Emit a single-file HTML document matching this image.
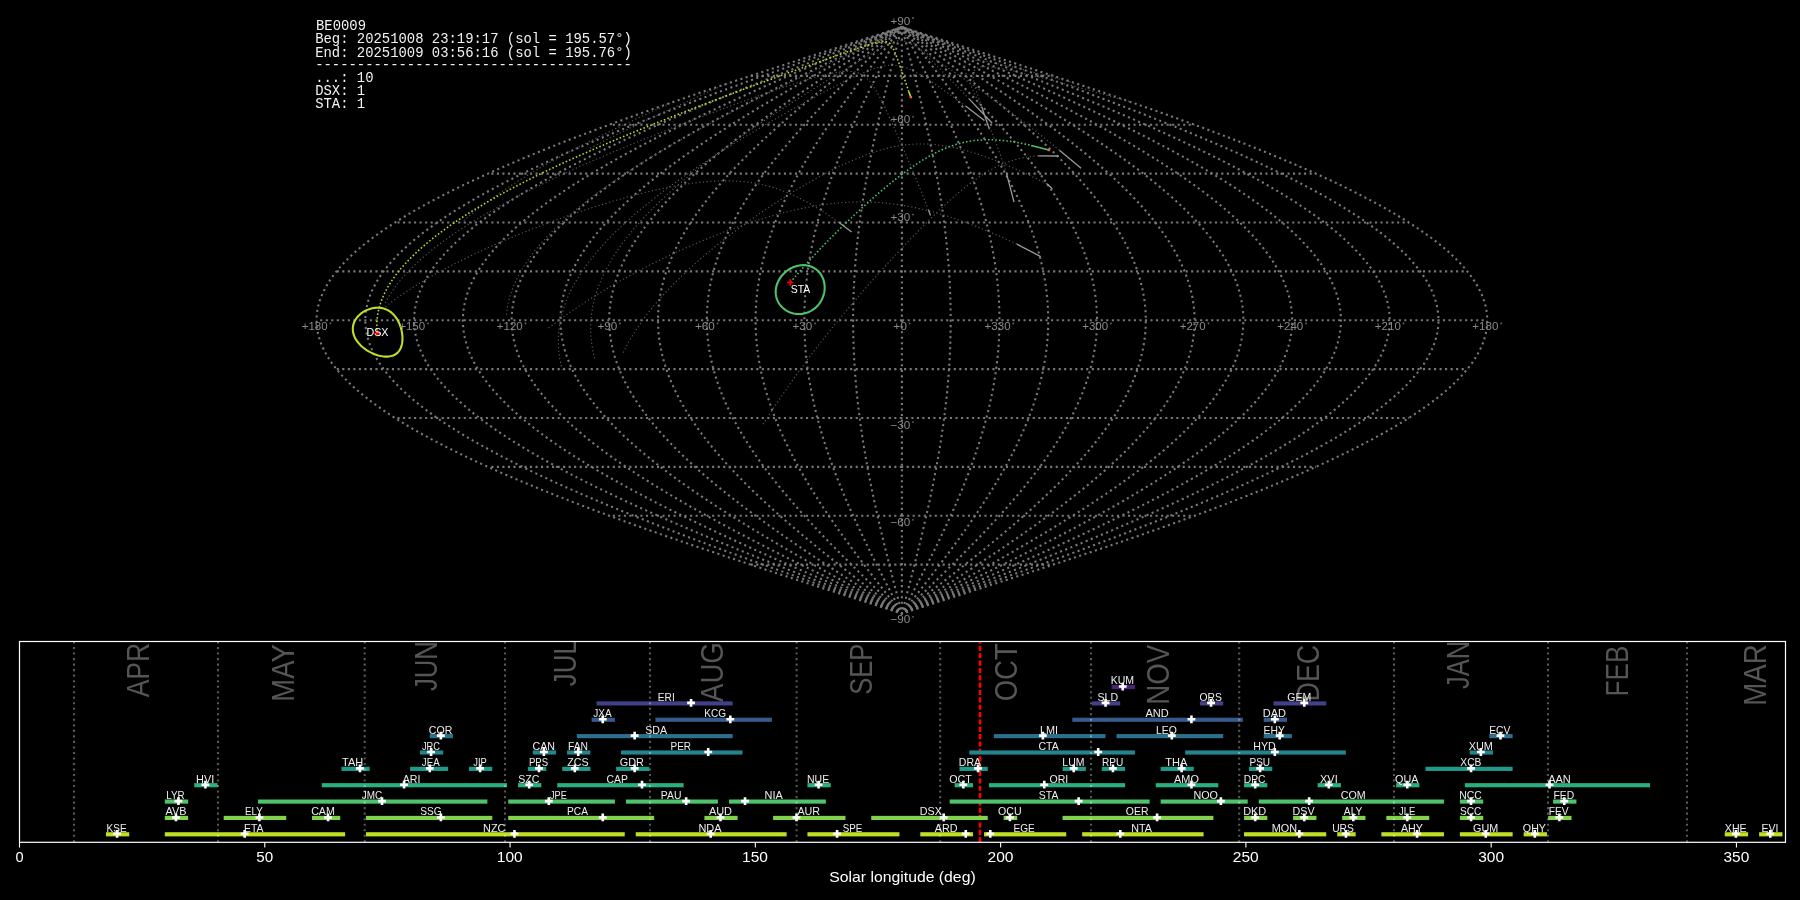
<!DOCTYPE html>
<html><head><meta charset="utf-8"><style>html,body{margin:0;padding:0;background:#000;width:1800px;height:900px;overflow:hidden}svg{display:block;will-change:transform}</style></head>
<body><svg width="1800" height="900" viewBox="0 0 1800 900"><rect width="1800" height="900" fill="#000"/>
<g fill="none" stroke="#7a7a7a" stroke-width="2.08" stroke-dasharray="2.08 3.44"><path d="M901.9 564.6 H750.4"/><path d="M901.9 564.6 H1053.4" stroke-dashoffset="3.43"/><path d="M901.9 515.73 H609.22"/><path d="M901.9 515.73 H1194.58" stroke-dashoffset="0.25"/><path d="M901.9 466.86 H487.99"/><path d="M901.9 466.86 H1315.81" stroke-dashoffset="0.78"/><path d="M901.9 417.99 H394.96"/><path d="M901.9 417.99 H1408.84" stroke-dashoffset="1.6"/><path d="M901.9 369.12 H336.49"/><path d="M901.9 369.12 H1467.31" stroke-dashoffset="3.32"/><path d="M901.9 320.25 H316.54"/><path d="M901.9 320.25 H1487.26" stroke-dashoffset="5.37"/><path d="M901.9 271.38 H336.49"/><path d="M901.9 271.38 H1467.31" stroke-dashoffset="3.32"/><path d="M901.9 222.51 H394.96"/><path d="M901.9 222.51 H1408.84" stroke-dashoffset="1.6"/><path d="M901.9 173.64 H487.99"/><path d="M901.9 173.64 H1315.81" stroke-dashoffset="0.78"/><path d="M901.9 124.77 H609.22"/><path d="M901.9 124.77 H1194.58" stroke-dashoffset="0.25"/><path d="M901.9 75.9 H750.4"/><path d="M901.9 75.9 H1053.4" stroke-dashoffset="3.43"/><path d="M901.9 613.47 L912.12 610.21 L922.33 606.95 L932.54 603.7 L942.73 600.44 L952.92 597.18 L963.09 593.92 L973.24 590.66 L983.37 587.41 L993.47 584.15 L1003.55 580.89 L1013.59 577.63 L1023.6 574.37 L1033.58 571.12 L1043.51 567.86 L1053.4 564.6 L1063.25 561.34 L1073.04 558.08 L1082.79 554.83 L1092.47 551.57 L1102.1 548.31 L1111.67 545.05 L1121.18 541.79 L1130.62 538.54 L1139.99 535.28 L1149.28 532.02 L1158.5 528.76 L1167.65 525.5 L1176.71 522.25 L1185.69 518.99 L1194.58 515.73 L1203.38 512.47 L1212.09 509.21 L1220.71 505.96 L1229.23 502.7 L1237.65 499.44 L1245.97 496.18 L1254.18 492.92 L1262.28 489.67 L1270.28 486.41 L1278.16 483.15 L1285.93 479.89 L1293.58 476.63 L1301.11 473.38 L1308.53 470.12 L1315.81 466.86 L1322.97 463.6 L1330.01 460.34 L1336.91 457.09 L1343.68 453.83 L1350.31 450.57 L1356.81 447.31 L1363.17 444.05 L1369.39 440.8 L1375.47 437.54 L1381.4 434.28 L1387.19 431.02 L1392.82 427.76 L1398.31 424.51 L1403.65 421.25 L1408.84 417.99 L1413.87 414.73 L1418.74 411.47 L1423.46 408.22 L1428.02 404.96 L1432.42 401.7 L1436.65 398.44 L1440.73 395.18 L1444.64 391.93 L1448.38 388.67 L1451.96 385.41 L1455.37 382.15 L1458.61 378.89 L1461.68 375.64 L1464.58 372.38 L1467.31 369.12 L1469.87 365.86 L1472.26 362.6 L1474.47 359.35 L1476.51 356.09 L1478.37 352.83 L1480.05 349.57 L1481.56 346.31 L1482.9 343.06 L1484.05 339.8 L1485.03 336.54 L1485.83 333.28 L1486.46 330.02 L1486.9 326.77 L1487.17 323.51 L1487.26 320.25 L1487.17 316.99 L1486.9 313.73 L1486.46 310.48 L1485.83 307.22 L1485.03 303.96 L1484.05 300.7 L1482.9 297.44 L1481.56 294.19 L1480.05 290.93 L1478.37 287.67 L1476.51 284.41 L1474.47 281.15 L1472.26 277.9 L1469.87 274.64 L1467.31 271.38 L1464.58 268.12 L1461.68 264.86 L1458.61 261.61 L1455.37 258.35 L1451.96 255.09 L1448.38 251.83 L1444.64 248.57 L1440.73 245.32 L1436.65 242.06 L1432.42 238.8 L1428.02 235.54 L1423.46 232.28 L1418.74 229.03 L1413.87 225.77 L1408.84 222.51 L1403.65 219.25 L1398.31 215.99 L1392.82 212.74 L1387.19 209.48 L1381.4 206.22 L1375.47 202.96 L1369.39 199.7 L1363.17 196.45 L1356.81 193.19 L1350.31 189.93 L1343.68 186.67 L1336.91 183.41 L1330.01 180.16 L1322.97 176.9 L1315.81 173.64 L1308.53 170.38 L1301.11 167.12 L1293.58 163.87 L1285.93 160.61 L1278.16 157.35 L1270.28 154.09 L1262.28 150.83 L1254.18 147.58 L1245.97 144.32 L1237.65 141.06 L1229.23 137.8 L1220.71 134.54 L1212.09 131.29 L1203.38 128.03 L1194.58 124.77 L1185.69 121.51 L1176.71 118.25 L1167.65 115 L1158.5 111.74 L1149.28 108.48 L1139.99 105.22 L1130.62 101.96 L1121.18 98.71 L1111.67 95.45 L1102.1 92.19 L1092.47 88.93 L1082.79 85.67 L1073.04 82.42 L1063.25 79.16 L1053.4 75.9 L1043.51 72.64 L1033.58 69.38 L1023.6 66.13 L1013.59 62.87 L1003.55 59.61 L993.47 56.35 L983.37 53.09 L973.24 49.84 L963.09 46.58 L952.92 43.32 L942.73 40.06 L932.54 36.8 L922.33 33.55 L912.12 30.29 L901.9 27.03" stroke-dashoffset="1.3"/><path d="M901.9 613.47 L911.26 610.21 L920.63 606.95 L929.98 603.7 L939.33 600.44 L948.67 597.18 L957.99 593.92 L967.29 590.66 L976.58 587.41 L985.84 584.15 L995.08 580.89 L1004.28 577.63 L1013.46 574.37 L1022.6 571.12 L1031.71 567.86 L1040.78 564.6 L1049.8 561.34 L1058.78 558.08 L1067.71 554.83 L1076.59 551.57 L1085.42 548.31 L1094.19 545.05 L1102.91 541.79 L1111.56 538.54 L1120.15 535.28 L1128.67 532.02 L1137.12 528.76 L1145.5 525.5 L1153.81 522.25 L1162.04 518.99 L1170.19 515.73 L1178.26 512.47 L1186.24 509.21 L1194.14 505.96 L1201.95 502.7 L1209.67 499.44 L1217.29 496.18 L1224.82 492.92 L1232.25 489.67 L1239.58 486.41 L1246.81 483.15 L1253.93 479.89 L1260.94 476.63 L1267.85 473.38 L1274.64 470.12 L1281.32 466.86 L1287.88 463.6 L1294.33 460.34 L1300.66 457.09 L1306.86 453.83 L1312.94 450.57 L1318.9 447.31 L1324.73 444.05 L1330.43 440.8 L1336 437.54 L1341.44 434.28 L1346.74 431.02 L1351.91 427.76 L1356.95 424.51 L1361.84 421.25 L1366.59 417.99 L1371.2 414.73 L1375.67 411.47 L1380 408.22 L1384.17 404.96 L1388.21 401.7 L1392.09 398.44 L1395.82 395.18 L1399.41 391.93 L1402.84 388.67 L1406.12 385.41 L1409.25 382.15 L1412.22 378.89 L1415.03 375.64 L1417.69 372.38 L1420.2 369.12 L1422.54 365.86 L1424.73 362.6 L1426.75 359.35 L1428.62 356.09 L1430.33 352.83 L1431.87 349.57 L1433.26 346.31 L1434.48 343.06 L1435.54 339.8 L1436.44 336.54 L1437.17 333.28 L1437.74 330.02 L1438.15 326.77 L1438.4 323.51 L1438.48 320.25 L1438.4 316.99 L1438.15 313.73 L1437.74 310.48 L1437.17 307.22 L1436.44 303.96 L1435.54 300.7 L1434.48 297.44 L1433.26 294.19 L1431.87 290.93 L1430.33 287.67 L1428.62 284.41 L1426.75 281.15 L1424.73 277.9 L1422.54 274.64 L1420.2 271.38 L1417.69 268.12 L1415.03 264.86 L1412.22 261.61 L1409.25 258.35 L1406.12 255.09 L1402.84 251.83 L1399.41 248.57 L1395.82 245.32 L1392.09 242.06 L1388.21 238.8 L1384.17 235.54 L1380 232.28 L1375.67 229.03 L1371.2 225.77 L1366.59 222.51 L1361.84 219.25 L1356.95 215.99 L1351.91 212.74 L1346.74 209.48 L1341.44 206.22 L1336 202.96 L1330.43 199.7 L1324.73 196.45 L1318.9 193.19 L1312.94 189.93 L1306.86 186.67 L1300.66 183.41 L1294.33 180.16 L1287.88 176.9 L1281.32 173.64 L1274.64 170.38 L1267.85 167.12 L1260.94 163.87 L1253.93 160.61 L1246.81 157.35 L1239.58 154.09 L1232.25 150.83 L1224.82 147.58 L1217.29 144.32 L1209.67 141.06 L1201.95 137.8 L1194.14 134.54 L1186.24 131.29 L1178.26 128.03 L1170.19 124.77 L1162.04 121.51 L1153.81 118.25 L1145.5 115 L1137.12 111.74 L1128.67 108.48 L1120.15 105.22 L1111.56 101.96 L1102.91 98.71 L1094.19 95.45 L1085.42 92.19 L1076.59 88.93 L1067.71 85.67 L1058.78 82.42 L1049.8 79.16 L1040.78 75.9 L1031.71 72.64 L1022.6 69.38 L1013.46 66.13 L1004.28 62.87 L995.08 59.61 L985.84 56.35 L976.58 53.09 L967.29 49.84 L957.99 46.58 L948.67 43.32 L939.33 40.06 L929.98 36.8 L920.63 33.55 L911.26 30.29 L901.9 27.03" stroke-dashoffset="1.3"/><path d="M901.9 613.47 L910.41 610.21 L918.92 606.95 L927.43 603.7 L935.93 600.44 L944.41 597.18 L952.89 593.92 L961.35 590.66 L969.79 587.41 L978.21 584.15 L986.61 580.89 L994.98 577.63 L1003.32 574.37 L1011.63 571.12 L1019.91 567.86 L1028.15 564.6 L1036.36 561.34 L1044.52 558.08 L1052.64 554.83 L1060.71 551.57 L1068.74 548.31 L1076.71 545.05 L1084.63 541.79 L1092.5 538.54 L1100.31 535.28 L1108.05 532.02 L1115.74 528.76 L1123.36 525.5 L1130.91 522.25 L1138.39 518.99 L1145.8 515.73 L1153.14 512.47 L1160.39 509.21 L1167.57 505.96 L1174.67 502.7 L1181.69 499.44 L1188.62 496.18 L1195.47 492.92 L1202.22 489.67 L1208.88 486.41 L1215.45 483.15 L1221.93 479.89 L1228.3 476.63 L1234.58 473.38 L1240.75 470.12 L1246.83 466.86 L1252.79 463.6 L1258.65 460.34 L1264.41 457.09 L1270.05 453.83 L1275.58 450.57 L1280.99 447.31 L1286.29 444.05 L1291.47 440.8 L1296.54 437.54 L1301.48 434.28 L1306.3 431.02 L1311 427.76 L1315.58 424.51 L1320.03 421.25 L1324.35 417.99 L1328.54 414.73 L1332.6 411.47 L1336.53 408.22 L1340.33 404.96 L1344 401.7 L1347.53 398.44 L1350.92 395.18 L1354.18 391.93 L1357.3 388.67 L1360.28 385.41 L1363.12 382.15 L1365.83 378.89 L1368.39 375.64 L1370.8 372.38 L1373.08 369.12 L1375.21 365.86 L1377.2 362.6 L1379.04 359.35 L1380.74 356.09 L1382.29 352.83 L1383.69 349.57 L1384.95 346.31 L1386.06 343.06 L1387.03 339.8 L1387.84 336.54 L1388.51 333.28 L1389.03 330.02 L1389.4 326.77 L1389.63 323.51 L1389.7 320.25 L1389.63 316.99 L1389.4 313.73 L1389.03 310.48 L1388.51 307.22 L1387.84 303.96 L1387.03 300.7 L1386.06 297.44 L1384.95 294.19 L1383.69 290.93 L1382.29 287.67 L1380.74 284.41 L1379.04 281.15 L1377.2 277.9 L1375.21 274.64 L1373.08 271.38 L1370.8 268.12 L1368.39 264.86 L1365.83 261.61 L1363.12 258.35 L1360.28 255.09 L1357.3 251.83 L1354.18 248.57 L1350.92 245.32 L1347.53 242.06 L1344 238.8 L1340.33 235.54 L1336.53 232.28 L1332.6 229.03 L1328.54 225.77 L1324.35 222.51 L1320.03 219.25 L1315.58 215.99 L1311 212.74 L1306.3 209.48 L1301.48 206.22 L1296.54 202.96 L1291.47 199.7 L1286.29 196.45 L1280.99 193.19 L1275.58 189.93 L1270.05 186.67 L1264.41 183.41 L1258.65 180.16 L1252.79 176.9 L1246.83 173.64 L1240.75 170.38 L1234.58 167.12 L1228.3 163.87 L1221.93 160.61 L1215.45 157.35 L1208.88 154.09 L1202.22 150.83 L1195.47 147.58 L1188.62 144.32 L1181.69 141.06 L1174.67 137.8 L1167.57 134.54 L1160.39 131.29 L1153.14 128.03 L1145.8 124.77 L1138.39 121.51 L1130.91 118.25 L1123.36 115 L1115.74 111.74 L1108.05 108.48 L1100.31 105.22 L1092.5 101.96 L1084.63 98.71 L1076.71 95.45 L1068.74 92.19 L1060.71 88.93 L1052.64 85.67 L1044.52 82.42 L1036.36 79.16 L1028.15 75.9 L1019.91 72.64 L1011.63 69.38 L1003.32 66.13 L994.98 62.87 L986.61 59.61 L978.21 56.35 L969.79 53.09 L961.35 49.84 L952.89 46.58 L944.41 43.32 L935.93 40.06 L927.43 36.8 L918.92 33.55 L910.41 30.29 L901.9 27.03" stroke-dashoffset="1.3"/><path d="M901.9 613.47 L909.56 610.21 L917.22 606.95 L924.88 603.7 L932.52 600.44 L940.16 597.18 L947.79 593.92 L955.4 590.66 L963 587.41 L970.58 584.15 L978.14 580.89 L985.67 577.63 L993.18 574.37 L1000.66 571.12 L1008.11 567.86 L1015.53 564.6 L1022.91 561.34 L1030.26 558.08 L1037.56 554.83 L1044.83 551.57 L1052.05 548.31 L1059.23 545.05 L1066.36 541.79 L1073.44 538.54 L1080.47 535.28 L1087.44 532.02 L1094.35 528.76 L1101.21 525.5 L1108.01 522.25 L1114.74 518.99 L1121.41 515.73 L1128.01 512.47 L1134.55 509.21 L1141.01 505.96 L1147.4 502.7 L1153.71 499.44 L1159.95 496.18 L1166.11 492.92 L1172.19 489.67 L1178.18 486.41 L1184.1 483.15 L1189.92 479.89 L1195.66 476.63 L1201.31 473.38 L1206.87 470.12 L1212.33 466.86 L1217.7 463.6 L1222.98 460.34 L1228.16 457.09 L1233.23 453.83 L1238.21 450.57 L1243.08 447.31 L1247.85 444.05 L1252.52 440.8 L1257.07 437.54 L1261.52 434.28 L1265.86 431.02 L1270.09 427.76 L1274.21 424.51 L1278.21 421.25 L1282.1 417.99 L1285.88 414.73 L1289.53 411.47 L1293.07 408.22 L1296.49 404.96 L1299.79 401.7 L1302.96 398.44 L1306.02 395.18 L1308.95 391.93 L1311.76 388.67 L1314.44 385.41 L1317 382.15 L1319.43 378.89 L1321.74 375.64 L1323.91 372.38 L1325.96 369.12 L1327.88 365.86 L1329.67 362.6 L1331.33 359.35 L1332.85 356.09 L1334.25 352.83 L1335.51 349.57 L1336.65 346.31 L1337.65 343.06 L1338.52 339.8 L1339.25 336.54 L1339.85 333.28 L1340.32 330.02 L1340.65 326.77 L1340.85 323.51 L1340.92 320.25 L1340.85 316.99 L1340.65 313.73 L1340.32 310.48 L1339.85 307.22 L1339.25 303.96 L1338.52 300.7 L1337.65 297.44 L1336.65 294.19 L1335.51 290.93 L1334.25 287.67 L1332.85 284.41 L1331.33 281.15 L1329.67 277.9 L1327.88 274.64 L1325.96 271.38 L1323.91 268.12 L1321.74 264.86 L1319.43 261.61 L1317 258.35 L1314.44 255.09 L1311.76 251.83 L1308.95 248.57 L1306.02 245.32 L1302.96 242.06 L1299.79 238.8 L1296.49 235.54 L1293.07 232.28 L1289.53 229.03 L1285.88 225.77 L1282.1 222.51 L1278.21 219.25 L1274.21 215.99 L1270.09 212.74 L1265.86 209.48 L1261.52 206.22 L1257.07 202.96 L1252.52 199.7 L1247.85 196.45 L1243.08 193.19 L1238.21 189.93 L1233.23 186.67 L1228.16 183.41 L1222.98 180.16 L1217.7 176.9 L1212.33 173.64 L1206.87 170.38 L1201.31 167.12 L1195.66 163.87 L1189.92 160.61 L1184.1 157.35 L1178.18 154.09 L1172.19 150.83 L1166.11 147.58 L1159.95 144.32 L1153.71 141.06 L1147.4 137.8 L1141.01 134.54 L1134.55 131.29 L1128.01 128.03 L1121.41 124.77 L1114.74 121.51 L1108.01 118.25 L1101.21 115 L1094.35 111.74 L1087.44 108.48 L1080.47 105.22 L1073.44 101.96 L1066.36 98.71 L1059.23 95.45 L1052.05 92.19 L1044.83 88.93 L1037.56 85.67 L1030.26 82.42 L1022.91 79.16 L1015.53 75.9 L1008.11 72.64 L1000.66 69.38 L993.18 66.13 L985.67 62.87 L978.14 59.61 L970.58 56.35 L963 53.09 L955.4 49.84 L947.79 46.58 L940.16 43.32 L932.52 40.06 L924.88 36.8 L917.22 33.55 L909.56 30.29 L901.9 27.03" stroke-dashoffset="1.3"/><path d="M901.9 613.47 L908.71 610.21 L915.52 606.95 L922.32 603.7 L929.12 600.44 L935.91 597.18 L942.69 593.92 L949.46 590.66 L956.21 587.41 L962.95 584.15 L969.66 580.89 L976.36 577.63 L983.04 574.37 L989.68 571.12 L996.31 567.86 L1002.9 564.6 L1009.46 561.34 L1016 558.08 L1022.49 554.83 L1028.95 551.57 L1035.37 548.31 L1041.75 545.05 L1048.09 541.79 L1054.38 538.54 L1060.62 535.28 L1066.82 532.02 L1072.97 528.76 L1079.07 525.5 L1085.11 522.25 L1091.09 518.99 L1097.02 515.73 L1102.89 512.47 L1108.7 509.21 L1114.44 505.96 L1120.12 502.7 L1125.73 499.44 L1131.28 496.18 L1136.75 492.92 L1142.16 489.67 L1147.49 486.41 L1152.74 483.15 L1157.92 479.89 L1163.02 476.63 L1168.04 473.38 L1172.98 470.12 L1177.84 466.86 L1182.62 463.6 L1187.3 460.34 L1191.9 457.09 L1196.42 453.83 L1200.84 450.57 L1205.17 447.31 L1209.41 444.05 L1213.56 440.8 L1217.61 437.54 L1221.57 434.28 L1225.42 431.02 L1229.18 427.76 L1232.84 424.51 L1236.4 421.25 L1239.86 417.99 L1243.21 414.73 L1246.46 411.47 L1249.61 408.22 L1252.65 404.96 L1255.58 401.7 L1258.4 398.44 L1261.12 395.18 L1263.72 391.93 L1266.22 388.67 L1268.61 385.41 L1270.88 382.15 L1273.04 378.89 L1275.09 375.64 L1277.02 372.38 L1278.84 369.12 L1280.55 365.86 L1282.14 362.6 L1283.61 359.35 L1284.97 356.09 L1286.21 352.83 L1287.34 349.57 L1288.34 346.31 L1289.23 343.06 L1290 339.8 L1290.66 336.54 L1291.19 333.28 L1291.61 330.02 L1291.9 326.77 L1292.08 323.51 L1292.14 320.25 L1292.08 316.99 L1291.9 313.73 L1291.61 310.48 L1291.19 307.22 L1290.66 303.96 L1290 300.7 L1289.23 297.44 L1288.34 294.19 L1287.34 290.93 L1286.21 287.67 L1284.97 284.41 L1283.61 281.15 L1282.14 277.9 L1280.55 274.64 L1278.84 271.38 L1277.02 268.12 L1275.09 264.86 L1273.04 261.61 L1270.88 258.35 L1268.61 255.09 L1266.22 251.83 L1263.72 248.57 L1261.12 245.32 L1258.4 242.06 L1255.58 238.8 L1252.65 235.54 L1249.61 232.28 L1246.46 229.03 L1243.21 225.77 L1239.86 222.51 L1236.4 219.25 L1232.84 215.99 L1229.18 212.74 L1225.42 209.48 L1221.57 206.22 L1217.61 202.96 L1213.56 199.7 L1209.41 196.45 L1205.17 193.19 L1200.84 189.93 L1196.42 186.67 L1191.9 183.41 L1187.3 180.16 L1182.62 176.9 L1177.84 173.64 L1172.98 170.38 L1168.04 167.12 L1163.02 163.87 L1157.92 160.61 L1152.74 157.35 L1147.49 154.09 L1142.16 150.83 L1136.75 147.58 L1131.28 144.32 L1125.73 141.06 L1120.12 137.8 L1114.44 134.54 L1108.7 131.29 L1102.89 128.03 L1097.02 124.77 L1091.09 121.51 L1085.11 118.25 L1079.07 115 L1072.97 111.74 L1066.82 108.48 L1060.62 105.22 L1054.38 101.96 L1048.09 98.71 L1041.75 95.45 L1035.37 92.19 L1028.95 88.93 L1022.49 85.67 L1016 82.42 L1009.46 79.16 L1002.9 75.9 L996.31 72.64 L989.68 69.38 L983.04 66.13 L976.36 62.87 L969.66 59.61 L962.95 56.35 L956.21 53.09 L949.46 49.84 L942.69 46.58 L935.91 43.32 L929.12 40.06 L922.32 36.8 L915.52 33.55 L908.71 30.29 L901.9 27.03" stroke-dashoffset="1.3"/><path d="M901.9 613.47 L907.86 610.21 L913.82 606.95 L919.77 603.7 L925.72 600.44 L931.66 597.18 L937.59 593.92 L943.51 590.66 L949.42 587.41 L955.32 584.15 L961.19 580.89 L967.05 577.63 L972.89 574.37 L978.71 571.12 L984.51 567.86 L990.28 564.6 L996.02 561.34 L1001.73 558.08 L1007.42 554.83 L1013.07 551.57 L1018.69 548.31 L1024.27 545.05 L1029.81 541.79 L1035.32 538.54 L1040.78 535.28 L1046.21 532.02 L1051.59 528.76 L1056.92 525.5 L1062.21 522.25 L1067.44 518.99 L1072.63 515.73 L1077.76 512.47 L1082.85 509.21 L1087.87 505.96 L1092.84 502.7 L1097.75 499.44 L1102.61 496.18 L1107.4 492.92 L1112.12 489.67 L1116.79 486.41 L1121.39 483.15 L1125.92 479.89 L1130.38 476.63 L1134.78 473.38 L1139.1 470.12 L1143.35 466.86 L1147.53 463.6 L1151.63 460.34 L1155.65 457.09 L1159.6 453.83 L1163.47 450.57 L1167.26 447.31 L1170.97 444.05 L1174.6 440.8 L1178.15 437.54 L1181.61 434.28 L1184.98 431.02 L1188.27 427.76 L1191.47 424.51 L1194.59 421.25 L1197.61 417.99 L1200.55 414.73 L1203.39 411.47 L1206.14 408.22 L1208.8 404.96 L1211.37 401.7 L1213.84 398.44 L1216.22 395.18 L1218.5 391.93 L1220.68 388.67 L1222.77 385.41 L1224.76 382.15 L1226.65 378.89 L1228.44 375.64 L1230.13 372.38 L1231.73 369.12 L1233.22 365.86 L1234.61 362.6 L1235.9 359.35 L1237.09 356.09 L1238.17 352.83 L1239.16 349.57 L1240.04 346.31 L1240.81 343.06 L1241.49 339.8 L1242.06 336.54 L1242.53 333.28 L1242.89 330.02 L1243.15 326.77 L1243.31 323.51 L1243.36 320.25 L1243.31 316.99 L1243.15 313.73 L1242.89 310.48 L1242.53 307.22 L1242.06 303.96 L1241.49 300.7 L1240.81 297.44 L1240.04 294.19 L1239.16 290.93 L1238.17 287.67 L1237.09 284.41 L1235.9 281.15 L1234.61 277.9 L1233.22 274.64 L1231.73 271.38 L1230.13 268.12 L1228.44 264.86 L1226.65 261.61 L1224.76 258.35 L1222.77 255.09 L1220.68 251.83 L1218.5 248.57 L1216.22 245.32 L1213.84 242.06 L1211.37 238.8 L1208.8 235.54 L1206.14 232.28 L1203.39 229.03 L1200.55 225.77 L1197.61 222.51 L1194.59 219.25 L1191.47 215.99 L1188.27 212.74 L1184.98 209.48 L1181.61 206.22 L1178.15 202.96 L1174.6 199.7 L1170.97 196.45 L1167.26 193.19 L1163.47 189.93 L1159.6 186.67 L1155.65 183.41 L1151.63 180.16 L1147.53 176.9 L1143.35 173.64 L1139.1 170.38 L1134.78 167.12 L1130.38 163.87 L1125.92 160.61 L1121.39 157.35 L1116.79 154.09 L1112.12 150.83 L1107.4 147.58 L1102.61 144.32 L1097.75 141.06 L1092.84 137.8 L1087.87 134.54 L1082.85 131.29 L1077.76 128.03 L1072.63 124.77 L1067.44 121.51 L1062.21 118.25 L1056.92 115 L1051.59 111.74 L1046.21 108.48 L1040.78 105.22 L1035.32 101.96 L1029.81 98.71 L1024.27 95.45 L1018.69 92.19 L1013.07 88.93 L1007.42 85.67 L1001.73 82.42 L996.02 79.16 L990.28 75.9 L984.51 72.64 L978.71 69.38 L972.89 66.13 L967.05 62.87 L961.19 59.61 L955.32 56.35 L949.42 53.09 L943.51 49.84 L937.59 46.58 L931.66 43.32 L925.72 40.06 L919.77 36.8 L913.82 33.55 L907.86 30.29 L901.9 27.03" stroke-dashoffset="1.3"/><path d="M901.9 613.47 L907.01 610.21 L912.11 606.95 L917.22 603.7 L922.32 600.44 L927.41 597.18 L932.49 593.92 L937.57 590.66 L942.63 587.41 L947.69 584.15 L952.72 580.89 L957.75 577.63 L962.75 574.37 L967.74 571.12 L972.71 567.86 L977.65 564.6 L982.57 561.34 L987.47 558.08 L992.34 554.83 L997.19 551.57 L1002 548.31 L1006.79 545.05 L1011.54 541.79 L1016.26 538.54 L1020.94 535.28 L1025.59 532.02 L1030.2 528.76 L1034.77 525.5 L1039.3 522.25 L1043.79 518.99 L1048.24 515.73 L1052.64 512.47 L1057 509.21 L1061.3 505.96 L1065.56 502.7 L1069.77 499.44 L1073.93 496.18 L1078.04 492.92 L1082.09 489.67 L1086.09 486.41 L1090.03 483.15 L1093.92 479.89 L1097.74 476.63 L1101.51 473.38 L1105.21 470.12 L1108.86 466.86 L1112.44 463.6 L1115.95 460.34 L1119.4 457.09 L1122.79 453.83 L1126.11 450.57 L1129.36 447.31 L1132.53 444.05 L1135.64 440.8 L1138.68 437.54 L1141.65 434.28 L1144.54 431.02 L1147.36 427.76 L1150.11 424.51 L1152.78 421.25 L1155.37 417.99 L1157.88 414.73 L1160.32 411.47 L1162.68 408.22 L1164.96 404.96 L1167.16 401.7 L1169.28 398.44 L1171.31 395.18 L1173.27 391.93 L1175.14 388.67 L1176.93 385.41 L1178.63 382.15 L1180.26 378.89 L1181.79 375.64 L1183.24 372.38 L1184.61 369.12 L1185.89 365.86 L1187.08 362.6 L1188.18 359.35 L1189.2 356.09 L1190.13 352.83 L1190.98 349.57 L1191.73 346.31 L1192.4 343.06 L1192.98 339.8 L1193.47 336.54 L1193.87 333.28 L1194.18 330.02 L1194.4 326.77 L1194.54 323.51 L1194.58 320.25 L1194.54 316.99 L1194.4 313.73 L1194.18 310.48 L1193.87 307.22 L1193.47 303.96 L1192.98 300.7 L1192.4 297.44 L1191.73 294.19 L1190.98 290.93 L1190.13 287.67 L1189.2 284.41 L1188.18 281.15 L1187.08 277.9 L1185.89 274.64 L1184.61 271.38 L1183.24 268.12 L1181.79 264.86 L1180.26 261.61 L1178.63 258.35 L1176.93 255.09 L1175.14 251.83 L1173.27 248.57 L1171.31 245.32 L1169.28 242.06 L1167.16 238.8 L1164.96 235.54 L1162.68 232.28 L1160.32 229.03 L1157.88 225.77 L1155.37 222.51 L1152.78 219.25 L1150.11 215.99 L1147.36 212.74 L1144.54 209.48 L1141.65 206.22 L1138.68 202.96 L1135.64 199.7 L1132.53 196.45 L1129.36 193.19 L1126.11 189.93 L1122.79 186.67 L1119.4 183.41 L1115.95 180.16 L1112.44 176.9 L1108.86 173.64 L1105.21 170.38 L1101.51 167.12 L1097.74 163.87 L1093.92 160.61 L1090.03 157.35 L1086.09 154.09 L1082.09 150.83 L1078.04 147.58 L1073.93 144.32 L1069.77 141.06 L1065.56 137.8 L1061.3 134.54 L1057 131.29 L1052.64 128.03 L1048.24 124.77 L1043.79 121.51 L1039.3 118.25 L1034.77 115 L1030.2 111.74 L1025.59 108.48 L1020.94 105.22 L1016.26 101.96 L1011.54 98.71 L1006.79 95.45 L1002 92.19 L997.19 88.93 L992.34 85.67 L987.47 82.42 L982.57 79.16 L977.65 75.9 L972.71 72.64 L967.74 69.38 L962.75 66.13 L957.75 62.87 L952.72 59.61 L947.69 56.35 L942.63 53.09 L937.57 49.84 L932.49 46.58 L927.41 43.32 L922.32 40.06 L917.22 36.8 L912.11 33.55 L907.01 30.29 L901.9 27.03" stroke-dashoffset="1.3"/><path d="M901.9 613.47 L906.16 610.21 L910.41 606.95 L914.66 603.7 L918.91 600.44 L923.16 597.18 L927.39 593.92 L931.62 590.66 L935.84 587.41 L940.05 584.15 L944.25 580.89 L948.44 577.63 L952.61 574.37 L956.77 571.12 L960.9 567.86 L965.03 564.6 L969.13 561.34 L973.21 558.08 L977.27 554.83 L981.31 551.57 L985.32 548.31 L989.31 545.05 L993.27 541.79 L997.2 538.54 L1001.1 535.28 L1004.98 532.02 L1008.82 528.76 L1012.63 525.5 L1016.4 522.25 L1020.15 518.99 L1023.85 515.73 L1027.52 512.47 L1031.15 509.21 L1034.74 505.96 L1038.29 502.7 L1041.8 499.44 L1045.26 496.18 L1048.68 492.92 L1052.06 489.67 L1055.39 486.41 L1058.68 483.15 L1061.91 479.89 L1065.1 476.63 L1068.24 473.38 L1071.33 470.12 L1074.36 466.86 L1077.35 463.6 L1080.28 460.34 L1083.15 457.09 L1085.97 453.83 L1088.74 450.57 L1091.45 447.31 L1094.1 444.05 L1096.69 440.8 L1099.22 437.54 L1101.69 434.28 L1104.1 431.02 L1106.45 427.76 L1108.74 424.51 L1110.96 421.25 L1113.12 417.99 L1115.22 414.73 L1117.25 411.47 L1119.22 408.22 L1121.12 404.96 L1122.95 401.7 L1124.71 398.44 L1126.41 395.18 L1128.04 391.93 L1129.6 388.67 L1131.09 385.41 L1132.51 382.15 L1133.86 378.89 L1135.14 375.64 L1136.35 372.38 L1137.49 369.12 L1138.56 365.86 L1139.55 362.6 L1140.47 359.35 L1141.32 356.09 L1142.09 352.83 L1142.8 349.57 L1143.43 346.31 L1143.98 343.06 L1144.46 339.8 L1144.87 336.54 L1145.21 333.28 L1145.47 330.02 L1145.65 326.77 L1145.76 323.51 L1145.8 320.25 L1145.76 316.99 L1145.65 313.73 L1145.47 310.48 L1145.21 307.22 L1144.87 303.96 L1144.46 300.7 L1143.98 297.44 L1143.43 294.19 L1142.8 290.93 L1142.09 287.67 L1141.32 284.41 L1140.47 281.15 L1139.55 277.9 L1138.56 274.64 L1137.49 271.38 L1136.35 268.12 L1135.14 264.86 L1133.86 261.61 L1132.51 258.35 L1131.09 255.09 L1129.6 251.83 L1128.04 248.57 L1126.41 245.32 L1124.71 242.06 L1122.95 238.8 L1121.12 235.54 L1119.22 232.28 L1117.25 229.03 L1115.22 225.77 L1113.12 222.51 L1110.96 219.25 L1108.74 215.99 L1106.45 212.74 L1104.1 209.48 L1101.69 206.22 L1099.22 202.96 L1096.69 199.7 L1094.1 196.45 L1091.45 193.19 L1088.74 189.93 L1085.97 186.67 L1083.15 183.41 L1080.28 180.16 L1077.35 176.9 L1074.36 173.64 L1071.33 170.38 L1068.24 167.12 L1065.1 163.87 L1061.91 160.61 L1058.68 157.35 L1055.39 154.09 L1052.06 150.83 L1048.68 147.58 L1045.26 144.32 L1041.8 141.06 L1038.29 137.8 L1034.74 134.54 L1031.15 131.29 L1027.52 128.03 L1023.85 124.77 L1020.15 121.51 L1016.4 118.25 L1012.63 115 L1008.82 111.74 L1004.98 108.48 L1001.1 105.22 L997.2 101.96 L993.27 98.71 L989.31 95.45 L985.32 92.19 L981.31 88.93 L977.27 85.67 L973.21 82.42 L969.13 79.16 L965.03 75.9 L960.9 72.64 L956.77 69.38 L952.61 66.13 L948.44 62.87 L944.25 59.61 L940.05 56.35 L935.84 53.09 L931.62 49.84 L927.39 46.58 L923.16 43.32 L918.91 40.06 L914.66 36.8 L910.41 33.55 L906.16 30.29 L901.9 27.03" stroke-dashoffset="1.3"/><path d="M901.9 613.47 L905.31 610.21 L908.71 606.95 L912.11 603.7 L915.51 600.44 L918.91 597.18 L922.3 593.92 L925.68 590.66 L929.06 587.41 L932.42 584.15 L935.78 580.89 L939.13 577.63 L942.47 574.37 L945.79 571.12 L949.1 567.86 L952.4 564.6 L955.68 561.34 L958.95 558.08 L962.2 554.83 L965.42 551.57 L968.63 548.31 L971.82 545.05 L974.99 541.79 L978.14 538.54 L981.26 535.28 L984.36 532.02 L987.43 528.76 L990.48 525.5 L993.5 522.25 L996.5 518.99 L999.46 515.73 L1002.39 512.47 L1005.3 509.21 L1008.17 505.96 L1011.01 502.7 L1013.82 499.44 L1016.59 496.18 L1019.33 492.92 L1022.03 489.67 L1024.69 486.41 L1027.32 483.15 L1029.91 479.89 L1032.46 476.63 L1034.97 473.38 L1037.44 470.12 L1039.87 466.86 L1042.26 463.6 L1044.6 460.34 L1046.9 457.09 L1049.16 453.83 L1051.37 450.57 L1053.54 447.31 L1055.66 444.05 L1057.73 440.8 L1059.76 437.54 L1061.73 434.28 L1063.66 431.02 L1065.54 427.76 L1067.37 424.51 L1069.15 421.25 L1070.88 417.99 L1072.56 414.73 L1074.18 411.47 L1075.75 408.22 L1077.27 404.96 L1078.74 401.7 L1080.15 398.44 L1081.51 395.18 L1082.81 391.93 L1084.06 388.67 L1085.25 385.41 L1086.39 382.15 L1087.47 378.89 L1088.49 375.64 L1089.46 372.38 L1090.37 369.12 L1091.22 365.86 L1092.02 362.6 L1092.76 359.35 L1093.44 356.09 L1094.06 352.83 L1094.62 349.57 L1095.12 346.31 L1095.57 343.06 L1095.95 339.8 L1096.28 336.54 L1096.54 333.28 L1096.75 330.02 L1096.9 326.77 L1096.99 323.51 L1097.02 320.25 L1096.99 316.99 L1096.9 313.73 L1096.75 310.48 L1096.54 307.22 L1096.28 303.96 L1095.95 300.7 L1095.57 297.44 L1095.12 294.19 L1094.62 290.93 L1094.06 287.67 L1093.44 284.41 L1092.76 281.15 L1092.02 277.9 L1091.22 274.64 L1090.37 271.38 L1089.46 268.12 L1088.49 264.86 L1087.47 261.61 L1086.39 258.35 L1085.25 255.09 L1084.06 251.83 L1082.81 248.57 L1081.51 245.32 L1080.15 242.06 L1078.74 238.8 L1077.27 235.54 L1075.75 232.28 L1074.18 229.03 L1072.56 225.77 L1070.88 222.51 L1069.15 219.25 L1067.37 215.99 L1065.54 212.74 L1063.66 209.48 L1061.73 206.22 L1059.76 202.96 L1057.73 199.7 L1055.66 196.45 L1053.54 193.19 L1051.37 189.93 L1049.16 186.67 L1046.9 183.41 L1044.6 180.16 L1042.26 176.9 L1039.87 173.64 L1037.44 170.38 L1034.97 167.12 L1032.46 163.87 L1029.91 160.61 L1027.32 157.35 L1024.69 154.09 L1022.03 150.83 L1019.33 147.58 L1016.59 144.32 L1013.82 141.06 L1011.01 137.8 L1008.17 134.54 L1005.3 131.29 L1002.39 128.03 L999.46 124.77 L996.5 121.51 L993.5 118.25 L990.48 115 L987.43 111.74 L984.36 108.48 L981.26 105.22 L978.14 101.96 L974.99 98.71 L971.82 95.45 L968.63 92.19 L965.42 88.93 L962.2 85.67 L958.95 82.42 L955.68 79.16 L952.4 75.9 L949.1 72.64 L945.79 69.38 L942.47 66.13 L939.13 62.87 L935.78 59.61 L932.42 56.35 L929.06 53.09 L925.68 49.84 L922.3 46.58 L918.91 43.32 L915.51 40.06 L912.11 36.8 L908.71 33.55 L905.31 30.29 L901.9 27.03" stroke-dashoffset="1.3"/><path d="M901.9 613.47 L904.45 610.21 L907.01 606.95 L909.56 603.7 L912.11 600.44 L914.65 597.18 L917.2 593.92 L919.73 590.66 L922.27 587.41 L924.79 584.15 L927.31 580.89 L929.82 577.63 L932.33 574.37 L934.82 571.12 L937.3 567.86 L939.78 564.6 L942.24 561.34 L944.69 558.08 L947.12 554.83 L949.54 551.57 L951.95 548.31 L954.34 545.05 L956.72 541.79 L959.08 538.54 L961.42 535.28 L963.75 532.02 L966.05 528.76 L968.34 525.5 L970.6 522.25 L972.85 518.99 L975.07 515.73 L977.27 512.47 L979.45 509.21 L981.6 505.96 L983.73 502.7 L985.84 499.44 L987.92 496.18 L989.97 492.92 L992 489.67 L993.99 486.41 L995.97 483.15 L997.91 479.89 L999.82 476.63 L1001.7 473.38 L1003.56 470.12 L1005.38 466.86 L1007.17 463.6 L1008.93 460.34 L1010.65 457.09 L1012.34 453.83 L1014 450.57 L1015.63 447.31 L1017.22 444.05 L1018.77 440.8 L1020.29 437.54 L1021.77 434.28 L1023.22 431.02 L1024.63 427.76 L1026 424.51 L1027.34 421.25 L1028.63 417.99 L1029.89 414.73 L1031.11 411.47 L1032.29 408.22 L1033.43 404.96 L1034.53 401.7 L1035.59 398.44 L1036.61 395.18 L1037.58 391.93 L1038.52 388.67 L1039.41 385.41 L1040.27 382.15 L1041.08 378.89 L1041.85 375.64 L1042.57 372.38 L1043.25 369.12 L1043.89 365.86 L1044.49 362.6 L1045.04 359.35 L1045.55 356.09 L1046.02 352.83 L1046.44 349.57 L1046.82 346.31 L1047.15 343.06 L1047.44 339.8 L1047.68 336.54 L1047.88 333.28 L1048.04 330.02 L1048.15 326.77 L1048.22 323.51 L1048.24 320.25 L1048.22 316.99 L1048.15 313.73 L1048.04 310.48 L1047.88 307.22 L1047.68 303.96 L1047.44 300.7 L1047.15 297.44 L1046.82 294.19 L1046.44 290.93 L1046.02 287.67 L1045.55 284.41 L1045.04 281.15 L1044.49 277.9 L1043.89 274.64 L1043.25 271.38 L1042.57 268.12 L1041.85 264.86 L1041.08 261.61 L1040.27 258.35 L1039.41 255.09 L1038.52 251.83 L1037.58 248.57 L1036.61 245.32 L1035.59 242.06 L1034.53 238.8 L1033.43 235.54 L1032.29 232.28 L1031.11 229.03 L1029.89 225.77 L1028.63 222.51 L1027.34 219.25 L1026 215.99 L1024.63 212.74 L1023.22 209.48 L1021.77 206.22 L1020.29 202.96 L1018.77 199.7 L1017.22 196.45 L1015.63 193.19 L1014 189.93 L1012.34 186.67 L1010.65 183.41 L1008.93 180.16 L1007.17 176.9 L1005.38 173.64 L1003.56 170.38 L1001.7 167.12 L999.82 163.87 L997.91 160.61 L995.97 157.35 L993.99 154.09 L992 150.83 L989.97 147.58 L987.92 144.32 L985.84 141.06 L983.73 137.8 L981.6 134.54 L979.45 131.29 L977.27 128.03 L975.07 124.77 L972.85 121.51 L970.6 118.25 L968.34 115 L966.05 111.74 L963.75 108.48 L961.42 105.22 L959.08 101.96 L956.72 98.71 L954.34 95.45 L951.95 92.19 L949.54 88.93 L947.12 85.67 L944.69 82.42 L942.24 79.16 L939.78 75.9 L937.3 72.64 L934.82 69.38 L932.33 66.13 L929.82 62.87 L927.31 59.61 L924.79 56.35 L922.27 53.09 L919.73 49.84 L917.2 46.58 L914.65 43.32 L912.11 40.06 L909.56 36.8 L907.01 33.55 L904.45 30.29 L901.9 27.03" stroke-dashoffset="1.3"/><path d="M901.9 613.47 L903.6 610.21 L905.3 606.95 L907.01 603.7 L908.71 600.44 L910.4 597.18 L912.1 593.92 L913.79 590.66 L915.48 587.41 L917.16 584.15 L918.84 580.89 L920.52 577.63 L922.18 574.37 L923.85 571.12 L925.5 567.86 L927.15 564.6 L928.79 561.34 L930.42 558.08 L932.05 554.83 L933.66 551.57 L935.27 548.31 L936.86 545.05 L938.45 541.79 L940.02 538.54 L941.58 535.28 L943.13 532.02 L944.67 528.76 L946.19 525.5 L947.7 522.25 L949.2 518.99 L950.68 515.73 L952.15 512.47 L953.6 509.21 L955.03 505.96 L956.45 502.7 L957.86 499.44 L959.24 496.18 L960.61 492.92 L961.96 489.67 L963.3 486.41 L964.61 483.15 L965.91 479.89 L967.18 476.63 L968.44 473.38 L969.67 470.12 L970.89 466.86 L972.08 463.6 L973.25 460.34 L974.4 457.09 L975.53 453.83 L976.64 450.57 L977.72 447.31 L978.78 444.05 L979.81 440.8 L980.83 437.54 L981.82 434.28 L982.78 431.02 L983.72 427.76 L984.64 424.51 L985.53 421.25 L986.39 417.99 L987.23 414.73 L988.04 411.47 L988.83 408.22 L989.59 404.96 L990.32 401.7 L991.03 398.44 L991.7 395.18 L992.36 391.93 L992.98 388.67 L993.58 385.41 L994.14 382.15 L994.69 378.89 L995.2 375.64 L995.68 372.38 L996.14 369.12 L996.56 365.86 L996.96 362.6 L997.33 359.35 L997.67 356.09 L997.98 352.83 L998.26 349.57 L998.51 346.31 L998.73 343.06 L998.93 339.8 L999.09 336.54 L999.22 333.28 L999.33 330.02 L999.4 326.77 L999.45 323.51 L999.46 320.25 L999.45 316.99 L999.4 313.73 L999.33 310.48 L999.22 307.22 L999.09 303.96 L998.93 300.7 L998.73 297.44 L998.51 294.19 L998.26 290.93 L997.98 287.67 L997.67 284.41 L997.33 281.15 L996.96 277.9 L996.56 274.64 L996.14 271.38 L995.68 268.12 L995.2 264.86 L994.69 261.61 L994.14 258.35 L993.58 255.09 L992.98 251.83 L992.36 248.57 L991.7 245.32 L991.03 242.06 L990.32 238.8 L989.59 235.54 L988.83 232.28 L988.04 229.03 L987.23 225.77 L986.39 222.51 L985.53 219.25 L984.64 215.99 L983.72 212.74 L982.78 209.48 L981.82 206.22 L980.83 202.96 L979.81 199.7 L978.78 196.45 L977.72 193.19 L976.64 189.93 L975.53 186.67 L974.4 183.41 L973.25 180.16 L972.08 176.9 L970.89 173.64 L969.67 170.38 L968.44 167.12 L967.18 163.87 L965.91 160.61 L964.61 157.35 L963.3 154.09 L961.96 150.83 L960.61 147.58 L959.24 144.32 L957.86 141.06 L956.45 137.8 L955.03 134.54 L953.6 131.29 L952.15 128.03 L950.68 124.77 L949.2 121.51 L947.7 118.25 L946.19 115 L944.67 111.74 L943.13 108.48 L941.58 105.22 L940.02 101.96 L938.45 98.71 L936.86 95.45 L935.27 92.19 L933.66 88.93 L932.05 85.67 L930.42 82.42 L928.79 79.16 L927.15 75.9 L925.5 72.64 L923.85 69.38 L922.18 66.13 L920.52 62.87 L918.84 59.61 L917.16 56.35 L915.48 53.09 L913.79 49.84 L912.1 46.58 L910.4 43.32 L908.71 40.06 L907.01 36.8 L905.3 33.55 L903.6 30.29 L901.9 27.03" stroke-dashoffset="1.3"/><path d="M901.9 613.47 L902.75 610.21 L903.6 606.95 L904.45 603.7 L905.3 600.44 L906.15 597.18 L907 593.92 L907.84 590.66 L908.69 587.41 L909.53 584.15 L910.37 580.89 L911.21 577.63 L912.04 574.37 L912.87 571.12 L913.7 567.86 L914.53 564.6 L915.35 561.34 L916.16 558.08 L916.97 554.83 L917.78 551.57 L918.58 548.31 L919.38 545.05 L920.17 541.79 L920.96 538.54 L921.74 535.28 L922.52 532.02 L923.28 528.76 L924.05 525.5 L924.8 522.25 L925.55 518.99 L926.29 515.73 L927.02 512.47 L927.75 509.21 L928.47 505.96 L929.18 502.7 L929.88 499.44 L930.57 496.18 L931.26 492.92 L931.93 489.67 L932.6 486.41 L933.26 483.15 L933.9 479.89 L934.54 476.63 L935.17 473.38 L935.79 470.12 L936.39 466.86 L936.99 463.6 L937.58 460.34 L938.15 457.09 L938.71 453.83 L939.27 450.57 L939.81 447.31 L940.34 444.05 L940.86 440.8 L941.36 437.54 L941.86 434.28 L942.34 431.02 L942.81 427.76 L943.27 424.51 L943.71 421.25 L944.14 417.99 L944.56 414.73 L944.97 411.47 L945.36 408.22 L945.74 404.96 L946.11 401.7 L946.46 398.44 L946.8 395.18 L947.13 391.93 L947.44 388.67 L947.74 385.41 L948.02 382.15 L948.29 378.89 L948.55 375.64 L948.79 372.38 L949.02 369.12 L949.23 365.86 L949.43 362.6 L949.61 359.35 L949.78 356.09 L949.94 352.83 L950.08 349.57 L950.21 346.31 L950.32 343.06 L950.41 339.8 L950.49 336.54 L950.56 333.28 L950.61 330.02 L950.65 326.77 L950.67 323.51 L950.68 320.25 L950.67 316.99 L950.65 313.73 L950.61 310.48 L950.56 307.22 L950.49 303.96 L950.41 300.7 L950.32 297.44 L950.21 294.19 L950.08 290.93 L949.94 287.67 L949.78 284.41 L949.61 281.15 L949.43 277.9 L949.23 274.64 L949.02 271.38 L948.79 268.12 L948.55 264.86 L948.29 261.61 L948.02 258.35 L947.74 255.09 L947.44 251.83 L947.13 248.57 L946.8 245.32 L946.46 242.06 L946.11 238.8 L945.74 235.54 L945.36 232.28 L944.97 229.03 L944.56 225.77 L944.14 222.51 L943.71 219.25 L943.27 215.99 L942.81 212.74 L942.34 209.48 L941.86 206.22 L941.36 202.96 L940.86 199.7 L940.34 196.45 L939.81 193.19 L939.27 189.93 L938.71 186.67 L938.15 183.41 L937.58 180.16 L936.99 176.9 L936.39 173.64 L935.79 170.38 L935.17 167.12 L934.54 163.87 L933.9 160.61 L933.26 157.35 L932.6 154.09 L931.93 150.83 L931.26 147.58 L930.57 144.32 L929.88 141.06 L929.18 137.8 L928.47 134.54 L927.75 131.29 L927.02 128.03 L926.29 124.77 L925.55 121.51 L924.8 118.25 L924.05 115 L923.28 111.74 L922.52 108.48 L921.74 105.22 L920.96 101.96 L920.17 98.71 L919.38 95.45 L918.58 92.19 L917.78 88.93 L916.97 85.67 L916.16 82.42 L915.35 79.16 L914.53 75.9 L913.7 72.64 L912.87 69.38 L912.04 66.13 L911.21 62.87 L910.37 59.61 L909.53 56.35 L908.69 53.09 L907.84 49.84 L907 46.58 L906.15 43.32 L905.3 40.06 L904.45 36.8 L903.6 33.55 L902.75 30.29 L901.9 27.03" stroke-dashoffset="1.3"/><path d="M901.9 613.47 L901.9 610.21 L901.9 606.95 L901.9 603.7 L901.9 600.44 L901.9 597.18 L901.9 593.92 L901.9 590.66 L901.9 587.41 L901.9 584.15 L901.9 580.89 L901.9 577.63 L901.9 574.37 L901.9 571.12 L901.9 567.86 L901.9 564.6 L901.9 561.34 L901.9 558.08 L901.9 554.83 L901.9 551.57 L901.9 548.31 L901.9 545.05 L901.9 541.79 L901.9 538.54 L901.9 535.28 L901.9 532.02 L901.9 528.76 L901.9 525.5 L901.9 522.25 L901.9 518.99 L901.9 515.73 L901.9 512.47 L901.9 509.21 L901.9 505.96 L901.9 502.7 L901.9 499.44 L901.9 496.18 L901.9 492.92 L901.9 489.67 L901.9 486.41 L901.9 483.15 L901.9 479.89 L901.9 476.63 L901.9 473.38 L901.9 470.12 L901.9 466.86 L901.9 463.6 L901.9 460.34 L901.9 457.09 L901.9 453.83 L901.9 450.57 L901.9 447.31 L901.9 444.05 L901.9 440.8 L901.9 437.54 L901.9 434.28 L901.9 431.02 L901.9 427.76 L901.9 424.51 L901.9 421.25 L901.9 417.99 L901.9 414.73 L901.9 411.47 L901.9 408.22 L901.9 404.96 L901.9 401.7 L901.9 398.44 L901.9 395.18 L901.9 391.93 L901.9 388.67 L901.9 385.41 L901.9 382.15 L901.9 378.89 L901.9 375.64 L901.9 372.38 L901.9 369.12 L901.9 365.86 L901.9 362.6 L901.9 359.35 L901.9 356.09 L901.9 352.83 L901.9 349.57 L901.9 346.31 L901.9 343.06 L901.9 339.8 L901.9 336.54 L901.9 333.28 L901.9 330.02 L901.9 326.77 L901.9 323.51 L901.9 320.25 L901.9 316.99 L901.9 313.73 L901.9 310.48 L901.9 307.22 L901.9 303.96 L901.9 300.7 L901.9 297.44 L901.9 294.19 L901.9 290.93 L901.9 287.67 L901.9 284.41 L901.9 281.15 L901.9 277.9 L901.9 274.64 L901.9 271.38 L901.9 268.12 L901.9 264.86 L901.9 261.61 L901.9 258.35 L901.9 255.09 L901.9 251.83 L901.9 248.57 L901.9 245.32 L901.9 242.06 L901.9 238.8 L901.9 235.54 L901.9 232.28 L901.9 229.03 L901.9 225.77 L901.9 222.51 L901.9 219.25 L901.9 215.99 L901.9 212.74 L901.9 209.48 L901.9 206.22 L901.9 202.96 L901.9 199.7 L901.9 196.45 L901.9 193.19 L901.9 189.93 L901.9 186.67 L901.9 183.41 L901.9 180.16 L901.9 176.9 L901.9 173.64 L901.9 170.38 L901.9 167.12 L901.9 163.87 L901.9 160.61 L901.9 157.35 L901.9 154.09 L901.9 150.83 L901.9 147.58 L901.9 144.32 L901.9 141.06 L901.9 137.8 L901.9 134.54 L901.9 131.29 L901.9 128.03 L901.9 124.77 L901.9 121.51 L901.9 118.25 L901.9 115 L901.9 111.74 L901.9 108.48 L901.9 105.22 L901.9 101.96 L901.9 98.71 L901.9 95.45 L901.9 92.19 L901.9 88.93 L901.9 85.67 L901.9 82.42 L901.9 79.16 L901.9 75.9 L901.9 72.64 L901.9 69.38 L901.9 66.13 L901.9 62.87 L901.9 59.61 L901.9 56.35 L901.9 53.09 L901.9 49.84 L901.9 46.58 L901.9 43.32 L901.9 40.06 L901.9 36.8 L901.9 33.55 L901.9 30.29 L901.9 27.03" stroke-dashoffset="1.3"/><path d="M901.9 613.47 L901.05 610.21 L900.2 606.95 L899.35 603.7 L898.5 600.44 L897.65 597.18 L896.8 593.92 L895.96 590.66 L895.11 587.41 L894.27 584.15 L893.43 580.89 L892.59 577.63 L891.76 574.37 L890.93 571.12 L890.1 567.86 L889.27 564.6 L888.45 561.34 L887.64 558.08 L886.83 554.83 L886.02 551.57 L885.22 548.31 L884.42 545.05 L883.63 541.79 L882.84 538.54 L882.06 535.28 L881.28 532.02 L880.52 528.76 L879.75 525.5 L879 522.25 L878.25 518.99 L877.51 515.73 L876.78 512.47 L876.05 509.21 L875.33 505.96 L874.62 502.7 L873.92 499.44 L873.23 496.18 L872.54 492.92 L871.87 489.67 L871.2 486.41 L870.54 483.15 L869.9 479.89 L869.26 476.63 L868.63 473.38 L868.01 470.12 L867.41 466.86 L866.81 463.6 L866.22 460.34 L865.65 457.09 L865.09 453.83 L864.53 450.57 L863.99 447.31 L863.46 444.05 L862.94 440.8 L862.44 437.54 L861.94 434.28 L861.46 431.02 L860.99 427.76 L860.53 424.51 L860.09 421.25 L859.66 417.99 L859.24 414.73 L858.83 411.47 L858.44 408.22 L858.06 404.96 L857.69 401.7 L857.34 398.44 L857 395.18 L856.67 391.93 L856.36 388.67 L856.06 385.41 L855.78 382.15 L855.51 378.89 L855.25 375.64 L855.01 372.38 L854.78 369.12 L854.57 365.86 L854.37 362.6 L854.19 359.35 L854.02 356.09 L853.86 352.83 L853.72 349.57 L853.59 346.31 L853.48 343.06 L853.39 339.8 L853.31 336.54 L853.24 333.28 L853.19 330.02 L853.15 326.77 L853.13 323.51 L853.12 320.25 L853.13 316.99 L853.15 313.73 L853.19 310.48 L853.24 307.22 L853.31 303.96 L853.39 300.7 L853.48 297.44 L853.59 294.19 L853.72 290.93 L853.86 287.67 L854.02 284.41 L854.19 281.15 L854.37 277.9 L854.57 274.64 L854.78 271.38 L855.01 268.12 L855.25 264.86 L855.51 261.61 L855.78 258.35 L856.06 255.09 L856.36 251.83 L856.67 248.57 L857 245.32 L857.34 242.06 L857.69 238.8 L858.06 235.54 L858.44 232.28 L858.83 229.03 L859.24 225.77 L859.66 222.51 L860.09 219.25 L860.53 215.99 L860.99 212.74 L861.46 209.48 L861.94 206.22 L862.44 202.96 L862.94 199.7 L863.46 196.45 L863.99 193.19 L864.53 189.93 L865.09 186.67 L865.65 183.41 L866.22 180.16 L866.81 176.9 L867.41 173.64 L868.01 170.38 L868.63 167.12 L869.26 163.87 L869.9 160.61 L870.54 157.35 L871.2 154.09 L871.87 150.83 L872.54 147.58 L873.23 144.32 L873.92 141.06 L874.62 137.8 L875.33 134.54 L876.05 131.29 L876.78 128.03 L877.51 124.77 L878.25 121.51 L879 118.25 L879.75 115 L880.52 111.74 L881.28 108.48 L882.06 105.22 L882.84 101.96 L883.63 98.71 L884.42 95.45 L885.22 92.19 L886.02 88.93 L886.83 85.67 L887.64 82.42 L888.45 79.16 L889.27 75.9 L890.1 72.64 L890.93 69.38 L891.76 66.13 L892.59 62.87 L893.43 59.61 L894.27 56.35 L895.11 53.09 L895.96 49.84 L896.8 46.58 L897.65 43.32 L898.5 40.06 L899.35 36.8 L900.2 33.55 L901.05 30.29 L901.9 27.03" stroke-dashoffset="1.3"/><path d="M901.9 613.47 L900.2 610.21 L898.5 606.95 L896.79 603.7 L895.09 600.44 L893.4 597.18 L891.7 593.92 L890.01 590.66 L888.32 587.41 L886.64 584.15 L884.96 580.89 L883.28 577.63 L881.62 574.37 L879.95 571.12 L878.3 567.86 L876.65 564.6 L875.01 561.34 L873.38 558.08 L871.75 554.83 L870.14 551.57 L868.53 548.31 L866.94 545.05 L865.35 541.79 L863.78 538.54 L862.22 535.28 L860.67 532.02 L859.13 528.76 L857.61 525.5 L856.1 522.25 L854.6 518.99 L853.12 515.73 L851.65 512.47 L850.2 509.21 L848.77 505.96 L847.35 502.7 L845.94 499.44 L844.56 496.18 L843.19 492.92 L841.84 489.67 L840.5 486.41 L839.19 483.15 L837.89 479.89 L836.62 476.63 L835.36 473.38 L834.13 470.12 L832.91 466.86 L831.72 463.6 L830.55 460.34 L829.4 457.09 L828.27 453.83 L827.16 450.57 L826.08 447.31 L825.02 444.05 L823.99 440.8 L822.97 437.54 L821.98 434.28 L821.02 431.02 L820.08 427.76 L819.16 424.51 L818.27 421.25 L817.41 417.99 L816.57 414.73 L815.76 411.47 L814.97 408.22 L814.21 404.96 L813.48 401.7 L812.77 398.44 L812.1 395.18 L811.44 391.93 L810.82 388.67 L810.22 385.41 L809.66 382.15 L809.11 378.89 L808.6 375.64 L808.12 372.38 L807.66 369.12 L807.24 365.86 L806.84 362.6 L806.47 359.35 L806.13 356.09 L805.82 352.83 L805.54 349.57 L805.29 346.31 L805.07 343.06 L804.87 339.8 L804.71 336.54 L804.58 333.28 L804.47 330.02 L804.4 326.77 L804.35 323.51 L804.34 320.25 L804.35 316.99 L804.4 313.73 L804.47 310.48 L804.58 307.22 L804.71 303.96 L804.87 300.7 L805.07 297.44 L805.29 294.19 L805.54 290.93 L805.82 287.67 L806.13 284.41 L806.47 281.15 L806.84 277.9 L807.24 274.64 L807.66 271.38 L808.12 268.12 L808.6 264.86 L809.11 261.61 L809.66 258.35 L810.22 255.09 L810.82 251.83 L811.44 248.57 L812.1 245.32 L812.77 242.06 L813.48 238.8 L814.21 235.54 L814.97 232.28 L815.76 229.03 L816.57 225.77 L817.41 222.51 L818.27 219.25 L819.16 215.99 L820.08 212.74 L821.02 209.48 L821.98 206.22 L822.97 202.96 L823.99 199.7 L825.02 196.45 L826.08 193.19 L827.16 189.93 L828.27 186.67 L829.4 183.41 L830.55 180.16 L831.72 176.9 L832.91 173.64 L834.13 170.38 L835.36 167.12 L836.62 163.87 L837.89 160.61 L839.19 157.35 L840.5 154.09 L841.84 150.83 L843.19 147.58 L844.56 144.32 L845.94 141.06 L847.35 137.8 L848.77 134.54 L850.2 131.29 L851.65 128.03 L853.12 124.77 L854.6 121.51 L856.1 118.25 L857.61 115 L859.13 111.74 L860.67 108.48 L862.22 105.22 L863.78 101.96 L865.35 98.71 L866.94 95.45 L868.53 92.19 L870.14 88.93 L871.75 85.67 L873.38 82.42 L875.01 79.16 L876.65 75.9 L878.3 72.64 L879.95 69.38 L881.62 66.13 L883.28 62.87 L884.96 59.61 L886.64 56.35 L888.32 53.09 L890.01 49.84 L891.7 46.58 L893.4 43.32 L895.09 40.06 L896.79 36.8 L898.5 33.55 L900.2 30.29 L901.9 27.03" stroke-dashoffset="1.3"/><path d="M901.9 613.47 L899.35 610.21 L896.79 606.95 L894.24 603.7 L891.69 600.44 L889.15 597.18 L886.6 593.92 L884.07 590.66 L881.53 587.41 L879.01 584.15 L876.49 580.89 L873.98 577.63 L871.47 574.37 L868.98 571.12 L866.5 567.86 L864.02 564.6 L861.56 561.34 L859.11 558.08 L856.68 554.83 L854.26 551.57 L851.85 548.31 L849.46 545.05 L847.08 541.79 L844.72 538.54 L842.38 535.28 L840.05 532.02 L837.75 528.76 L835.46 525.5 L833.2 522.25 L830.95 518.99 L828.73 515.73 L826.53 512.47 L824.35 509.21 L822.2 505.96 L820.07 502.7 L817.96 499.44 L815.88 496.18 L813.83 492.92 L811.8 489.67 L809.81 486.41 L807.83 483.15 L805.89 479.89 L803.98 476.63 L802.1 473.38 L800.24 470.12 L798.42 466.86 L796.63 463.6 L794.87 460.34 L793.15 457.09 L791.46 453.83 L789.8 450.57 L788.17 447.31 L786.58 444.05 L785.03 440.8 L783.51 437.54 L782.03 434.28 L780.58 431.02 L779.17 427.76 L777.8 424.51 L776.46 421.25 L775.17 417.99 L773.91 414.73 L772.69 411.47 L771.51 408.22 L770.37 404.96 L769.27 401.7 L768.21 398.44 L767.19 395.18 L766.22 391.93 L765.28 388.67 L764.39 385.41 L763.53 382.15 L762.72 378.89 L761.95 375.64 L761.23 372.38 L760.55 369.12 L759.91 365.86 L759.31 362.6 L758.76 359.35 L758.25 356.09 L757.78 352.83 L757.36 349.57 L756.98 346.31 L756.65 343.06 L756.36 339.8 L756.12 336.54 L755.92 333.28 L755.76 330.02 L755.65 326.77 L755.58 323.51 L755.56 320.25 L755.58 316.99 L755.65 313.73 L755.76 310.48 L755.92 307.22 L756.12 303.96 L756.36 300.7 L756.65 297.44 L756.98 294.19 L757.36 290.93 L757.78 287.67 L758.25 284.41 L758.76 281.15 L759.31 277.9 L759.91 274.64 L760.55 271.38 L761.23 268.12 L761.95 264.86 L762.72 261.61 L763.53 258.35 L764.39 255.09 L765.28 251.83 L766.22 248.57 L767.19 245.32 L768.21 242.06 L769.27 238.8 L770.37 235.54 L771.51 232.28 L772.69 229.03 L773.91 225.77 L775.17 222.51 L776.46 219.25 L777.8 215.99 L779.17 212.74 L780.58 209.48 L782.03 206.22 L783.51 202.96 L785.03 199.7 L786.58 196.45 L788.17 193.19 L789.8 189.93 L791.46 186.67 L793.15 183.41 L794.87 180.16 L796.63 176.9 L798.42 173.64 L800.24 170.38 L802.1 167.12 L803.98 163.87 L805.89 160.61 L807.83 157.35 L809.81 154.09 L811.8 150.83 L813.83 147.58 L815.88 144.32 L817.96 141.06 L820.07 137.8 L822.2 134.54 L824.35 131.29 L826.53 128.03 L828.73 124.77 L830.95 121.51 L833.2 118.25 L835.46 115 L837.75 111.74 L840.05 108.48 L842.38 105.22 L844.72 101.96 L847.08 98.71 L849.46 95.45 L851.85 92.19 L854.26 88.93 L856.68 85.67 L859.11 82.42 L861.56 79.16 L864.02 75.9 L866.5 72.64 L868.98 69.38 L871.47 66.13 L873.98 62.87 L876.49 59.61 L879.01 56.35 L881.53 53.09 L884.07 49.84 L886.6 46.58 L889.15 43.32 L891.69 40.06 L894.24 36.8 L896.79 33.55 L899.35 30.29 L901.9 27.03" stroke-dashoffset="1.3"/><path d="M901.9 613.47 L898.49 610.21 L895.09 606.95 L891.69 603.7 L888.29 600.44 L884.89 597.18 L881.5 593.92 L878.12 590.66 L874.74 587.41 L871.38 584.15 L868.02 580.89 L864.67 577.63 L861.33 574.37 L858.01 571.12 L854.7 567.86 L851.4 564.6 L848.12 561.34 L844.85 558.08 L841.6 554.83 L838.38 551.57 L835.17 548.31 L831.98 545.05 L828.81 541.79 L825.66 538.54 L822.54 535.28 L819.44 532.02 L816.37 528.76 L813.32 525.5 L810.3 522.25 L807.3 518.99 L804.34 515.73 L801.41 512.47 L798.5 509.21 L795.63 505.96 L792.79 502.7 L789.98 499.44 L787.21 496.18 L784.47 492.92 L781.77 489.67 L779.11 486.41 L776.48 483.15 L773.89 479.89 L771.34 476.63 L768.83 473.38 L766.36 470.12 L763.93 466.86 L761.54 463.6 L759.2 460.34 L756.9 457.09 L754.64 453.83 L752.43 450.57 L750.26 447.31 L748.14 444.05 L746.07 440.8 L744.04 437.54 L742.07 434.28 L740.14 431.02 L738.26 427.76 L736.43 424.51 L734.65 421.25 L732.92 417.99 L731.24 414.73 L729.62 411.47 L728.05 408.22 L726.53 404.96 L725.06 401.7 L723.65 398.44 L722.29 395.18 L720.99 391.93 L719.74 388.67 L718.55 385.41 L717.41 382.15 L716.33 378.89 L715.31 375.64 L714.34 372.38 L713.43 369.12 L712.58 365.86 L711.78 362.6 L711.04 359.35 L710.36 356.09 L709.74 352.83 L709.18 349.57 L708.68 346.31 L708.23 343.06 L707.85 339.8 L707.52 336.54 L707.26 333.28 L707.05 330.02 L706.9 326.77 L706.81 323.51 L706.78 320.25 L706.81 316.99 L706.9 313.73 L707.05 310.48 L707.26 307.22 L707.52 303.96 L707.85 300.7 L708.23 297.44 L708.68 294.19 L709.18 290.93 L709.74 287.67 L710.36 284.41 L711.04 281.15 L711.78 277.9 L712.58 274.64 L713.43 271.38 L714.34 268.12 L715.31 264.86 L716.33 261.61 L717.41 258.35 L718.55 255.09 L719.74 251.83 L720.99 248.57 L722.29 245.32 L723.65 242.06 L725.06 238.8 L726.53 235.54 L728.05 232.28 L729.62 229.03 L731.24 225.77 L732.92 222.51 L734.65 219.25 L736.43 215.99 L738.26 212.74 L740.14 209.48 L742.07 206.22 L744.04 202.96 L746.07 199.7 L748.14 196.45 L750.26 193.19 L752.43 189.93 L754.64 186.67 L756.9 183.41 L759.2 180.16 L761.54 176.9 L763.93 173.64 L766.36 170.38 L768.83 167.12 L771.34 163.87 L773.89 160.61 L776.48 157.35 L779.11 154.09 L781.77 150.83 L784.47 147.58 L787.21 144.32 L789.98 141.06 L792.79 137.8 L795.63 134.54 L798.5 131.29 L801.41 128.03 L804.34 124.77 L807.3 121.51 L810.3 118.25 L813.32 115 L816.37 111.74 L819.44 108.48 L822.54 105.22 L825.66 101.96 L828.81 98.71 L831.98 95.45 L835.17 92.19 L838.38 88.93 L841.6 85.67 L844.85 82.42 L848.12 79.16 L851.4 75.9 L854.7 72.64 L858.01 69.38 L861.33 66.13 L864.67 62.87 L868.02 59.61 L871.38 56.35 L874.74 53.09 L878.12 49.84 L881.5 46.58 L884.89 43.32 L888.29 40.06 L891.69 36.8 L895.09 33.55 L898.49 30.29 L901.9 27.03" stroke-dashoffset="1.3"/><path d="M901.9 613.47 L897.64 610.21 L893.39 606.95 L889.14 603.7 L884.89 600.44 L880.64 597.18 L876.41 593.92 L872.18 590.66 L867.96 587.41 L863.75 584.15 L859.55 580.89 L855.36 577.63 L851.19 574.37 L847.03 571.12 L842.9 567.86 L838.77 564.6 L834.67 561.34 L830.59 558.08 L826.53 554.83 L822.49 551.57 L818.48 548.31 L814.49 545.05 L810.53 541.79 L806.6 538.54 L802.7 535.28 L798.82 532.02 L794.98 528.76 L791.17 525.5 L787.4 522.25 L783.65 518.99 L779.95 515.73 L776.28 512.47 L772.65 509.21 L769.06 505.96 L765.51 502.7 L762 499.44 L758.54 496.18 L755.12 492.92 L751.74 489.67 L748.41 486.41 L745.12 483.15 L741.89 479.89 L738.7 476.63 L735.56 473.38 L732.47 470.12 L729.44 466.86 L726.45 463.6 L723.52 460.34 L720.65 457.09 L717.83 453.83 L715.06 450.57 L712.35 447.31 L709.7 444.05 L707.11 440.8 L704.58 437.54 L702.11 434.28 L699.7 431.02 L697.35 427.76 L695.06 424.51 L692.84 421.25 L690.68 417.99 L688.58 414.73 L686.55 411.47 L684.58 408.22 L682.68 404.96 L680.85 401.7 L679.09 398.44 L677.39 395.18 L675.76 391.93 L674.2 388.67 L672.71 385.41 L671.29 382.15 L669.94 378.89 L668.66 375.64 L667.45 372.38 L666.31 369.12 L665.24 365.86 L664.25 362.6 L663.33 359.35 L662.48 356.09 L661.71 352.83 L661 349.57 L660.37 346.31 L659.82 343.06 L659.34 339.8 L658.93 336.54 L658.59 333.28 L658.33 330.02 L658.15 326.77 L658.04 323.51 L658 320.25 L658.04 316.99 L658.15 313.73 L658.33 310.48 L658.59 307.22 L658.93 303.96 L659.34 300.7 L659.82 297.44 L660.37 294.19 L661 290.93 L661.71 287.67 L662.48 284.41 L663.33 281.15 L664.25 277.9 L665.24 274.64 L666.31 271.38 L667.45 268.12 L668.66 264.86 L669.94 261.61 L671.29 258.35 L672.71 255.09 L674.2 251.83 L675.76 248.57 L677.39 245.32 L679.09 242.06 L680.85 238.8 L682.68 235.54 L684.58 232.28 L686.55 229.03 L688.58 225.77 L690.68 222.51 L692.84 219.25 L695.06 215.99 L697.35 212.74 L699.7 209.48 L702.11 206.22 L704.58 202.96 L707.11 199.7 L709.7 196.45 L712.35 193.19 L715.06 189.93 L717.83 186.67 L720.65 183.41 L723.52 180.16 L726.45 176.9 L729.44 173.64 L732.47 170.38 L735.56 167.12 L738.7 163.87 L741.89 160.61 L745.12 157.35 L748.41 154.09 L751.74 150.83 L755.12 147.58 L758.54 144.32 L762 141.06 L765.51 137.8 L769.06 134.54 L772.65 131.29 L776.28 128.03 L779.95 124.77 L783.65 121.51 L787.4 118.25 L791.17 115 L794.98 111.74 L798.82 108.48 L802.7 105.22 L806.6 101.96 L810.53 98.71 L814.49 95.45 L818.48 92.19 L822.49 88.93 L826.53 85.67 L830.59 82.42 L834.67 79.16 L838.77 75.9 L842.9 72.64 L847.03 69.38 L851.19 66.13 L855.36 62.87 L859.55 59.61 L863.75 56.35 L867.96 53.09 L872.18 49.84 L876.41 46.58 L880.64 43.32 L884.89 40.06 L889.14 36.8 L893.39 33.55 L897.64 30.29 L901.9 27.03" stroke-dashoffset="1.3"/><path d="M901.9 613.47 L896.79 610.21 L891.69 606.95 L886.58 603.7 L881.48 600.44 L876.39 597.18 L871.31 593.92 L866.23 590.66 L861.17 587.41 L856.11 584.15 L851.08 580.89 L846.05 577.63 L841.05 574.37 L836.06 571.12 L831.09 567.86 L826.15 564.6 L821.23 561.34 L816.33 558.08 L811.46 554.83 L806.61 551.57 L801.8 548.31 L797.01 545.05 L792.26 541.79 L787.54 538.54 L782.86 535.28 L778.21 532.02 L773.6 528.76 L769.03 525.5 L764.5 522.25 L760.01 518.99 L755.56 515.73 L751.16 512.47 L746.8 509.21 L742.5 505.96 L738.24 502.7 L734.03 499.44 L729.87 496.18 L725.76 492.92 L721.71 489.67 L717.71 486.41 L713.77 483.15 L709.88 479.89 L706.06 476.63 L702.29 473.38 L698.59 470.12 L694.94 466.86 L691.36 463.6 L687.85 460.34 L684.4 457.09 L681.01 453.83 L677.69 450.57 L674.44 447.31 L671.27 444.05 L668.16 440.8 L665.12 437.54 L662.15 434.28 L659.26 431.02 L656.44 427.76 L653.69 424.51 L651.02 421.25 L648.43 417.99 L645.92 414.73 L643.48 411.47 L641.12 408.22 L638.84 404.96 L636.64 401.7 L634.52 398.44 L632.49 395.18 L630.53 391.93 L628.66 388.67 L626.87 385.41 L625.17 382.15 L623.54 378.89 L622.01 375.64 L620.56 372.38 L619.19 369.12 L617.91 365.86 L616.72 362.6 L615.62 359.35 L614.6 356.09 L613.67 352.83 L612.82 349.57 L612.07 346.31 L611.4 343.06 L610.82 339.8 L610.33 336.54 L609.93 333.28 L609.62 330.02 L609.4 326.77 L609.26 323.51 L609.22 320.25 L609.26 316.99 L609.4 313.73 L609.62 310.48 L609.93 307.22 L610.33 303.96 L610.82 300.7 L611.4 297.44 L612.07 294.19 L612.82 290.93 L613.67 287.67 L614.6 284.41 L615.62 281.15 L616.72 277.9 L617.91 274.64 L619.19 271.38 L620.56 268.12 L622.01 264.86 L623.54 261.61 L625.17 258.35 L626.87 255.09 L628.66 251.83 L630.53 248.57 L632.49 245.32 L634.52 242.06 L636.64 238.8 L638.84 235.54 L641.12 232.28 L643.48 229.03 L645.92 225.77 L648.43 222.51 L651.02 219.25 L653.69 215.99 L656.44 212.74 L659.26 209.48 L662.15 206.22 L665.12 202.96 L668.16 199.7 L671.27 196.45 L674.44 193.19 L677.69 189.93 L681.01 186.67 L684.4 183.41 L687.85 180.16 L691.36 176.9 L694.94 173.64 L698.59 170.38 L702.29 167.12 L706.06 163.87 L709.88 160.61 L713.77 157.35 L717.71 154.09 L721.71 150.83 L725.76 147.58 L729.87 144.32 L734.03 141.06 L738.24 137.8 L742.5 134.54 L746.8 131.29 L751.16 128.03 L755.56 124.77 L760.01 121.51 L764.5 118.25 L769.03 115 L773.6 111.74 L778.21 108.48 L782.86 105.22 L787.54 101.96 L792.26 98.71 L797.01 95.45 L801.8 92.19 L806.61 88.93 L811.46 85.67 L816.33 82.42 L821.23 79.16 L826.15 75.9 L831.09 72.64 L836.06 69.38 L841.05 66.13 L846.05 62.87 L851.08 59.61 L856.11 56.35 L861.17 53.09 L866.23 49.84 L871.31 46.58 L876.39 43.32 L881.48 40.06 L886.58 36.8 L891.69 33.55 L896.79 30.29 L901.9 27.03" stroke-dashoffset="1.3"/><path d="M901.9 613.47 L895.94 610.21 L889.98 606.95 L884.03 603.7 L878.08 600.44 L872.14 597.18 L866.21 593.92 L860.29 590.66 L854.38 587.41 L848.48 584.15 L842.61 580.89 L836.75 577.63 L830.91 574.37 L825.09 571.12 L819.29 567.86 L813.52 564.6 L807.78 561.34 L802.07 558.08 L796.38 554.83 L790.73 551.57 L785.11 548.31 L779.53 545.05 L773.99 541.79 L768.48 538.54 L763.02 535.28 L757.59 532.02 L752.21 528.76 L746.88 525.5 L741.59 522.25 L736.36 518.99 L731.17 515.73 L726.04 512.47 L720.95 509.21 L715.93 505.96 L710.96 502.7 L706.05 499.44 L701.19 496.18 L696.4 492.92 L691.68 489.67 L687.01 486.41 L682.41 483.15 L677.88 479.89 L673.42 476.63 L669.02 473.38 L664.7 470.12 L660.45 466.86 L656.27 463.6 L652.17 460.34 L648.15 457.09 L644.2 453.83 L640.33 450.57 L636.54 447.31 L632.83 444.05 L629.2 440.8 L625.65 437.54 L622.19 434.28 L618.82 431.02 L615.53 427.76 L612.33 424.51 L609.21 421.25 L606.19 417.99 L603.25 414.73 L600.41 411.47 L597.66 408.22 L595 404.96 L592.43 401.7 L589.96 398.44 L587.58 395.18 L585.3 391.93 L583.12 388.67 L581.03 385.41 L579.04 382.15 L577.15 378.89 L575.36 375.64 L573.67 372.38 L572.07 369.12 L570.58 365.86 L569.19 362.6 L567.9 359.35 L566.71 356.09 L565.63 352.83 L564.64 349.57 L563.76 346.31 L562.99 343.06 L562.31 339.8 L561.74 336.54 L561.27 333.28 L560.91 330.02 L560.65 326.77 L560.49 323.51 L560.44 320.25 L560.49 316.99 L560.65 313.73 L560.91 310.48 L561.27 307.22 L561.74 303.96 L562.31 300.7 L562.99 297.44 L563.76 294.19 L564.64 290.93 L565.63 287.67 L566.71 284.41 L567.9 281.15 L569.19 277.9 L570.58 274.64 L572.07 271.38 L573.67 268.12 L575.36 264.86 L577.15 261.61 L579.04 258.35 L581.03 255.09 L583.12 251.83 L585.3 248.57 L587.58 245.32 L589.96 242.06 L592.43 238.8 L595 235.54 L597.66 232.28 L600.41 229.03 L603.25 225.77 L606.19 222.51 L609.21 219.25 L612.33 215.99 L615.53 212.74 L618.82 209.48 L622.19 206.22 L625.65 202.96 L629.2 199.7 L632.83 196.45 L636.54 193.19 L640.33 189.93 L644.2 186.67 L648.15 183.41 L652.17 180.16 L656.27 176.9 L660.45 173.64 L664.7 170.38 L669.02 167.12 L673.42 163.87 L677.88 160.61 L682.41 157.35 L687.01 154.09 L691.68 150.83 L696.4 147.58 L701.19 144.32 L706.05 141.06 L710.96 137.8 L715.93 134.54 L720.95 131.29 L726.04 128.03 L731.17 124.77 L736.36 121.51 L741.59 118.25 L746.88 115 L752.21 111.74 L757.59 108.48 L763.02 105.22 L768.48 101.96 L773.99 98.71 L779.53 95.45 L785.11 92.19 L790.73 88.93 L796.38 85.67 L802.07 82.42 L807.78 79.16 L813.52 75.9 L819.29 72.64 L825.09 69.38 L830.91 66.13 L836.75 62.87 L842.61 59.61 L848.48 56.35 L854.38 53.09 L860.29 49.84 L866.21 46.58 L872.14 43.32 L878.08 40.06 L884.03 36.8 L889.98 33.55 L895.94 30.29 L901.9 27.03" stroke-dashoffset="1.3"/><path d="M901.9 613.47 L895.09 610.21 L888.28 606.95 L881.48 603.7 L874.68 600.44 L867.89 597.18 L861.11 593.92 L854.34 590.66 L847.59 587.41 L840.85 584.15 L834.14 580.89 L827.44 577.63 L820.76 574.37 L814.12 571.12 L807.49 567.86 L800.9 564.6 L794.34 561.34 L787.8 558.08 L781.31 554.83 L774.85 551.57 L768.43 548.31 L762.05 545.05 L755.71 541.79 L749.42 538.54 L743.18 535.28 L736.98 532.02 L730.83 528.76 L724.73 525.5 L718.69 522.25 L712.71 518.99 L706.78 515.73 L700.91 512.47 L695.1 509.21 L689.36 505.96 L683.68 502.7 L678.07 499.44 L672.52 496.18 L667.05 492.92 L661.64 489.67 L656.31 486.41 L651.06 483.15 L645.88 479.89 L640.78 476.63 L635.76 473.38 L630.82 470.12 L625.96 466.86 L621.18 463.6 L616.5 460.34 L611.9 457.09 L607.38 453.83 L602.96 450.57 L598.63 447.31 L594.39 444.05 L590.24 440.8 L586.19 437.54 L582.23 434.28 L578.38 431.02 L574.62 427.76 L570.96 424.51 L567.4 421.25 L563.94 417.99 L560.59 414.73 L557.34 411.47 L554.19 408.22 L551.15 404.96 L548.22 401.7 L545.4 398.44 L542.68 395.18 L540.08 391.93 L537.58 388.67 L535.19 385.41 L532.92 382.15 L530.76 378.89 L528.71 375.64 L526.78 372.38 L524.96 369.12 L523.25 365.86 L521.66 362.6 L520.19 359.35 L518.83 356.09 L517.59 352.83 L516.46 349.57 L515.46 346.31 L514.57 343.06 L513.8 339.8 L513.14 336.54 L512.61 333.28 L512.19 330.02 L511.9 326.77 L511.72 323.51 L511.66 320.25 L511.72 316.99 L511.9 313.73 L512.19 310.48 L512.61 307.22 L513.14 303.96 L513.8 300.7 L514.57 297.44 L515.46 294.19 L516.46 290.93 L517.59 287.67 L518.83 284.41 L520.19 281.15 L521.66 277.9 L523.25 274.64 L524.96 271.38 L526.78 268.12 L528.71 264.86 L530.76 261.61 L532.92 258.35 L535.19 255.09 L537.58 251.83 L540.08 248.57 L542.68 245.32 L545.4 242.06 L548.22 238.8 L551.15 235.54 L554.19 232.28 L557.34 229.03 L560.59 225.77 L563.94 222.51 L567.4 219.25 L570.96 215.99 L574.62 212.74 L578.38 209.48 L582.23 206.22 L586.19 202.96 L590.24 199.7 L594.39 196.45 L598.63 193.19 L602.96 189.93 L607.38 186.67 L611.9 183.41 L616.5 180.16 L621.18 176.9 L625.96 173.64 L630.82 170.38 L635.76 167.12 L640.78 163.87 L645.88 160.61 L651.06 157.35 L656.31 154.09 L661.64 150.83 L667.05 147.58 L672.52 144.32 L678.07 141.06 L683.68 137.8 L689.36 134.54 L695.1 131.29 L700.91 128.03 L706.78 124.77 L712.71 121.51 L718.69 118.25 L724.73 115 L730.83 111.74 L736.98 108.48 L743.18 105.22 L749.42 101.96 L755.71 98.71 L762.05 95.45 L768.43 92.19 L774.85 88.93 L781.31 85.67 L787.8 82.42 L794.34 79.16 L800.9 75.9 L807.49 72.64 L814.12 69.38 L820.76 66.13 L827.44 62.87 L834.14 59.61 L840.85 56.35 L847.59 53.09 L854.34 49.84 L861.11 46.58 L867.89 43.32 L874.68 40.06 L881.48 36.8 L888.28 33.55 L895.09 30.29 L901.9 27.03" stroke-dashoffset="1.3"/><path d="M901.9 613.47 L894.24 610.21 L886.58 606.95 L878.92 603.7 L871.28 600.44 L863.64 597.18 L856.01 593.92 L848.4 590.66 L840.8 587.41 L833.22 584.15 L825.66 580.89 L818.13 577.63 L810.62 574.37 L803.14 571.12 L795.69 567.86 L788.27 564.6 L780.89 561.34 L773.54 558.08 L766.24 554.83 L758.97 551.57 L751.75 548.31 L744.57 545.05 L737.44 541.79 L730.36 538.54 L723.33 535.28 L716.36 532.02 L709.45 528.76 L702.59 525.5 L695.79 522.25 L689.06 518.99 L682.39 515.73 L675.79 512.47 L669.25 509.21 L662.79 505.96 L656.4 502.7 L650.09 499.44 L643.85 496.18 L637.69 492.92 L631.61 489.67 L625.62 486.41 L619.7 483.15 L613.88 479.89 L608.14 476.63 L602.49 473.38 L596.93 470.12 L591.47 466.86 L586.1 463.6 L580.82 460.34 L575.64 457.09 L570.57 453.83 L565.59 450.57 L560.72 447.31 L555.95 444.05 L551.28 440.8 L546.73 437.54 L542.28 434.28 L537.94 431.02 L533.71 427.76 L529.59 424.51 L525.59 421.25 L521.7 417.99 L517.92 414.73 L514.27 411.47 L510.73 408.22 L507.31 404.96 L504.01 401.7 L500.84 398.44 L497.78 395.18 L494.85 391.93 L492.04 388.67 L489.36 385.41 L486.8 382.15 L484.37 378.89 L482.06 375.64 L479.89 372.38 L477.84 369.12 L475.92 365.86 L474.13 362.6 L472.47 359.35 L470.95 356.09 L469.55 352.83 L468.29 349.57 L467.15 346.31 L466.15 343.06 L465.28 339.8 L464.55 336.54 L463.95 333.28 L463.48 330.02 L463.15 326.77 L462.95 323.51 L462.88 320.25 L462.95 316.99 L463.15 313.73 L463.48 310.48 L463.95 307.22 L464.55 303.96 L465.28 300.7 L466.15 297.44 L467.15 294.19 L468.29 290.93 L469.55 287.67 L470.95 284.41 L472.47 281.15 L474.13 277.9 L475.92 274.64 L477.84 271.38 L479.89 268.12 L482.06 264.86 L484.37 261.61 L486.8 258.35 L489.36 255.09 L492.04 251.83 L494.85 248.57 L497.78 245.32 L500.84 242.06 L504.01 238.8 L507.31 235.54 L510.73 232.28 L514.27 229.03 L517.92 225.77 L521.7 222.51 L525.59 219.25 L529.59 215.99 L533.71 212.74 L537.94 209.48 L542.28 206.22 L546.73 202.96 L551.28 199.7 L555.95 196.45 L560.72 193.19 L565.59 189.93 L570.57 186.67 L575.64 183.41 L580.82 180.16 L586.1 176.9 L591.47 173.64 L596.93 170.38 L602.49 167.12 L608.14 163.87 L613.88 160.61 L619.7 157.35 L625.62 154.09 L631.61 150.83 L637.69 147.58 L643.85 144.32 L650.09 141.06 L656.4 137.8 L662.79 134.54 L669.25 131.29 L675.79 128.03 L682.39 124.77 L689.06 121.51 L695.79 118.25 L702.59 115 L709.45 111.74 L716.36 108.48 L723.33 105.22 L730.36 101.96 L737.44 98.71 L744.57 95.45 L751.75 92.19 L758.97 88.93 L766.24 85.67 L773.54 82.42 L780.89 79.16 L788.27 75.9 L795.69 72.64 L803.14 69.38 L810.62 66.13 L818.13 62.87 L825.66 59.61 L833.22 56.35 L840.8 53.09 L848.4 49.84 L856.01 46.58 L863.64 43.32 L871.28 40.06 L878.92 36.8 L886.58 33.55 L894.24 30.29 L901.9 27.03" stroke-dashoffset="1.3"/><path d="M901.9 613.47 L893.39 610.21 L884.88 606.95 L876.37 603.7 L867.87 600.44 L859.39 597.18 L850.91 593.92 L842.45 590.66 L834.01 587.41 L825.59 584.15 L817.19 580.89 L808.82 577.63 L800.48 574.37 L792.17 571.12 L783.89 567.86 L775.65 564.6 L767.44 561.34 L759.28 558.08 L751.16 554.83 L743.09 551.57 L735.06 548.31 L727.09 545.05 L719.17 541.79 L711.3 538.54 L703.49 535.28 L695.75 532.02 L688.06 528.76 L680.44 525.5 L672.89 522.25 L665.41 518.99 L658 515.73 L650.66 512.47 L643.41 509.21 L636.23 505.96 L629.13 502.7 L622.11 499.44 L615.18 496.18 L608.33 492.92 L601.58 489.67 L594.92 486.41 L588.35 483.15 L581.87 479.89 L575.5 476.63 L569.22 473.38 L563.05 470.12 L556.97 466.86 L551.01 463.6 L545.15 460.34 L539.39 457.09 L533.75 453.83 L528.22 450.57 L522.81 447.31 L517.51 444.05 L512.33 440.8 L507.26 437.54 L502.32 434.28 L497.5 431.02 L492.8 427.76 L488.22 424.51 L483.77 421.25 L479.45 417.99 L475.26 414.73 L471.2 411.47 L467.27 408.22 L463.47 404.96 L459.8 401.7 L456.27 398.44 L452.88 395.18 L449.62 391.93 L446.5 388.67 L443.52 385.41 L440.68 382.15 L437.97 378.89 L435.41 375.64 L433 372.38 L430.72 369.12 L428.59 365.86 L426.6 362.6 L424.76 359.35 L423.06 356.09 L421.51 352.83 L420.11 349.57 L418.85 346.31 L417.74 343.06 L416.77 339.8 L415.96 336.54 L415.29 333.28 L414.77 330.02 L414.4 326.77 L414.17 323.51 L414.1 320.25 L414.17 316.99 L414.4 313.73 L414.77 310.48 L415.29 307.22 L415.96 303.96 L416.77 300.7 L417.74 297.44 L418.85 294.19 L420.11 290.93 L421.51 287.67 L423.06 284.41 L424.76 281.15 L426.6 277.9 L428.59 274.64 L430.72 271.38 L433 268.12 L435.41 264.86 L437.97 261.61 L440.68 258.35 L443.52 255.09 L446.5 251.83 L449.62 248.57 L452.88 245.32 L456.27 242.06 L459.8 238.8 L463.47 235.54 L467.27 232.28 L471.2 229.03 L475.26 225.77 L479.45 222.51 L483.77 219.25 L488.22 215.99 L492.8 212.74 L497.5 209.48 L502.32 206.22 L507.26 202.96 L512.33 199.7 L517.51 196.45 L522.81 193.19 L528.22 189.93 L533.75 186.67 L539.39 183.41 L545.15 180.16 L551.01 176.9 L556.97 173.64 L563.05 170.38 L569.22 167.12 L575.5 163.87 L581.87 160.61 L588.35 157.35 L594.92 154.09 L601.58 150.83 L608.33 147.58 L615.18 144.32 L622.11 141.06 L629.13 137.8 L636.23 134.54 L643.41 131.29 L650.66 128.03 L658 124.77 L665.41 121.51 L672.89 118.25 L680.44 115 L688.06 111.74 L695.75 108.48 L703.49 105.22 L711.3 101.96 L719.17 98.71 L727.09 95.45 L735.06 92.19 L743.09 88.93 L751.16 85.67 L759.28 82.42 L767.44 79.16 L775.65 75.9 L783.89 72.64 L792.17 69.38 L800.48 66.13 L808.82 62.87 L817.19 59.61 L825.59 56.35 L834.01 53.09 L842.45 49.84 L850.91 46.58 L859.39 43.32 L867.87 40.06 L876.37 36.8 L884.88 33.55 L893.39 30.29 L901.9 27.03" stroke-dashoffset="1.3"/><path d="M901.9 613.47 L892.54 610.21 L883.17 606.95 L873.82 603.7 L864.47 600.44 L855.13 597.18 L845.81 593.92 L836.51 590.66 L827.22 587.41 L817.96 584.15 L808.72 580.89 L799.52 577.63 L790.34 574.37 L781.2 571.12 L772.09 567.86 L763.02 564.6 L754 561.34 L745.02 558.08 L736.09 554.83 L727.21 551.57 L718.38 548.31 L709.61 545.05 L700.89 541.79 L692.24 538.54 L683.65 535.28 L675.13 532.02 L666.68 528.76 L658.3 525.5 L649.99 522.25 L641.76 518.99 L633.61 515.73 L625.54 512.47 L617.56 509.21 L609.66 505.96 L601.85 502.7 L594.13 499.44 L586.51 496.18 L578.98 492.92 L571.55 489.67 L564.22 486.41 L556.99 483.15 L549.87 479.89 L542.86 476.63 L535.95 473.38 L529.16 470.12 L522.48 466.86 L515.92 463.6 L509.47 460.34 L503.14 457.09 L496.94 453.83 L490.86 450.57 L484.9 447.31 L479.07 444.05 L473.37 440.8 L467.8 437.54 L462.36 434.28 L457.06 431.02 L451.89 427.76 L446.85 424.51 L441.96 421.25 L437.21 417.99 L432.6 414.73 L428.13 411.47 L423.8 408.22 L419.63 404.96 L415.59 401.7 L411.71 398.44 L407.98 395.18 L404.39 391.93 L400.96 388.67 L397.68 385.41 L394.55 382.15 L391.58 378.89 L388.77 375.64 L386.11 372.38 L383.6 369.12 L381.26 365.86 L379.07 362.6 L377.05 359.35 L375.18 356.09 L373.47 352.83 L371.93 349.57 L370.54 346.31 L369.32 343.06 L368.26 339.8 L367.36 336.54 L366.63 333.28 L366.06 330.02 L365.65 326.77 L365.4 323.51 L365.32 320.25 L365.4 316.99 L365.65 313.73 L366.06 310.48 L366.63 307.22 L367.36 303.96 L368.26 300.7 L369.32 297.44 L370.54 294.19 L371.93 290.93 L373.47 287.67 L375.18 284.41 L377.05 281.15 L379.07 277.9 L381.26 274.64 L383.6 271.38 L386.11 268.12 L388.77 264.86 L391.58 261.61 L394.55 258.35 L397.68 255.09 L400.96 251.83 L404.39 248.57 L407.98 245.32 L411.71 242.06 L415.59 238.8 L419.63 235.54 L423.8 232.28 L428.13 229.03 L432.6 225.77 L437.21 222.51 L441.96 219.25 L446.85 215.99 L451.89 212.74 L457.06 209.48 L462.36 206.22 L467.8 202.96 L473.37 199.7 L479.07 196.45 L484.9 193.19 L490.86 189.93 L496.94 186.67 L503.14 183.41 L509.47 180.16 L515.92 176.9 L522.48 173.64 L529.16 170.38 L535.95 167.12 L542.86 163.87 L549.87 160.61 L556.99 157.35 L564.22 154.09 L571.55 150.83 L578.98 147.58 L586.51 144.32 L594.13 141.06 L601.85 137.8 L609.66 134.54 L617.56 131.29 L625.54 128.03 L633.61 124.77 L641.76 121.51 L649.99 118.25 L658.3 115 L666.68 111.74 L675.13 108.48 L683.65 105.22 L692.24 101.96 L700.89 98.71 L709.61 95.45 L718.38 92.19 L727.21 88.93 L736.09 85.67 L745.02 82.42 L754 79.16 L763.02 75.9 L772.09 72.64 L781.2 69.38 L790.34 66.13 L799.52 62.87 L808.72 59.61 L817.96 56.35 L827.22 53.09 L836.51 49.84 L845.81 46.58 L855.13 43.32 L864.47 40.06 L873.82 36.8 L883.17 33.55 L892.54 30.29 L901.9 27.03" stroke-dashoffset="1.3"/><path d="M901.9 613.47 L891.68 610.21 L881.47 606.95 L871.26 603.7 L861.07 600.44 L850.88 597.18 L840.71 593.92 L830.56 590.66 L820.43 587.41 L810.33 584.15 L800.25 580.89 L790.21 577.63 L780.2 574.37 L770.22 571.12 L760.29 567.86 L750.4 564.6 L740.55 561.34 L730.76 558.08 L721.01 554.83 L711.33 551.57 L701.7 548.31 L692.13 545.05 L682.62 541.79 L673.18 538.54 L663.81 535.28 L654.52 532.02 L645.3 528.76 L636.15 525.5 L627.09 522.25 L618.11 518.99 L609.22 515.73 L600.42 512.47 L591.71 509.21 L583.09 505.96 L574.57 502.7 L566.15 499.44 L557.83 496.18 L549.62 492.92 L541.52 489.67 L533.52 486.41 L525.64 483.15 L517.87 479.89 L510.22 476.63 L502.69 473.38 L495.27 470.12 L487.99 466.86 L480.83 463.6 L473.79 460.34 L466.89 457.09 L460.12 453.83 L453.49 450.57 L446.99 447.31 L440.63 444.05 L434.41 440.8 L428.33 437.54 L422.4 434.28 L416.61 431.02 L410.98 427.76 L405.49 424.51 L400.15 421.25 L394.96 417.99 L389.93 414.73 L385.06 411.47 L380.34 408.22 L375.78 404.96 L371.38 401.7 L367.15 398.44 L363.07 395.18 L359.16 391.93 L355.42 388.67 L351.84 385.41 L348.43 382.15 L345.19 378.89 L342.12 375.64 L339.22 372.38 L336.49 369.12 L333.93 365.86 L331.54 362.6 L329.33 359.35 L327.29 356.09 L325.43 352.83 L323.75 349.57 L322.24 346.31 L320.9 343.06 L319.75 339.8 L318.77 336.54 L317.97 333.28 L317.34 330.02 L316.9 326.77 L316.63 323.51 L316.54 320.25 L316.63 316.99 L316.9 313.73 L317.34 310.48 L317.97 307.22 L318.77 303.96 L319.75 300.7 L320.9 297.44 L322.24 294.19 L323.75 290.93 L325.43 287.67 L327.29 284.41 L329.33 281.15 L331.54 277.9 L333.93 274.64 L336.49 271.38 L339.22 268.12 L342.12 264.86 L345.19 261.61 L348.43 258.35 L351.84 255.09 L355.42 251.83 L359.16 248.57 L363.07 245.32 L367.15 242.06 L371.38 238.8 L375.78 235.54 L380.34 232.28 L385.06 229.03 L389.93 225.77 L394.96 222.51 L400.15 219.25 L405.49 215.99 L410.98 212.74 L416.61 209.48 L422.4 206.22 L428.33 202.96 L434.41 199.7 L440.63 196.45 L446.99 193.19 L453.49 189.93 L460.12 186.67 L466.89 183.41 L473.79 180.16 L480.83 176.9 L487.99 173.64 L495.27 170.38 L502.69 167.12 L510.22 163.87 L517.87 160.61 L525.64 157.35 L533.52 154.09 L541.52 150.83 L549.62 147.58 L557.83 144.32 L566.15 141.06 L574.57 137.8 L583.09 134.54 L591.71 131.29 L600.42 128.03 L609.22 124.77 L618.11 121.51 L627.09 118.25 L636.15 115 L645.3 111.74 L654.52 108.48 L663.81 105.22 L673.18 101.96 L682.62 98.71 L692.13 95.45 L701.7 92.19 L711.33 88.93 L721.01 85.67 L730.76 82.42 L740.55 79.16 L750.4 75.9 L760.29 72.64 L770.22 69.38 L780.2 66.13 L790.21 62.87 L800.25 59.61 L810.33 56.35 L820.43 53.09 L830.56 49.84 L840.71 46.58 L850.88 43.32 L861.07 40.06 L871.26 36.8 L881.47 33.55 L891.68 30.29 L901.9 27.03" stroke-dashoffset="1.3"/></g>
<g fill="none" stroke="#5c5c5c" stroke-width="1.1" stroke-dasharray="1.2 2.5"><path d="M969.1 98.9 L967.96 97.7 L966.81 96.49 L965.66 95.29 L964.51 94.09 L963.35 92.89 L962.19 91.68 L961.03 90.48 L959.87 89.28 L958.71 88.08 L957.54 86.87 L956.37 85.67 L955.2 84.47 L954.03 83.27 L952.85 82.07 L951.67 80.86 L950.49 79.66 L949.31 78.46 L948.13 77.26 L946.95 76.06 L945.76 74.86 L944.57 73.66 L943.38 72.46 L942.19 71.26 L941 70.06 L939.81 68.86 L938.61 67.66 L937.42 66.46 L936.22 65.27 L935.02 64.07 L933.82 62.87 L932.62 61.68 L931.42 60.48 L930.22 59.29 L929.02 58.09 L927.82 56.9 L926.62 55.71 L925.42 54.52 L924.22 53.33 L923.01 52.14 L921.81 50.95 L920.61 49.77 L919.42 48.59 L918.22 47.41 L917.02 46.23 L915.83 45.06 L914.64 43.89 L913.45 42.73 L912.27 41.57 L911.1 40.43 L909.93 39.29 L908.77 38.18 L907.63 37.08 L906.5 36 L905.38 34.97 L904.3 33.99 L903.24 33.1 L902.2 32.33 L901.17 31.74 L900.1 31.41 L898.9 31.41 L897.48 31.72 L895.81 32.3 L893.93 33.07 L891.89 33.96 L889.73 34.94 L887.48 35.97 L885.17 37.04 L882.81 38.14 L880.42 39.26 L878 40.39 L875.57 41.54 L873.12 42.69 L870.65 43.85 L868.18 45.02 L865.7 46.19 L863.21 47.37 L860.72 48.55 L858.23 49.73 L855.73 50.91 L853.23 52.1 L850.73 53.29 L848.23 54.48 L845.73 55.67 L843.23 56.86 L840.73 58.05 L838.22 59.24 L835.73 60.44 L833.23 61.64 L830.73 62.83 L828.24 64.03 L825.74 65.23 L823.25 66.42 L820.76 67.62 L818.28 68.82 L815.79 70.02 L813.31 71.22 L810.84 72.42 L808.36 73.62 L805.89 74.82 L803.42 76.02 L800.96 77.22 L798.5 78.42 L796.04 79.62 L793.59 80.82 L791.14 82.02 L788.7 83.23 L786.26 84.43 L783.82 85.63 L781.39 86.83 L778.97 88.03 L776.55 89.24 L774.13 90.44 L771.72 91.64 L769.32 92.84 L766.92 94.05 L764.52 95.25 L762.13 96.45 L759.75 97.66 L757.37 98.86 L755 100.06 L752.64 101.27 L750.28 102.47 L747.92 103.67 L745.57 104.88 L743.23 106.08 L740.9 107.28 L738.57 108.49 L736.25 109.69 L733.94 110.89 L731.63 112.1 L729.33 113.3 L727.04 114.51 L724.75 115.71 L722.47 116.91 L720.2 118.12 L717.94 119.32 L715.68 120.52 L713.43 121.73 L711.19 122.93 L708.96 124.14 L706.73 125.34 L704.51 126.55 L702.31 127.75 L700.11 128.95 L697.91 130.16 L695.73 131.36 L693.55 132.57 L691.39 133.77 L689.23 134.98 L687.08 136.18 L684.94 137.38 L682.81 138.59 L680.69 139.79 L678.58 141 L676.47 142.2 L674.38 143.41 L672.29 144.61 L670.22 145.82 L668.15 147.02 L666.1 148.22 L664.05 149.43 L662.01 150.63 L659.99 151.84 L657.97 153.04 L655.97 154.25 L653.97 155.45 L651.98 156.66 L650.01 157.86 L648.04 159.07 L646.09 160.27 L644.15 161.48 L642.21 162.68 L640.29 163.89 L638.38 165.09 L636.48 166.29 L634.59 167.5 L632.71 168.7 L630.85 169.91 L628.99 171.11 L627.15 172.32 L625.31 173.52 L623.49 174.73 L621.68 175.93 L619.89 177.14 L618.1 178.34 L616.32 179.55 L614.56 180.75 L612.81 181.96 L611.07 183.16 L609.35 184.37 L607.63 185.57 L605.93 186.78 L604.24 187.98 L602.56 189.19 L600.9 190.39 L599.25 191.6 L597.61 192.8 L595.98 194.01 L594.37 195.21 L592.76 196.42 L591.18 197.62 L589.6 198.83 L588.04 200.03 L586.49 201.24 L584.95 202.44 L583.43 203.65 L581.92 204.85 L580.42 206.06 L578.94 207.26 L577.47 208.47 L576.01 209.67 L574.57 210.88 L573.14 212.08 L571.73 213.29 L570.32 214.49 L568.94 215.7 L567.56 216.9 L566.2 218.11 L564.86 219.31 L563.52 220.52 L562.21 221.72 L560.9 222.93 L559.61 224.13 L558.34 225.34 L557.08 226.54 L555.83 227.75 L554.6 228.95 L553.38 230.16 L552.18 231.36 L550.99 232.57 L549.81 233.77 L548.66 234.98 L547.51 236.18 L546.38 237.39 L545.27 238.59 L544.17 239.8 L543.08 241 L542.01 242.21 L540.95 243.41 L539.91 244.62 L538.89 245.82 L537.88 247.03 L536.88 248.23 L535.9 249.44 L534.94 250.64 L533.99 251.85 L533.06 253.05 L532.14 254.26 L531.24 255.46 L530.35 256.67 L529.48 257.87 L528.62 259.08 L527.78 260.28 L526.95 261.49 L526.14 262.69 L525.35 263.9 L524.57 265.1 L523.81 266.31 L523.06 267.51 L522.33 268.72 L521.61 269.92 L520.92 271.13 L520.23 272.33 L519.56 273.54 L518.91 274.74 L518.28 275.95 L517.66 277.15 L517.05 278.36 L516.47 279.56 L515.89 280.77 L515.34 281.97 L514.8 283.18 L514.27 284.39 L513.77 285.59 L513.28 286.8 L512.8 288 L512.34 289.21 L511.9 290.41 L511.47 291.62 L511.06 292.82 L510.67 294.03 L510.29 295.23 L509.93 296.44 L509.59 297.64 L509.26 298.85 L508.95 300.05 L508.65 301.26 L508.37 302.46 L508.11 303.67 L507.86 304.87 L507.63 306.08 L507.42 307.28 L507.22 308.49 L507.04 309.69 L506.88 310.9 L506.73 312.1 L506.6 313.31 L506.49 314.51 L506.39 315.72 L506.31 316.92"/><path d="M562.33 369.95 L561.96 368.6 L561.61 367.26 L561.27 365.91 L560.96 364.56 L560.66 363.21 L560.37 361.86 L560.11 360.51 L559.86 359.16 L559.64 357.81 L559.42 356.46 L559.23 355.11 L559.06 353.76 L558.9 352.41 L558.76 351.06 L558.64 349.72 L558.54 348.37 L558.45 347.02 L558.38 345.67 L558.33 344.32 L558.3 342.97 L558.29 341.62 L558.29 340.26 L558.32 338.91 L558.36 337.56 L558.41 336.21 L558.49 334.86 L558.58 333.51 L558.7 332.16 L558.83 330.81 L558.97 329.46 L559.14 328.11 L559.32 326.76 L559.53 325.41 L559.75 324.06 L559.98 322.71 L560.24 321.36 L560.51 320.01 L560.8 318.66 L561.11 317.31 L561.44 315.96 L561.79 314.61 L562.15 313.26 L562.53 311.91 L562.93 310.55 L563.34 309.2 L563.78 307.85 L564.23 306.5 L564.7 305.15 L565.18 303.8 L565.69 302.45 L566.21 301.1 L566.75 299.75 L567.31 298.4 L567.88 297.05 L568.47 295.7 L569.08 294.35 L569.71 293 L570.35 291.65 L571.01 290.3 L571.69 288.95 L572.39 287.6 L573.1 286.25 L573.83 284.9 L574.58 283.55 L575.34 282.2 L576.13 280.86 L576.92 279.51 L577.74 278.16 L578.57 276.81 L579.42 275.46 L580.29 274.11 L581.17 272.76 L582.07 271.41 L582.99 270.06 L583.92 268.72 L584.87 267.37 L585.83 266.02 L586.82 264.67 L587.81 263.32 L588.83 261.98 L589.86 260.63 L590.91 259.28 L591.97 257.94 L593.05 256.59 L594.14 255.24 L595.25 253.89 L596.38 252.55 L597.52 251.2 L598.68 249.86 L599.86 248.51 L601.05 247.16 L602.25 245.82 L603.47 244.47 L604.71 243.13 L605.96 241.78 L607.23 240.44 L608.51 239.09 L609.8 237.75 L611.12 236.41 L612.44 235.06 L613.78 233.72 L615.14 232.38 L616.51 231.03 L617.9 229.69 L619.29 228.35 L620.71 227.01 L622.14 225.66 L623.58 224.32 L625.04 222.98 L626.51 221.64 L627.99 220.3 L629.49 218.96 L631 217.62 L632.53 216.28 L634.07 214.94 L635.62 213.6 L637.18 212.27 L638.76 210.93 L640.36 209.59 L641.96 208.25 L643.58 206.92 L645.21 205.58 L646.86 204.24 L648.51 202.91 L650.18 201.57 L651.86 200.24 L653.56 198.91 L655.26 197.57 L656.98 196.24 L658.71 194.91 L660.45 193.57 L662.2 192.24 L663.97 190.91 L665.75 189.58 L667.53 188.25 L669.33 186.92 L671.14 185.6 L672.96 184.27 L674.8 182.94 L676.64 181.62 L678.49 180.29 L680.36 178.96 L682.23 177.64 L684.11 176.32 L686.01 174.99 L687.91 173.67 L689.83 172.35 L691.75 171.03 L693.68 169.71 L695.62 168.4 L697.58 167.08 L699.54 165.76 L701.51 164.45 L703.48 163.13 L705.47 161.82 L707.46 160.51 L709.47 159.2 L711.48 157.89 L713.5 156.58 L715.53 155.27 L717.56 153.96 L719.6 152.66 L721.65 151.36 L723.71 150.05 L725.77 148.75 L727.84 147.45 L729.92 146.16 L732 144.86 L734.09 143.57 L736.18 142.27 L738.28 140.98 L740.39 139.69 L742.5 138.41 L744.62 137.12 L746.74 135.84 L748.87 134.56 L751 133.28 L753.13 132 L755.27 130.73 L757.41 129.45 L759.56 128.19 L761.71 126.92 L763.86 125.65 L766.01 124.39 L768.17 123.14 L770.33 121.88 L772.49 120.63 L774.66 119.38 L776.82 118.13 L778.99 116.89 L781.15 115.65 L783.32 114.42 L785.49 113.19 L787.65 111.96 L789.82 110.74 L791.98 109.53 L794.15 108.31 L796.31 107.11 L798.47 105.91 L800.62 104.71 L802.78 103.52 L804.93 102.34 L807.07 101.16 L809.22 99.99 L811.35 98.82 L813.49 97.67 L815.61 96.52 L817.73 95.38 L819.84 94.25 L821.95 93.12 L824.05 92.01 L826.14 90.91 L828.22 89.81 L830.28 88.73 L832.34 87.66 L834.39 86.6 L836.43 85.56 L838.45 84.52 L840.46 83.51 L842.45 82.5 L844.43 81.52 L846.4 80.55 L848.35 79.59 L850.28 78.66 L852.19 77.75 L854.09 76.86 L855.96 75.99 L857.82 75.14 L859.65 74.32 L861.46 73.52 L863.25 72.75 L865.01 72.01 L866.76 71.3 L868.48 70.62 L870.17 69.97 L871.84 69.36 L873.48 68.78 L875.1 68.24 L876.7 67.74 L878.27 67.28 L879.82 66.87 L881.34 66.49 L882.84 66.16 L884.32 65.88 L885.78 65.64 L887.22 65.45 L888.64 65.3 L890.04 65.21 L891.43 65.16 L892.81 65.17 L894.17 65.22 L895.53 65.32 L896.87 65.47 L898.21 65.67 L899.55 65.92 L900.88 66.21 L902.21 66.55 L903.55 66.93 L904.88 67.35 L906.22 67.82 L907.56 68.33 L908.9 68.87 L910.26 69.45 L911.62 70.07 L912.98 70.72 L914.36 71.41 L915.74 72.13 L917.13 72.87 L918.53 73.65 L919.94 74.45 L921.36 75.27 L922.79 76.12 L924.23 77 L925.67 77.89 L927.13 78.81 L928.59 79.75 L930.06 80.7 L931.54 81.67 L933.03 82.66 L934.53 83.67 L936.03 84.69 L937.54 85.72 L939.06 86.77 L940.58 87.83 L942.11 88.9 L943.65 89.99 L945.19 91.08 L946.74 92.19 L948.29 93.3 L949.85 94.43 L951.41 95.56 L952.97 96.7 L954.54 97.85 L956.11 99.01 L957.69 100.18 L959.27 101.35 L960.85 102.53 L962.43 103.71 L964.01 104.9 L965.6 106.1"/><path d="M463.78 220.66 L464.74 219.82 L465.71 218.98 L466.68 218.14 L467.67 217.29 L468.66 216.45 L469.66 215.61 L470.67 214.77 L471.69 213.93 L472.72 213.09 L473.76 212.25 L474.8 211.41 L475.85 210.57 L476.91 209.73 L477.98 208.89 L479.06 208.05 L480.15 207.21 L481.24 206.37 L482.34 205.53 L483.46 204.69 L484.57 203.85 L485.7 203.01 L486.84 202.17 L487.98 201.33 L489.13 200.5 L490.29 199.66 L491.46 198.82 L492.63 197.98 L493.82 197.15 L495.01 196.31 L496.2 195.47 L497.41 194.64 L498.62 193.8 L499.85 192.96 L501.08 192.13 L502.31 191.29 L503.56 190.46 L504.81 189.62 L506.07 188.79 L507.34 187.95 L508.61 187.12 L509.89 186.28 L511.18 185.45 L512.48 184.62 L513.78 183.78 L515.09 182.95 L516.41 182.12 L517.73 181.29 L519.06 180.45 L520.4 179.62 L521.75 178.79 L523.1 177.96 L524.46 177.13 L525.83 176.3 L527.2 175.47 L528.58 174.64 L529.97 173.81 L531.36 172.98 L532.76 172.15 L534.17 171.32 L535.58 170.5 L537 169.67 L538.42 168.84 L539.86 168.01 L541.29 167.19 L542.74 166.36 L544.19 165.54 L545.65 164.71 L547.11 163.89 L548.58 163.06 L550.05 162.24 L551.53 161.42 L553.02 160.59 L554.51 159.77 L556.01 158.95 L557.51 158.13 L559.02 157.31 L560.53 156.49 L562.05 155.67 L563.58 154.85 L565.11 154.03 L566.64 153.21 L568.18 152.4 L569.73 151.58 L571.28 150.76 L572.84 149.95 L574.4 149.13 L575.96 148.32 L577.53 147.5 L579.11 146.69 L580.69 145.88 L582.27 145.07 L583.86 144.26 L585.45 143.45 L587.05 142.64 L588.65 141.83 L590.25 141.02 L591.86 140.21 L593.47 139.41 L595.09 138.6 L596.71 137.8 L598.33 136.99 L599.96 136.19 L601.59 135.39 L603.22 134.59 L604.86 133.79 L606.5 132.99 L608.14 132.19 L609.79 131.39 L611.44 130.59 L613.09 129.8 L614.74 129.01 L616.4 128.21 L618.06 127.42 L619.72 126.63 L621.38 125.84 L623.04 125.05 L624.71 124.26 L626.38 123.48 L628.05 122.69 L629.72 121.91 L631.39 121.13 L633.06 120.35 L634.74 119.57 L636.41 118.79 L638.09 118.02 L639.76 117.24 L641.44 116.47 L643.11 115.7 L644.79 114.93 L646.46 114.16 L648.14 113.39 L649.81 112.63 L651.49 111.87 L653.16 111.11 L654.83 110.35 L656.5 109.59 L658.17 108.84 L659.83 108.09 L661.5 107.34 L663.16 106.59 L664.82 105.84 L666.47 105.1 L668.12 104.36 L669.77 103.62 L671.41 102.89 L673.05 102.15"/><path d="M1129 101.42 L1126.43 100.7 L1123.86 99.97 L1121.29 99.25 L1118.73 98.53 L1116.18 97.82 L1113.64 97.11 L1111.1 96.4 L1108.56 95.69 L1106.04 94.99 L1103.52 94.3 L1101.01 93.6 L1098.51 92.91 L1096.02 92.23 L1093.54 91.55 L1091.07 90.87 L1088.61 90.2 L1086.16 89.53 L1083.72 88.87 L1081.29 88.21 L1078.88 87.56 L1076.47 86.91 L1074.08 86.27 L1071.71 85.63 L1069.35 85 L1067 84.38 L1064.67 83.76 L1062.36 83.15 L1060.06 82.54 L1057.78 81.95 L1055.52 81.35 L1053.28 80.77 L1051.05 80.2 L1048.85 79.63 L1046.67 79.07 L1044.5 78.52 L1042.36 77.97 L1040.25 77.44 L1038.15 76.91 L1036.08 76.4 L1034.04 75.89 L1032.02 75.4 L1030.03 74.91 L1028.06 74.44 L1026.12 73.97 L1024.21 73.52 L1022.33 73.08 L1020.48 72.65 L1018.67 72.23 L1016.88 71.83 L1015.13 71.44 L1013.4 71.06 L1011.72 70.7 L1010.06 70.35 L1008.45 70.02 L1006.86 69.7 L1005.32 69.39 L1003.81 69.1 L1002.34 68.83 L1000.9 68.57 L999.51 68.33 L998.15 68.11 L996.83 67.9 L995.55 67.71 L994.32 67.54 L993.12 67.38 L991.96 67.24 L990.84 67.13 L989.76 67.03 L988.72 66.94 L987.71 66.88 L986.75 66.83 L985.83 66.81 L984.95 66.8 L984.1 66.81 L983.29 66.84 L982.52 66.89 L981.79 66.95 L981.1 67.04 L980.44 67.14 L979.81 67.26 L979.22 67.4 L978.66 67.56 L978.14 67.74 L977.64 67.93 L977.18 68.14 L976.75 68.37 L976.35 68.61 L975.98 68.87 L975.63 69.14 L975.31 69.44 L975.02 69.74 L974.76 70.07 L974.51 70.4 L974.29 70.75 L974.1 71.12 L973.92 71.5 L973.77 71.89 L973.64 72.3 L973.52 72.71 L973.43 73.14 L973.35 73.59 L973.29 74.04 L973.24 74.51 L973.21 74.98 L973.2 75.47 L973.2 75.97 L973.21 76.47 L973.24 76.99 L973.28 77.52 L973.33 78.05 L973.4 78.6 L973.47 79.15 L973.56 79.71 L973.65 80.28 L973.76 80.86 L973.87 81.44 L973.99 82.04 L974.12 82.63 L974.26 83.24 L974.41 83.85 L974.56 84.47 L974.72 85.1 L974.89 85.73 L975.06 86.36 L975.24 87.01 L975.42 87.66 L975.61 88.31 L975.81 88.97 L976 89.63 L976.21 90.3 L976.42 90.97 L976.63 91.65 L976.84 92.33 L977.06 93.02 L977.29 93.71 L977.51 94.4 L977.74 95.1 L977.97 95.8 L978.21 96.5 L978.44 97.21 L978.68 97.92 L978.93 98.64 L979.17 99.36 L979.42 100.08 L979.66 100.8 L979.91 101.53 L980.16 102.26 L980.42 103 L980.67 103.73 L980.93 104.47 L981.18 105.21 L981.44 105.95 L981.7 106.7"/><path d="M1038.3 155.8 L1036.97 155.89 L1035.65 156 L1034.34 156.12 L1033.05 156.25 L1031.76 156.4 L1030.49 156.56 L1029.22 156.73 L1027.97 156.91 L1026.72 157.11 L1025.49 157.31 L1024.27 157.54 L1023.05 157.77 L1021.84 158.02 L1020.65 158.27 L1019.46 158.55 L1018.28 158.83 L1017.11 159.12 L1015.95 159.43 L1014.8 159.75 L1013.65 160.08 L1012.51 160.42 L1011.38 160.78 L1010.26 161.14 L1009.15 161.52 L1008.04 161.91 L1006.93 162.31 L1005.84 162.72 L1004.75 163.14 L1003.67 163.58 L1002.59 164.02 L1001.52 164.48 L1000.46 164.94 L999.4 165.42 L998.34 165.9 L997.29 166.4 L996.25 166.91 L995.21 167.42 L994.17 167.95 L993.14 168.49 L992.12 169.04 L991.1 169.59 L990.08 170.16 L989.06 170.73 L988.05 171.32 L987.04 171.91 L986.04 172.51 L985.04 173.12 L984.04 173.74 L983.05 174.37 L982.06 175.01 L981.07 175.66 L980.08 176.31 L979.09 176.97 L978.11 177.64 L977.13 178.32 L976.15 179.01 L975.18 179.7 L974.2 180.4 L973.23 181.11 L972.26 181.83 L971.29 182.55 L970.32 183.28 L969.35 184.02 L968.39 184.77 L967.42 185.52 L966.46 186.28 L965.49 187.04 L964.53 187.82 L963.57 188.6 L962.61 189.38 L961.65 190.17 L960.69 190.97 L959.73 191.77 L958.77 192.58 L957.82 193.4 L956.86 194.22 L955.9 195.05 L954.94 195.88 L953.99 196.72 L953.03 197.56 L952.07 198.41 L951.12 199.26 L950.16 200.12 L949.2 200.99 L948.25 201.86 L947.29 202.73 L946.33 203.61 L945.38 204.5 L944.42 205.38 L943.46 206.28 L942.5 207.18 L941.54 208.08 L940.59 208.99 L939.63 209.9 L938.67 210.81 L937.71 211.73 L936.75 212.65 L935.79 213.58 L934.83 214.51 L933.87 215.45 L932.91 216.39 L931.94 217.33 L930.98 218.28 L930.02 219.23 L929.06 220.18 L928.09 221.14 L927.13 222.1 L926.16 223.06 L925.2 224.03 L924.23 225 L923.27 225.98 L922.3 226.95 L921.34 227.93 L920.37 228.92 L919.4 229.9 L918.44 230.89 L917.47 231.88 L916.5 232.88 L915.53 233.88 L914.56 234.88 L913.6 235.88 L912.63 236.88 L911.66 237.89 L910.69 238.9 L909.72 239.92 L908.75 240.93 L907.78 241.95 L906.81 242.97 L905.84 243.99 L904.87 245.02 L903.9 246.04 L902.93 247.07 L901.96 248.1 L900.98 249.14 L900.01 250.17 L899.04 251.21 L898.07 252.25 L897.1 253.29 L896.13 254.33 L895.16 255.38 L894.19 256.42 L893.22 257.47 L892.25 258.52 L891.28 259.57 L890.32 260.62 L889.35 261.68 L888.38 262.74 L887.41 263.79 L886.44 264.85 L885.48 265.91 L884.51 266.98 L883.55 268.04 L882.58 269.1 L881.62 270.17 L880.65 271.24 L879.69 272.31 L878.73 273.38 L877.76 274.45 L876.8 275.52 L875.84 276.59 L874.88 277.67 L873.92 278.74 L872.97 279.82 L872.01 280.9 L871.05 281.98 L870.1 283.06 L869.14 284.14 L868.19 285.22 L867.24 286.3 L866.29 287.38 L865.34 288.47 L864.39 289.55 L863.45 290.64 L862.5 291.72 L861.56 292.81 L860.61 293.9 L859.67 294.98 L858.73 296.07 L857.79 297.16 L856.85 298.25 L855.92 299.34 L854.98 300.43 L854.05 301.52 L853.12 302.62 L852.19 303.71 L851.26 304.8 L850.34 305.89 L849.41 306.99 L848.49 308.08 L847.57 309.17 L846.65 310.27 L845.74 311.36 L844.82 312.46 L843.91 313.55 L843 314.65 L842.09 315.74 L841.18 316.84 L840.28 317.93 L839.37 319.03 L838.47 320.12 L837.57 321.22 L836.68 322.31 L835.79 323.41 L834.89 324.5 L834 325.6 L833.12 326.69 L832.23 327.79 L831.35 328.88 L830.47 329.98 L829.59 331.07 L828.72 332.16 L827.85 333.26 L826.98 334.35 L826.11 335.44 L825.25 336.54 L824.38 337.63 L823.52 338.72 L822.67 339.81 L821.81 340.9 L820.96 341.99 L820.11 343.08 L819.27 344.17 L818.42 345.26 L817.58 346.35 L816.75 347.44 L815.91 348.52 L815.08 349.61 L814.25 350.7 L813.43 351.78 L812.6 352.86 L811.78 353.95 L810.97 355.03 L810.15 356.11 L809.34 357.19 L808.53 358.27 L807.73 359.35 L806.93 360.43 L806.13 361.51 L805.33 362.58 L804.54 363.66 L803.75 364.73 L802.96 365.8 L802.18 366.87 L801.4 367.94 L800.62 369.01 L799.85 370.08 L799.08 371.15 L798.31 372.21 L797.54 373.28 L796.78 374.34 L796.02 375.4 L795.27 376.46 L794.52 377.52 L793.77 378.57 L793.02 379.63 L792.28 380.68 L791.54 381.73 L790.8 382.79 L790.07 383.83 L789.34 384.88 L788.61 385.93 L787.89 386.97 L787.17 388.01 L786.45 389.05 L785.74 390.09 L785.03 391.12 L784.32 392.16 L783.61 393.19 L782.91 394.22 L782.21 395.24 L781.52 396.27 L780.82 397.29 L780.13 398.31 L779.45 399.33 L778.76 400.35 L778.08 401.36 L777.4 402.37 L776.73 403.38 L776.06 404.39 L775.39 405.39 L774.72 406.39 L774.06 407.39 L773.39 408.38 L772.74 409.38 L772.08 410.37 L771.43 411.35 L770.77 412.34 L770.13 413.32 L769.48 414.3 L768.84 415.27 L768.2 416.24 L767.56 417.21 L766.92 418.17 L766.28 419.14 L765.65 420.09 L765.02 421.05 L764.39 422 L763.77 422.95 L763.14 423.89 L762.52 424.83"/><path d="M1059.4 150.2 L1057.57 148.69 L1055.74 147.18 L1053.89 145.67 L1052.03 144.16 L1050.17 142.65 L1048.29 141.15 L1046.41 139.64 L1044.52 138.13 L1042.62 136.62 L1040.7 135.12 L1038.78 133.61 L1036.86 132.1 L1034.92 130.6 L1032.98 129.09 L1031.02 127.59 L1029.06 126.08 L1027.09 124.58 L1025.12 123.07 L1023.13 121.57 L1021.14 120.07 L1019.15 118.56 L1017.14 117.06 L1015.13 115.56 L1013.11 114.06 L1011.09 112.56 L1009.06 111.06 L1007.02 109.56 L1004.98 108.06 L1002.93 106.57 L1000.87 105.07 L998.81 103.57 L996.75 102.08 L994.68 100.59 L992.61 99.09 L990.53 97.6 L988.45 96.11 L986.36 94.62 L984.27 93.14 L982.18 91.65 L980.08 90.16 L977.98 88.68 L975.88 87.2 L973.77 85.72 L971.66 84.25 L969.56 82.77 L967.45 81.3 L965.34 79.83 L963.22 78.36 L961.11 76.9 L959 75.44 L956.89 73.98 L954.78 72.53 L952.68 71.08 L950.57 69.64 L948.47 68.2 L946.37 66.77 L944.28 65.35 L942.19 63.93 L940.11 62.52 L938.04 61.12 L935.98 59.73 L933.93 58.36 L931.89 57 L929.86 55.65 L927.85 54.32 L925.86 53.01 L923.89 51.73 L921.95 50.48 L920.03 49.25 L918.14 48.07 L916.28 46.93 L914.47 45.85 L912.69 44.83 L910.97 43.89 L909.28 43.03 L907.65 42.28 L906.06 41.65 L904.51 41.15 L902.98 40.8 L901.47 40.62 L899.96 40.6 L898.42 40.76 L896.83 41.07 L895.2 41.54 L893.5 42.15 L891.73 42.88 L889.89 43.72 L887.99 44.65 L886.03 45.66 L884.01 46.73 L881.95 47.86 L879.83 49.03 L877.69 50.25 L875.5 51.5 L873.29 52.78 L871.05 54.08 L868.79 55.4 L866.5 56.75 L864.21 58.11 L861.89 59.48 L859.56 60.87 L857.23 62.26 L854.88 63.67 L852.52 65.09 L850.16 66.51 L847.79 67.94 L845.41 69.37 L843.04 70.82 L840.65 72.26 L838.27 73.71 L835.89 75.17 L833.5 76.63 L831.11 78.09 L828.72 79.56 L826.34 81.03 L823.95 82.5 L821.57 83.97 L819.19 85.45 L816.81 86.93 L814.43 88.41 L812.06 89.89 L809.69 91.38 L807.32 92.86 L804.95 94.35 L802.6 95.84 L800.24 97.33 L797.89 98.82 L795.55 100.31 L793.21 101.8 L790.87 103.3 L788.55 104.79 L786.22 106.29 L783.91 107.79 L781.6 109.28 L779.3 110.78 L777 112.28 L774.71 113.78 L772.43 115.28 L770.16 116.78 L767.89 118.29 L765.64 119.79 L763.39 121.29 L761.14 122.79 L758.91 124.3 L756.69 125.8 L754.47 127.31 L752.27 128.81 L750.07 130.32 L747.88 131.82 L745.7 133.33 L743.53 134.84 L741.38 136.34 L739.23 137.85 L737.09 139.36 L734.96 140.87 L732.84 142.38 L730.74 143.88 L728.64 145.39 L726.56 146.9 L724.48 148.41 L722.42 149.92 L720.37 151.43 L718.33 152.94 L716.3 154.45 L714.29 155.96 L712.28 157.47 L710.29 158.98 L708.31 160.49 L706.35 162.01 L704.39 163.52 L702.45 165.03 L700.52 166.54 L698.61 168.05 L696.7 169.56 L694.82 171.08 L692.94 172.59 L691.08 174.1 L689.23 175.61 L687.4 177.13 L685.57 178.64 L683.77 180.15 L681.98 181.66 L680.2 183.18 L678.44 184.69 L676.69 186.2 L674.95 187.72 L673.23 189.23 L671.53 190.74 L669.84 192.26 L668.17 193.77 L666.51 195.28 L664.86 196.8 L663.23 198.31 L661.62 199.83 L660.03 201.34 L658.45 202.86 L656.88 204.37 L655.33 205.88 L653.8 207.4 L652.28 208.91 L650.78 210.43 L649.3 211.94 L647.83 213.46 L646.38 214.97 L644.95 216.49 L643.53 218 L642.13 219.52 L640.75 221.03 L639.39 222.55 L638.04 224.06 L636.71 225.58 L635.39 227.09 L634.1 228.61 L632.82 230.12 L631.56 231.64 L630.32 233.15 L629.09 234.67 L627.88 236.18 L626.7 237.7 L625.52 239.21 L624.37 240.73 L623.24 242.25 L622.12 243.76 L621.02 245.28 L619.95 246.79 L618.89 248.31 L617.84 249.82 L616.82 251.34 L615.82 252.86 L614.83 254.37 L613.86 255.89 L612.92 257.4 L611.99 258.92 L611.08 260.43 L610.19 261.95 L609.32 263.47 L608.47 264.98 L607.63 266.5 L606.82 268.01 L606.03 269.53 L605.25 271.05 L604.5 272.56 L603.76 274.08 L603.05 275.6 L602.35 277.11 L601.68 278.63 L601.02 280.14 L600.38 281.66 L599.77 283.18 L599.17 284.69 L598.6 286.21 L598.04 287.73 L597.5 289.24 L596.99 290.76 L596.49 292.27 L596.02 293.79 L595.56 295.31 L595.12 296.82 L594.71 298.34 L594.31 299.86 L593.94 301.37 L593.58 302.89 L593.25 304.4 L592.94 305.92 L592.64 307.44 L592.37 308.95 L592.12 310.47 L591.89 311.99 L591.67 313.5 L591.48 315.02 L591.31 316.54 L591.16 318.05 L591.03 319.57 L590.92 321.08 L590.84 322.6 L590.77 324.12 L590.72 325.63 L590.69 327.15 L590.69 328.67 L590.7 330.18 L590.74 331.7 L590.79 333.22 L590.87 334.73 L590.96 336.25 L591.08 337.77 L591.22 339.28 L591.37 340.8 L591.55 342.31 L591.75 343.83 L591.97 345.35 L592.21 346.86 L592.47 348.38 L592.75 349.9 L593.05 351.41 L593.37 352.93 L593.71 354.44 L594.08 355.96 L594.46 357.48 L594.86 358.99 L595.28 360.51"/><path d="M590.09 148.31 L591.66 147.48 L593.24 146.65 L594.83 145.82 L596.42 144.99 L598.02 144.16 L599.62 143.33 L601.22 142.5 L602.83 141.68 L604.45 140.85 L606.07 140.02 L607.69 139.2 L609.32 138.37 L610.95 137.55 L612.59 136.72 L614.23 135.9 L615.88 135.08 L617.53 134.26 L619.18 133.44 L620.84 132.61 L622.5 131.8 L624.16 130.98 L625.83 130.16 L627.5 129.34 L629.18 128.52 L630.86 127.71 L632.54 126.89 L634.23 126.08 L635.91 125.26 L637.61 124.45 L639.3 123.64 L641 122.83 L642.69 122.02 L644.4 121.21 L646.1 120.4 L647.81 119.59 L649.52 118.79 L651.23 117.98 L652.94 117.18 L654.65 116.38 L656.37 115.57 L658.09 114.77 L659.8 113.97 L661.52 113.18 L663.25 112.38 L664.97 111.58 L666.69 110.79 L668.41 110 L670.14 109.21 L671.86 108.42 L673.59 107.63 L675.31 106.84 L677.03 106.06 L678.76 105.27 L680.48 104.49 L682.2 103.71 L683.92 102.93 L685.64 102.16 L687.36 101.38 L689.07 100.61 L690.79 99.84 L692.5 99.07 L694.21 98.31 L695.91 97.54 L697.62 96.78 L699.32 96.02 L701.01 95.27 L702.71 94.51 L704.39 93.76 L706.08 93.01 L707.76 92.27 L709.43 91.52 L711.1 90.78 L712.76 90.05 L714.41 89.32 L716.06 88.59 L717.7 87.86 L719.33 87.14 L720.96 86.42 L722.57 85.7 L724.18 84.99 L725.77 84.29 L727.36 83.58"/><path d="M1074.04 82.89 L1071.45 82.19 L1068.87 81.51 L1066.3 80.82 L1063.74 80.15 L1061.21 79.47 L1058.68 78.81 L1056.17 78.15 L1053.68 77.49 L1051.2 76.84 L1048.74 76.2 L1046.3 75.57 L1043.88 74.94 L1041.48 74.32 L1039.1 73.71 L1036.74 73.11 L1034.41 72.51 L1032.1 71.92 L1029.81 71.35 L1027.55 70.78 L1025.31 70.22 L1023.11 69.67 L1020.93 69.13 L1018.78 68.61 L1016.66 68.09 L1014.57 67.59 L1012.52 67.1 L1010.5 66.62 L1008.51 66.15 L1006.56 65.7 L1004.65 65.27 L1002.78 64.84 L1000.95 64.44 L999.15 64.04 L997.4 63.67 L995.69 63.31 L994.03 62.97 L992.41 62.65 L990.83 62.34 L989.3 62.05 L987.82 61.79 L986.39 61.54 L985 61.31 L983.66 61.1 L982.38 60.92 L981.14 60.75 L979.95 60.61 L978.81 60.48 L977.72 60.38 L976.68 60.3 L975.69 60.25 L974.75 60.21 L973.86 60.2 L973.02 60.21 L972.22 60.25 L971.47 60.3 L970.77 60.38 L970.11 60.48 L969.5 60.61 L968.93 60.75 L968.4 60.92 L967.92 61.1 L967.47 61.31 L967.06 61.54 L966.69 61.79 L966.35 62.05 L966.05 62.34 L965.79 62.65 L965.55 62.97 L965.35 63.31 L965.17 63.67 L965.02 64.04 L964.9 64.44 L964.81 64.84 L964.74 65.26 L964.7 65.7 L964.67 66.15 L964.67 66.62 L964.69 67.1 L964.73 67.59 L964.78 68.09 L964.86 68.61 L964.94 69.13 L965.05 69.67 L965.17 70.22 L965.31 70.78 L965.45 71.34 L965.61 71.92 L965.79 72.51 L965.97 73.1 L966.17 73.71 L966.37 74.32 L966.59 74.94 L966.81 75.57 L967.04 76.2 L967.28 76.84 L967.53 77.49 L967.79 78.14 L968.05 78.8 L968.32 79.47 L968.59 80.14 L968.87 80.82 L969.16 81.5 L969.45 82.19 L969.75 82.88 L970.05 83.58 L970.36 84.28 L970.67 84.99 L970.98 85.7 L971.3 86.42 L971.62 87.14 L971.94 87.86 L972.27 88.58 L972.6 89.31 L972.93 90.05 L973.27 90.78 L973.6 91.52 L973.94 92.26 L974.28 93.01 L974.63 93.76 L974.97 94.51 L975.32 95.26 L975.67 96.02 L976.01 96.78 L976.37 97.54 L976.72 98.3 L977.07 99.07 L977.42 99.84 L977.78 100.61 L978.13 101.38 L978.49 102.15 L978.84 102.93 L979.2 103.71 L979.56 104.49 L979.91 105.27 L980.27 106.05 L980.63 106.84 L980.99 107.63 L981.34 108.41 L981.7 109.2 L982.06 110 L982.42 110.79 L982.77 111.58 L983.13 112.38 L983.49 113.17 L983.84 113.97 L984.2 114.77 L984.56 115.57 L984.91 116.37 L985.27 117.18 L985.62 117.98 L985.97 118.79 L986.33 119.59 L986.68 120.4 L987.03 121.21 L987.38 122.02 L987.73 122.83 L988.08 123.64 L988.42 124.45 L988.77 125.26 L989.12 126.07 L989.46 126.89 L989.81 127.7 L990.15 128.52 L990.49 129.34 L990.83 130.16 L991.17 130.97 L991.51 131.79 L991.85 132.61 L992.18 133.43 L992.52 134.25 L992.85 135.08 L993.18 135.9 L993.51 136.72 L993.84 137.55 L994.17 138.37 L994.5 139.2 L994.82 140.02 L995.15 140.85 L995.47 141.67 L995.79 142.5 L996.11 143.33 L996.43 144.16 L996.74 144.99 L997.06 145.81 L997.37 146.64 L997.68 147.47 L998 148.3 L998.3 149.14 L998.61 149.97 L998.92 150.8 L999.22 151.63 L999.52 152.46 L999.82 153.3 L1000.12 154.13 L1000.42 154.97 L1000.72 155.8 L1001.01 156.63 L1001.3 157.47 L1001.59 158.31 L1001.88 159.14 L1002.17 159.98 L1002.45 160.81 L1002.73 161.65 L1003.02 162.49 L1003.29 163.33 L1003.57 164.16 L1003.85 165 L1004.12 165.84 L1004.39 166.68 L1004.66 167.52 L1004.93 168.36 L1005.2 169.2 L1005.46 170.04 L1005.72 170.88 L1005.99 171.72 L1006.24 172.56 L1006.5 173.4"/><path d="M1016.8 244.1 L1015.25 243.36 L1013.7 242.63 L1012.15 241.9 L1010.6 241.18 L1009.04 240.46 L1007.49 239.74 L1005.94 239.03 L1004.38 238.32 L1002.83 237.62 L1001.28 236.93 L999.72 236.23 L998.17 235.55 L996.61 234.87 L995.06 234.19 L993.5 233.52 L991.95 232.85 L990.4 232.19 L988.84 231.54 L987.29 230.89 L985.74 230.24 L984.18 229.6 L982.63 228.97 L981.08 228.34 L979.53 227.72 L977.98 227.1 L976.43 226.49 L974.88 225.89 L973.33 225.29 L971.78 224.69 L970.23 224.11 L968.68 223.53 L967.13 222.95 L965.59 222.39 L964.04 221.83 L962.49 221.27 L960.95 220.72 L959.41 220.18 L957.86 219.65 L956.32 219.12 L954.78 218.6 L953.24 218.08 L951.7 217.57 L950.16 217.07 L948.62 216.58 L947.08 216.09 L945.55 215.61 L944.01 215.14 L942.48 214.68 L940.94 214.22 L939.41 213.77 L937.87 213.33 L936.34 212.89 L934.81 212.47 L933.28 212.05 L931.75 211.64 L930.22 211.23 L928.69 210.84 L927.16 210.45 L925.64 210.07 L924.11 209.7 L922.58 209.33 L921.06 208.98 L919.53 208.63 L918.01 208.29 L916.48 207.96 L914.96 207.64 L913.43 207.32 L911.91 207.02 L910.39 206.72 L908.86 206.43 L907.34 206.15 L905.82 205.88 L904.3 205.62 L902.77 205.37 L901.25 205.12 L899.73 204.88 L898.21 204.66 L896.69 204.44 L895.16 204.23 L893.64 204.03 L892.12 203.84 L890.59 203.66 L889.07 203.48 L887.55 203.32 L886.02 203.16 L884.5 203.02 L882.97 202.88 L881.44 202.75 L879.92 202.64 L878.39 202.53 L876.86 202.43 L875.33 202.34 L873.8 202.26 L872.27 202.19 L870.73 202.12 L869.2 202.07 L867.66 202.03 L866.13 201.99 L864.59 201.97 L863.05 201.95 L861.51 201.95 L859.97 201.95 L858.42 201.96 L856.88 201.99 L855.33 202.02 L853.78 202.06 L852.23 202.11 L850.68 202.17 L849.13 202.24 L847.57 202.32 L846.01 202.41 L844.45 202.5 L842.89 202.61 L841.33 202.72 L839.76 202.85 L838.19 202.98 L836.62 203.13 L835.05 203.28 L833.47 203.44 L831.89 203.61 L830.31 203.79 L828.73 203.98 L827.15 204.18 L825.56 204.39 L823.97 204.6 L822.37 204.83 L820.78 205.06 L819.18 205.3 L817.58 205.55 L815.98 205.81 L814.37 206.08 L812.76 206.36 L811.15 206.65 L809.54 206.94 L807.92 207.25 L806.3 207.56 L804.68 207.88 L803.06 208.21 L801.43 208.54 L799.8 208.89 L798.17 209.24 L796.53 209.6 L794.89 209.97 L793.25 210.35 L791.61 210.74 L789.96 211.13 L788.31 211.53 L786.66 211.94 L785.01 212.36 L783.35 212.79 L781.69 213.22 L780.03 213.66 L778.37 214.11 L776.7 214.56 L775.03 215.03 L773.36 215.5 L771.69 215.97 L770.01 216.46 L768.33 216.95 L766.65 217.45 L764.97 217.95 L763.29 218.47 L761.6 218.99 L759.91 219.51 L758.22 220.05 L756.53 220.59 L754.84 221.13 L753.14 221.69 L751.44 222.25 L749.74 222.81 L748.04 223.38 L746.34 223.96 L744.64 224.55 L742.93 225.14 L741.22 225.74 L739.52 226.34 L737.81 226.95 L736.1 227.56 L734.39 228.18 L732.68 228.81 L730.96 229.44 L729.25 230.08 L727.54 230.72 L725.82 231.37 L724.11 232.03 L722.39 232.69 L720.68 233.35 L718.96 234.02 L717.25 234.7 L715.53 235.38 L713.81 236.06 L712.1 236.75 L710.38 237.45 L708.67 238.15 L706.95 238.85 L705.24 239.56 L703.52 240.28 L701.81 241 L700.1 241.72 L698.39 242.45 L696.68 243.18 L694.97 243.92 L693.26 244.66 L691.55 245.4 L689.85 246.15 L688.14 246.9 L686.44 247.66 L684.74 248.42 L683.04 249.19 L681.34 249.96 L679.65 250.73 L677.96 251.5 L676.27 252.29 L674.58 253.07 L672.89 253.86 L671.21 254.65 L669.53 255.44 L667.85 256.24 L666.17 257.04 L664.5 257.84 L662.83 258.65 L661.17 259.46 L659.5 260.28 L657.84 261.09 L656.19 261.91 L654.53 262.74 L652.88 263.56 L651.24 264.39 L649.6 265.22 L647.96 266.06 L646.32 266.89 L644.69 267.73 L643.07 268.58 L641.45 269.42 L639.83 270.27 L638.22 271.12 L636.61 271.97 L635 272.82 L633.41 273.68 L631.81 274.54 L630.22 275.4 L628.64 276.26 L627.06 277.13 L625.49 278 L623.92 278.87 L622.36 279.74 L620.8 280.61 L619.25 281.49 L617.7 282.36 L616.16 283.24 L614.63 284.12 L613.1 285 L611.57 285.89 L610.06 286.77 L608.55 287.66 L607.04 288.55 L605.54 289.44 L604.05 290.33 L602.57 291.22 L601.09 292.12 L599.62 293.01 L598.15 293.91 L596.69 294.81 L595.24 295.71 L593.8 296.61 L592.36 297.51 L590.93 298.41 L589.5 299.31 L588.09 300.22 L586.68 301.12 L585.27 302.03 L583.88 302.94 L582.49 303.84 L581.11 304.75 L579.74 305.66 L578.37 306.57 L577.01 307.48 L575.66 308.39 L574.32 309.3 L572.99 310.22 L571.66 311.13 L570.34 312.04 L569.03 312.95 L567.73 313.87 L566.43 314.78 L565.15 315.69 L563.87 316.61 L562.6 317.52 L561.34 318.44 L560.08 319.35 L558.83 320.27 L557.6 321.18 L556.37 322.1 L555.15 323.01 L553.93 323.92 L552.73 324.84 L551.53 325.75 L550.34 326.67 L549.16 327.58 L547.99 328.49"/><path d="M1046.8 183.8 L1044.99 182.88 L1043.18 181.97 L1041.37 181.07 L1039.56 180.17 L1037.75 179.29 L1035.95 178.4 L1034.15 177.53 L1032.35 176.66 L1030.55 175.8 L1028.75 174.95 L1026.96 174.11 L1025.17 173.27 L1023.39 172.45 L1021.6 171.63 L1019.82 170.82 L1018.05 170.02 L1016.27 169.22 L1014.51 168.44 L1012.74 167.67 L1010.98 166.9 L1009.22 166.15 L1007.47 165.4 L1005.72 164.67 L1003.98 163.94 L1002.24 163.22 L1000.51 162.52 L998.78 161.82 L997.05 161.14 L995.33 160.47 L993.62 159.8 L991.91 159.15 L990.2 158.51 L988.51 157.88 L986.81 157.27 L985.13 156.66 L983.44 156.07 L981.77 155.49 L980.1 154.92 L978.43 154.36 L976.77 153.82 L975.12 153.29 L973.47 152.77 L971.83 152.27 L970.19 151.78 L968.56 151.3 L966.94 150.84 L965.32 150.39 L963.71 149.95 L962.1 149.53 L960.5 149.12 L958.9 148.73 L957.31 148.35 L955.73 147.99 L954.15 147.64 L952.58 147.3 L951.01 146.98 L949.44 146.68 L947.89 146.39 L946.33 146.12 L944.79 145.86 L943.24 145.62 L941.7 145.4 L940.17 145.19 L938.64 144.99 L937.11 144.81 L935.59 144.65 L934.07 144.51 L932.56 144.38 L931.05 144.27 L929.55 144.17 L928.04 144.09 L926.54 144.02 L925.05 143.98 L923.55 143.95 L922.06 143.93 L920.57 143.93 L919.08 143.95 L917.6 143.99 L916.12 144.04 L914.64 144.11 L913.16 144.19 L911.68 144.29 L910.2 144.41 L908.73 144.54 L907.25 144.69 L905.78 144.86 L904.3 145.04 L902.83 145.24 L901.35 145.45 L899.88 145.68 L898.41 145.93 L896.93 146.19 L895.46 146.46 L893.98 146.76 L892.51 147.06 L891.03 147.39 L889.55 147.72 L888.07 148.08 L886.59 148.44 L885.11 148.83 L883.62 149.22 L882.14 149.63 L880.65 150.06 L879.16 150.5 L877.67 150.95 L876.17 151.42 L874.68 151.9 L873.18 152.39 L871.68 152.9 L870.17 153.42 L868.67 153.96 L867.16 154.5 L865.65 155.06 L864.13 155.63 L862.62 156.22 L861.1 156.81 L859.58 157.42 L858.05 158.04 L856.52 158.67 L854.99 159.31 L853.46 159.97 L851.93 160.63 L850.39 161.31 L848.85 162 L847.3 162.7 L845.76 163.4 L844.21 164.12 L842.66 164.85 L841.1 165.59 L839.55 166.34 L837.99 167.09 L836.43 167.86 L834.86 168.64 L833.3 169.42 L831.73 170.22 L830.16 171.02 L828.59 171.83 L827.01 172.65 L825.44 173.48 L823.86 174.32 L822.28 175.17 L820.7 176.02 L819.11 176.88 L817.53 177.75 L815.94 178.63 L814.35 179.51 L812.77 180.4 L811.18 181.3 L809.58 182.2 L807.99 183.11 L806.4 184.03 L804.81 184.96 L803.21 185.89 L801.62 186.83 L800.02 187.77 L798.43 188.72 L796.84 189.68 L795.24 190.64 L793.65 191.61 L792.05 192.58 L790.46 193.56 L788.86 194.54 L787.27 195.53 L785.68 196.53 L784.08 197.53 L782.49 198.54 L780.9 199.55 L779.32 200.56 L777.73 201.58 L776.14 202.61 L774.56 203.63 L772.98 204.67 L771.39 205.71 L769.82 206.75 L768.24 207.79 L766.66 208.85 L765.09 209.9 L763.52 210.96 L761.95 212.02 L760.39 213.09 L758.83 214.16 L757.27 215.23 L755.71 216.31 L754.16 217.39 L752.61 218.48 L751.07 219.56 L749.52 220.66 L747.98 221.75 L746.45 222.85 L744.92 223.95 L743.39 225.05 L741.87 226.16 L740.35 227.27 L738.83 228.38 L737.32 229.5 L735.82 230.62 L734.32 231.74 L732.82 232.86 L731.33 233.99 L729.84 235.12 L728.36 236.25 L726.89 237.38 L725.42 238.52 L723.95 239.66 L722.5 240.8 L721.04 241.94 L719.6 243.09 L718.15 244.23 L716.72 245.38 L715.29 246.54 L713.87 247.69 L712.45 248.84 L711.04 250 L709.64 251.16 L708.24 252.32 L706.85 253.49 L705.47 254.65 L704.09 255.82 L702.72 256.98 L701.36 258.15 L700.01 259.33 L698.66 260.5 L697.32 261.67 L695.99 262.85 L694.67 264.03 L693.35 265.2 L692.04 266.38 L690.74 267.57 L689.45 268.75 L688.16 269.93 L686.89 271.12 L685.62 272.3 L684.36 273.49 L683.11 274.68 L681.87 275.87 L680.63 277.06 L679.41 278.25 L678.19 279.44 L676.98 280.64 L675.79 281.83 L674.6 283.03 L673.42 284.22 L672.25 285.42 L671.08 286.62 L669.93 287.82 L668.79 289.02 L667.65 290.22 L666.53 291.42 L665.42 292.62 L664.31 293.82 L663.22 295.03 L662.13 296.23 L661.06 297.43 L659.99 298.64 L658.94 299.84 L657.89 301.05 L656.86 302.25 L655.83 303.46 L654.82 304.67 L653.81 305.87 L652.82 307.08 L651.83 308.29 L650.86 309.49 L649.9 310.7 L648.95 311.91 L648 313.12 L647.07 314.33 L646.15 315.54 L645.24 316.74 L644.34 317.95 L643.46 319.16 L642.58 320.37 L641.71 321.58 L640.86 322.79 L640.01 324 L639.18 325.21 L638.36 326.42 L637.54 327.62 L636.74 328.83 L635.96 330.04 L635.18 331.25 L634.41 332.46 L633.65 333.66 L632.91 334.87 L632.18 336.08 L631.45 337.28 L630.74 338.49 L630.04 339.69 L629.35 340.9 L628.68 342.1 L628.01 343.31 L627.36 344.51 L626.71 345.72 L626.08 346.92 L625.46 348.12 L624.85 349.32 L624.25 350.52 L623.67 351.72 L623.09 352.92 L622.53 354.12"/><path d="M838.7 222.3 L837.68 221.57 L836.66 220.85 L835.64 220.14 L834.63 219.42 L833.61 218.72 L832.59 218.01 L831.57 217.31 L830.55 216.62 L829.53 215.93 L828.52 215.25 L827.5 214.57 L826.48 213.89 L825.46 213.22 L824.44 212.55 L823.42 211.89 L822.4 211.24 L821.38 210.59 L820.36 209.94 L819.33 209.3 L818.31 208.67 L817.29 208.04 L816.26 207.42 L815.24 206.8 L814.21 206.19 L813.18 205.58 L812.16 204.98 L811.13 204.38 L810.1 203.8 L809.07 203.21 L808.03 202.63 L807 202.06 L805.96 201.5 L804.93 200.94 L803.89 200.39 L802.85 199.84 L801.81 199.3 L800.76 198.77 L799.72 198.24 L798.67 197.72 L797.62 197.21 L796.57 196.7 L795.52 196.2 L794.46 195.71 L793.4 195.22 L792.34 194.74 L791.28 194.27 L790.21 193.8 L789.14 193.35 L788.07 192.9 L787 192.45 L785.92 192.02 L784.84 191.59 L783.75 191.17 L782.67 190.75 L781.58 190.35 L780.48 189.95 L779.38 189.56 L778.28 189.18 L777.17 188.8 L776.06 188.44 L774.95 188.08 L773.83 187.73 L772.71 187.38 L771.58 187.05 L770.45 186.72 L769.31 186.41 L768.17 186.1 L767.02 185.79 L765.87 185.5 L764.72 185.22 L763.55 184.94 L762.39 184.68 L761.22 184.42 L760.04 184.17 L758.85 183.93 L757.66 183.69 L756.47 183.47 L755.27 183.26 L754.06 183.05 L752.85 182.85 L751.63 182.67 L750.4 182.49 L749.17 182.32 L747.93 182.16 L746.68 182 L745.43 181.86 L744.17 181.73 L742.9 181.6 L741.63 181.49 L740.35 181.38 L739.06 181.29 L737.76 181.2 L736.46 181.12 L735.15 181.05 L733.83 180.99 L732.5 180.94 L731.17 180.9 L729.82 180.87 L728.47 180.85 L727.12 180.83 L725.75 180.83 L724.38 180.84 L722.99 180.85 L721.6 180.87 L720.2 180.91 L718.8 180.95 L717.38 181 L715.95 181.07 L714.52 181.14 L713.08 181.22 L711.63 181.31 L710.17 181.4 L708.7 181.51 L707.23 181.63 L705.74 181.76 L704.25 181.89 L702.75 182.04 L701.24 182.19 L699.72 182.35 L698.19 182.52 L696.65 182.7 L695.1 182.89 L693.55 183.09 L691.98 183.3 L690.41 183.52 L688.83 183.74 L687.24 183.98 L685.64 184.22 L684.04 184.47 L682.42 184.73 L680.8 185 L679.16 185.28 L677.52 185.56 L675.87 185.86 L674.21 186.16 L672.55 186.47 L670.87 186.79 L669.19 187.12 L667.5 187.46 L665.8 187.8 L664.1 188.15 L662.38 188.51 L660.66 188.88 L658.93 189.26 L657.19 189.64 L655.44 190.03 L653.69 190.43 L651.93 190.84 L650.16 191.26 L648.39 191.68 L646.61 192.11 L644.82 192.55 L643.02 192.99 L641.22 193.44 L639.41 193.9 L637.6 194.37 L635.77 194.84 L633.95 195.32 L632.11 195.81 L630.27 196.31 L628.42 196.81 L626.57 197.32 L624.72 197.83 L622.85 198.35 L620.98 198.88 L619.11 199.42 L617.23 199.96 L615.35 200.5 L613.46 201.06 L611.57 201.62 L609.67 202.18 L607.77 202.76 L605.86 203.34 L603.96 203.92 L602.04 204.51 L600.12 205.11 L598.2 205.71 L596.28 206.32 L594.35 206.93 L592.42 207.55 L590.49 208.17 L588.55 208.8 L586.62 209.44 L584.67 210.08 L582.73 210.73 L580.79 211.38 L578.84 212.03 L576.89 212.7 L574.94 213.36 L572.99 214.03 L571.04 214.71 L569.08 215.39 L567.13 216.08 L565.17 216.77 L563.22 217.46 L561.26 218.16 L559.3 218.87 L557.35 219.58 L555.39 220.29 L553.43 221.01 L551.48 221.73 L549.52 222.45 L547.57 223.18 L545.61 223.92 L543.66 224.66 L541.71 225.4 L539.76 226.15 L537.81 226.9 L535.87 227.65 L533.92 228.41 L531.98 229.17 L530.04 229.94 L528.1 230.71 L526.17 231.48 L524.24 232.26 L522.31 233.04 L520.38 233.82 L518.46 234.61 L516.54 235.4 L514.63 236.19 L512.71 236.99 L510.81 237.78 L508.9 238.59 L507 239.39 L505.11 240.2 L503.22 241.01 L501.33 241.83 L499.45 242.65 L497.58 243.47 L495.71 244.29 L493.84 245.12 L491.98 245.95 L490.13 246.78 L488.28 247.61 L486.44 248.45 L484.6 249.29 L482.77 250.13 L480.95 250.98 L479.13 251.82 L477.32 252.67 L475.52 253.52 L473.72 254.38 L471.93 255.23 L470.15 256.09 L468.37 256.95 L466.6 257.82 L464.84 258.68 L463.09 259.55 L461.35 260.42 L459.61 261.29 L457.88 262.16 L456.16 263.04 L454.45 263.91 L452.75 264.79 L451.05 265.67 L449.37 266.55 L447.69 267.44 L446.02 268.32 L444.36 269.21 L442.71 270.1 L441.07 270.99 L439.44 271.88 L437.82 272.78 L436.21 273.67 L434.61 274.57 L433.02 275.47 L431.43 276.37 L429.86 277.27 L428.3 278.17 L426.75 279.07 L425.21 279.98 L423.68 280.89 L422.16 281.79 L420.65 282.7 L419.15 283.61 L417.66 284.52 L416.19 285.43 L414.72 286.35 L413.27 287.26 L411.83 288.18 L410.39 289.09 L408.98 290.01 L407.57 290.93 L406.17 291.85 L404.78 292.77 L403.41 293.69 L402.05 294.61 L400.7 295.53 L399.36 296.45 L398.04 297.38 L396.72 298.3 L395.42 299.22 L394.13 300.15 L392.86 301.08 L391.59 302 L390.34 302.93 L389.1 303.86 L387.87 304.79 L386.66 305.71 L385.46 306.64"/><path d="M928.5 210 L927.93 208.54 L927.36 207.08 L926.79 205.63 L926.21 204.17 L925.64 202.72 L925.06 201.26 L924.49 199.81 L923.91 198.36 L923.33 196.9 L922.75 195.45 L922.16 194 L921.58 192.55 L920.99 191.1 L920.41 189.66 L919.82 188.21 L919.23 186.76 L918.65 185.32 L918.06 183.88 L917.46 182.43 L916.87 180.99 L916.28 179.55 L915.69 178.11 L915.09 176.68 L914.5 175.24 L913.9 173.81 L913.31 172.37 L912.71 170.94 L912.12 169.51 L911.52 168.08 L910.92 166.65 L910.32 165.23 L909.72 163.8 L909.12 162.38 L908.52 160.96 L907.92 159.54 L907.32 158.12 L906.72 156.7 L906.12 155.29 L905.52 153.88 L904.92 152.47 L904.32 151.06 L903.72 149.66 L903.12 148.26 L902.52 146.86 L901.92 145.46 L901.32 144.06 L900.71 142.67 L900.11 141.28 L899.51 139.9 L898.91 138.51 L898.31 137.13 L897.71 135.76 L897.11 134.38 L896.51 133.01 L895.91 131.65 L895.31 130.29 L894.71 128.93 L894.11 127.57 L893.51 126.22 L892.91 124.88 L892.31 123.54 L891.71 122.2 L891.11 120.87 L890.51 119.55 L889.91 118.23 L889.31 116.91 L888.71 115.61 L888.11 114.31 L887.51 113.01 L886.91 111.72 L886.3 110.44 L885.7 109.17 L885.1 107.91 L884.49 106.65 L883.89 105.4 L883.28 104.16 L882.68 102.94 L882.07 101.72 L881.46 100.51 L880.84 99.31 L880.23 98.13 L879.61 96.96 L878.99 95.8 L878.36 94.65 L877.74 93.52 L877.1 92.4 L876.47 91.3 L875.82 90.22 L875.17 89.15 L874.52 88.1 L873.85 87.07 L873.18 86.07 L872.5 85.08 L871.81 84.12 L871.11 83.18 L870.39 82.26 L869.66 81.37 L868.92 80.51 L868.15 79.68 L867.37 78.88 L866.57 78.11 L865.75 77.37 L864.91 76.67 L864.03 76.01 L863.14 75.38 L862.21 74.79 L861.24 74.24 L860.24 73.74 L859.21 73.28 L858.13 72.86 L857.01 72.49 L855.85 72.17 L854.64 71.89 L853.37 71.66 L852.06 71.49 L850.68 71.36 L849.25 71.29 L847.77 71.26 L846.21 71.29 L844.6 71.37 L842.92 71.5 L841.18 71.68 L839.37 71.91 L837.49 72.19 L835.54 72.52 L833.53 72.89 L831.45 73.31 L829.31 73.78 L827.1 74.29 L824.82 74.84 L822.48 75.43 L820.08 76.06 L817.62 76.73 L815.1 77.43 L812.53 78.17 L809.89 78.94 L807.21 79.74 L804.47 80.58 L801.69 81.44 L798.86 82.33 L795.98 83.25 L793.06 84.19 L790.1 85.16 L787.1 86.14 L784.06 87.15 L780.99 88.18 L777.88 89.23 L774.75 90.3 L771.58 91.39 L768.39 92.49 L765.17 93.61 L761.92 94.74 L758.65 95.89 L755.36 97.05 L752.05 98.22 L748.73 99.41 L745.38 100.6 L742.02 101.81 L738.64 103.03 L735.25 104.26 L731.85 105.5 L728.44 106.75 L725.02 108 L721.58 109.27 L718.15 110.54 L714.7 111.82 L711.25 113.11 L707.79 114.41 L704.33 115.71 L700.86 117.02 L697.39 118.33 L693.92 119.65 L690.45 120.98 L686.98 122.31 L683.51 123.64 L680.04 124.98 L676.57 126.33 L673.11 127.68 L669.64 129.03 L666.19 130.39 L662.73 131.75 L659.28 133.12 L655.84 134.49 L652.4 135.86 L648.97 137.24 L645.55 138.62 L642.13 140 L638.72 141.39 L635.32 142.78 L631.93 144.17 L628.55 145.57 L625.18 146.96 L621.82 148.36 L618.47 149.77 L615.14 151.17 L611.81 152.58 L608.5 153.99 L605.2 155.4 L601.91 156.81 L598.63 158.23 L595.37 159.65 L592.13 161.07 L588.89 162.49 L585.68 163.91 L582.47 165.34 L579.29 166.76 L576.12 168.19 L572.96 169.62 L569.82 171.05 L566.7 172.48 L563.6 173.92 L560.51 175.35 L557.45 176.79 L554.4 178.23 L551.36 179.66 L548.35 181.1 L545.36 182.55 L542.38 183.99 L539.43 185.43 L536.49 186.88 L533.58 188.32 L530.68 189.77 L527.81 191.22 L524.95 192.66 L522.12 194.11 L519.31 195.56 L516.52 197.02 L513.76 198.47 L511.01 199.92 L508.29 201.37 L505.59 202.83 L502.91 204.28 L500.26 205.74 L497.63 207.2 L495.02 208.65 L492.44 210.11 L489.88 211.57 L487.35 213.03 L484.84 214.49 L482.35 215.95 L479.89 217.41 L477.46 218.88 L475.04 220.34 L472.66 221.8 L470.3 223.26 L467.97 224.73 L465.66 226.19 L463.38 227.66 L461.13 229.12 L458.9 230.59 L456.7 232.06 L454.52 233.52 L452.37 234.99 L450.25 236.46 L448.16 237.93 L446.1 239.39 L444.06 240.86 L442.05 242.33 L440.07 243.8 L438.12 245.27 L436.19 246.74 L434.3 248.21 L432.43 249.68 L430.59 251.15 L428.78 252.63 L427 254.1 L425.25 255.57 L423.53 257.04 L421.84 258.51 L420.18 259.99 L418.54 261.46 L416.94 262.93 L415.37 264.41 L413.83 265.88 L412.32 267.36 L410.83 268.83 L409.38 270.31 L407.96 271.78 L406.57 273.25 L405.21 274.73 L403.88 276.21 L402.59 277.68 L401.32 279.16 L400.09 280.63 L398.88 282.11 L397.71 283.58 L396.57 285.06 L395.46 286.54 L394.38 288.01 L393.34 289.49 L392.32 290.97 L391.34 292.44 L390.39 293.92 L389.47 295.4 L388.58 296.88 L387.73 298.35 L386.91 299.83 L386.12 301.31 L385.36 302.78 L384.63 304.26"/></g>
<path d="M969.1 98.9L992.2 123.3M965.6 106.1L984.4 120.6M981.7 106.7L989.4 129.4M1038.3 155.8L1058.7 156M1059.4 150.2L1081.1 168.3M1006.5 173.4L1014 202.2M1016.8 244.1L1040.7 256.6M1046.8 183.8L1052.3 188.7M838.7 222.3L851.7 232M928.5 210L930.5 215.5" stroke="#9a9a9a" stroke-width="1.3" fill="none"/>
<path d="M377.3 333.3 L377.17 332.07 L377.05 330.85 L376.96 329.62 L376.9 328.4 L376.85 327.17 L376.83 325.94 L376.83 324.72 L376.85 323.49 L376.9 322.27 L376.97 321.04 L377.06 319.81 L377.17 318.59 L377.31 317.36 L377.47 316.14 L377.65 314.91 L377.86 313.68 L378.08 312.46 L378.33 311.23 L378.61 310.01 L378.9 308.78 L379.22 307.55 L379.56 306.33 L379.92 305.1 L380.31 303.88 L380.71 302.65 L381.14 301.42 L381.6 300.2 L382.07 298.97 L382.57 297.75 L383.09 296.52 L383.63 295.29 L384.2 294.07 L384.78 292.84 L385.39 291.62 L386.02 290.39 L386.68 289.16 L387.35 287.94 L388.05 286.71 L388.77 285.49 L389.51 284.26 L390.28 283.04 L391.06 281.81 L391.87 280.58 L392.7 279.36 L393.56 278.13 L394.43 276.91 L395.33 275.68 L396.24 274.45 L397.18 273.23 L398.15 272 L399.13 270.78 L400.13 269.55 L401.16 268.33 L402.21 267.1 L403.28 265.87 L404.37 264.65 L405.48 263.42 L406.62 262.2 L407.77 260.97 L408.95 259.75 L410.15 258.52 L411.37 257.3 L412.61 256.07 L413.87 254.84 L415.15 253.62 L416.45 252.39 L417.78 251.17 L419.12 249.94 L420.49 248.72 L421.87 247.49 L423.28 246.27 L424.71 245.04 L426.16 243.82 L427.63 242.59 L429.11 241.36 L430.62 240.14 L432.15 238.91 L433.7 237.69 L435.27 236.46 L436.86 235.24 L438.47 234.01 L440.1 232.79 L441.75 231.56 L443.42 230.34 L445.11 229.11 L446.82 227.89 L448.55 226.66 L450.3 225.44 L452.07 224.21 L453.85 222.99 L455.66 221.76 L457.48 220.54 L459.33 219.32 L461.19 218.09 L463.07 216.87 L464.98 215.64 L466.9 214.42 L468.83 213.19 L470.79 211.97 L472.77 210.74 L474.76 209.52 L476.77 208.29 L478.8 207.07 L480.85 205.85 L482.92 204.62 L485 203.4 L487.1 202.17 L489.22 200.95 L491.36 199.73 L493.52 198.5 L495.69 197.28 L497.88 196.05 L500.09 194.83 L502.31 193.61 L504.55 192.38 L506.81 191.16 L509.09 189.94 L511.38 188.71 L513.69 187.49 L516.01 186.27 L518.35 185.04 L520.71 183.82 L523.09 182.6 L525.48 181.37 L527.88 180.15 L530.31 178.93 L532.74 177.71 L535.2 176.48 L537.67 175.26 L540.15 174.04 L542.65 172.82 L545.17 171.59 L547.7 170.37 L550.24 169.15 L552.8 167.93 L555.38 166.71 L557.97 165.48 L560.57 164.26 L563.19 163.04 L565.82 161.82 L568.47 160.6 L571.13 159.38 L573.8 158.16 L576.49 156.94 L579.19 155.72 L581.91 154.5 L584.64 153.27 L587.38 152.05 L590.14 150.83 L592.9 149.61 L595.69 148.4 L598.48 147.18 L601.29 145.96 L604.1 144.74 L606.94 143.52 L609.78 142.3 L612.63 141.08 L615.5 139.86 L618.38 138.64 L621.27 137.43 L624.17 136.21 L627.08 134.99 L630.01 133.77 L632.94 132.56 L635.89 131.34 L638.85 130.12 L641.81 128.91 L644.79 127.69 L647.78 126.48 L650.78 125.26 L653.78 124.05 L656.8 122.83 L659.83 121.62 L662.86 120.4 L665.91 119.19 L668.96 117.98 L672.03 116.76 L675.1 115.55 L678.18 114.34 L681.27 113.13 L684.37 111.92 L687.47 110.71 L690.58 109.5 L693.7 108.29 L696.83 107.08 L699.97 105.87 L703.11 104.66 L706.26 103.46 L709.41 102.25 L712.57 101.05 L715.74 99.84 L718.91 98.64 L722.09 97.44 L725.27 96.23 L728.46 95.03 L731.65 93.83 L734.85 92.63 L738.05 91.44 L741.26 90.24 L744.47 89.04 L747.68 87.85 L750.9 86.66 L754.11 85.47 L757.34 84.28 L760.56 83.09 L763.78 81.9 L767 80.72 L770.23 79.54 L773.45 78.36 L776.68 77.18 L779.9 76 L783.12 74.83 L786.34 73.66 L789.56 72.49 L792.77 71.33 L795.98 70.17 L799.18 69.01 L802.38 67.86 L805.57 66.72 L808.75 65.57 L811.92 64.44 L815.08 63.31 L818.23 62.18 L821.36 61.07 L824.48 59.96 L827.58 58.86 L830.66 57.77 L833.72 56.69 L836.75 55.62 L839.75 54.57 L842.73 53.53 L845.66 52.51 L848.56 51.5 L851.41 50.52 L854.21 49.57 L856.96 48.64 L859.64 47.74 L862.25 46.87 L864.78 46.05 L867.23 45.27 L869.57 44.55 L871.81 43.88 L873.93 43.28 L875.93 42.75 L877.8 42.3 L879.52 41.94 L881.11 41.68 L882.55 41.51 L883.86 41.45 L885.04 41.49 L886.09 41.64 L887.04 41.88 L887.89 42.22 L888.66 42.66 L889.36 43.17 L890 43.76 L890.6 44.41 L891.15 45.13 L891.68 45.89 L892.18 46.71 L892.66 47.56 L893.12 48.46 L893.57 49.38 L894.01 50.33 L894.44 51.31 L894.87 52.31 L895.29 53.33 L895.71 54.36 L896.12 55.41 L896.53 56.48 L896.94 57.55 L897.34 58.64 L897.75 59.74 L898.15 60.85 L898.56 61.96 L898.96 63.09 L899.36 64.21 L899.76 65.35 L900.17 66.49 L900.57 67.64 L900.97 68.79 L901.37 69.94 L901.77 71.1 L902.17 72.26 L902.58 73.43 L902.98 74.6 L903.38 75.77 L903.78 76.95 L904.18 78.12 L904.58 79.3 L904.99 80.48 L905.39 81.67 L905.79 82.85 L906.19 84.04 L906.59 85.23 L906.99 86.42 L907.4 87.61 L907.8 88.81 L908.2 90 L908.6 91.2" stroke="#bddf26" stroke-width="1.55" stroke-dasharray="1.55 2.13" fill="none"/>
<path d="M908.6 91.2L910.9 97.1" stroke="#bddf26" stroke-width="1.6" fill="none"/>
<rect x="909.7" y="95.9" width="2.4" height="2.4" fill="#f0603c"/>
<path d="M401.87 332.1 L402.08 333.37 L402.24 334.65 L402.36 335.91 L402.43 337.17 L402.46 338.41 L402.45 339.64 L402.38 340.85 L402.27 342.03 L402.1 343.19 L401.89 344.31 L401.63 345.41 L401.31 346.47 L400.94 347.49 L400.52 348.47 L400.04 349.4 L399.51 350.29 L398.92 351.13 L398.27 351.91 L397.57 352.64 L396.82 353.32 L396.01 353.94 L395.14 354.49 L394.22 354.99 L393.24 355.42 L392.21 355.79 L391.14 356.09 L390.01 356.33 L388.84 356.5 L387.63 356.6 L386.37 356.63 L385.08 356.6 L383.76 356.5 L382.4 356.33 L381.02 356.09 L379.62 355.79 L378.21 355.42 L376.78 354.99 L375.34 354.49 L373.91 353.94 L372.48 353.32 L371.06 352.64 L369.66 351.91 L368.27 351.13 L366.92 350.29 L365.6 349.4 L364.31 348.47 L363.07 347.49 L361.88 346.47 L360.75 345.41 L359.68 344.31 L358.67 343.19 L357.72 342.03 L356.86 340.85 L356.06 339.64 L355.35 338.41 L354.73 337.17 L354.18 335.91 L353.73 334.65 L353.36 333.37 L353.09 332.1 L352.91 330.82 L352.82 329.55 L352.82 328.29 L352.92 327.04 L353.1 325.8 L353.37 324.58 L353.74 323.38 L354.18 322.2 L354.71 321.05 L355.32 319.93 L356 318.85 L356.76 317.8 L357.58 316.79 L358.47 315.82 L359.42 314.9 L360.42 314.02 L361.48 313.19 L362.58 312.42 L363.72 311.69 L364.9 311.03 L366.1 310.42 L367.34 309.87 L368.59 309.38 L369.87 308.96 L371.15 308.6 L372.44 308.3 L373.74 308.07 L375.03 307.9 L376.32 307.8 L377.6 307.76 L378.87 307.8 L380.12 307.9 L381.35 308.07 L382.56 308.3 L383.74 308.6 L384.9 308.96 L386.03 309.38 L387.13 309.87 L388.2 310.42 L389.23 311.03 L390.23 311.69 L391.2 312.42 L392.12 313.19 L393.01 314.02 L393.86 314.9 L394.67 315.82 L395.45 316.79 L396.18 317.8 L396.88 318.85 L397.53 319.93 L398.15 321.05 L398.72 322.2 L399.26 323.38 L399.75 324.58 L400.21 325.8 L400.62 327.04 L401 328.29 L401.33 329.55 L401.62 330.82 L401.87 332.1 Z" stroke="#bddf26" stroke-width="2.1" fill="none"/>
<path d="M374.1 333.3h6.4M377.3 330.1v6.4" stroke="#ff0000" stroke-width="1.7" fill="none"/>
<path d="M790.3 282.5 L790.95 281.72 L791.6 280.95 L792.25 280.17 L792.9 279.4 L793.56 278.62 L794.21 277.85 L794.87 277.07 L795.53 276.3 L796.19 275.53 L796.86 274.76 L797.52 273.98 L798.19 273.21 L798.86 272.44 L799.53 271.67 L800.2 270.9 L800.87 270.13 L801.55 269.36 L802.23 268.59 L802.91 267.82 L803.59 267.05 L804.27 266.28 L804.95 265.52 L805.64 264.75 L806.32 263.98 L807.01 263.22 L807.7 262.45 L808.39 261.69 L809.08 260.92 L809.78 260.16 L810.47 259.4 L811.17 258.64 L811.87 257.87 L812.57 257.11 L813.27 256.35 L813.97 255.59 L814.68 254.83 L815.38 254.08 L816.09 253.32 L816.8 252.56 L817.51 251.8 L818.22 251.05 L818.93 250.29 L819.64 249.54 L820.35 248.79 L821.07 248.03 L821.79 247.28 L822.5 246.53 L823.22 245.78 L823.94 245.03 L824.66 244.28 L825.38 243.53 L826.11 242.78 L826.83 242.04 L827.56 241.29 L828.28 240.55 L829.01 239.8 L829.74 239.06 L830.47 238.32 L831.2 237.57 L831.93 236.83 L832.66 236.09 L833.4 235.36 L834.13 234.62 L834.86 233.88 L835.6 233.15 L836.34 232.41 L837.07 231.68 L837.81 230.94 L838.55 230.21 L839.29 229.48 L840.03 228.75 L840.77 228.02 L841.52 227.3 L842.26 226.57 L843 225.84 L843.75 225.12 L844.49 224.4 L845.24 223.68 L845.98 222.96 L846.73 222.24 L847.48 221.52 L848.22 220.8 L848.97 220.08 L849.72 219.37 L850.47 218.66 L851.22 217.95 L851.97 217.23 L852.72 216.53 L853.48 215.82 L854.23 215.11 L854.98 214.41 L855.73 213.7 L856.49 213 L857.24 212.3 L858 211.6 L858.75 210.9 L859.51 210.21 L860.26 209.51 L861.02 208.82 L861.77 208.12 L862.53 207.43 L863.29 206.75 L864.04 206.06 L864.8 205.37 L865.56 204.69 L866.32 204.01 L867.08 203.33 L867.83 202.65 L868.59 201.97 L869.35 201.3 L870.11 200.62 L870.87 199.95 L871.63 199.28 L872.39 198.61 L873.15 197.95 L873.91 197.28 L874.67 196.62 L875.43 195.96 L876.19 195.3 L876.95 194.65 L877.71 193.99 L878.47 193.34 L879.23 192.69 L879.99 192.05 L880.75 191.4 L881.51 190.76 L882.27 190.12 L883.03 189.48 L883.79 188.84 L884.55 188.21 L885.31 187.57 L886.07 186.94 L886.84 186.32 L887.6 185.69 L888.36 185.07 L889.12 184.45 L889.88 183.83 L890.64 183.22 L891.4 182.6 L892.16 181.99 L892.92 181.39 L893.68 180.78 L894.44 180.18 L895.2 179.58 L895.96 178.98 L896.72 178.39 L897.48 177.8 L898.24 177.21 L899.01 176.63 L899.77 176.05 L900.53 175.47 L901.29 174.89 L902.05 174.32 L902.81 173.75 L903.57 173.18 L904.33 172.62 L905.09 172.06 L905.85 171.5 L906.61 170.95 L907.37 170.4 L908.13 169.85 L908.89 169.31 L909.65 168.77 L910.41 168.23 L911.17 167.7 L911.94 167.17 L912.7 166.64 L913.46 166.12 L914.22 165.6 L914.98 165.08 L915.74 164.57 L916.51 164.06 L917.27 163.56 L918.03 163.06 L918.79 162.57 L919.56 162.07 L920.32 161.59 L921.08 161.1 L921.85 160.62 L922.61 160.15 L923.38 159.68 L924.14 159.21 L924.91 158.75 L925.67 158.29 L926.44 157.84 L927.21 157.39 L927.98 156.94 L928.75 156.5 L929.52 156.07 L930.29 155.64 L931.06 155.21 L931.83 154.79 L932.6 154.37 L933.37 153.96 L934.15 153.56 L934.92 153.15 L935.7 152.76 L936.47 152.37 L937.25 151.98 L938.03 151.6 L938.81 151.22 L939.59 150.85 L940.37 150.49 L941.16 150.13 L941.94 149.77 L942.73 149.42 L943.52 149.08 L944.31 148.74 L945.1 148.41 L945.89 148.08 L946.68 147.76 L947.48 147.44 L948.28 147.13 L949.08 146.83 L949.88 146.53 L950.68 146.24 L951.48 145.95 L952.29 145.67 L953.1 145.39 L953.91 145.13 L954.73 144.86 L955.54 144.61 L956.36 144.36 L957.18 144.11 L958 143.88 L958.83 143.64 L959.66 143.42 L960.49 143.2 L961.32 142.99 L962.16 142.78 L963 142.58 L963.84 142.39 L964.68 142.21 L965.53 142.03 L966.38 141.85 L967.24 141.69 L968.1 141.53 L968.96 141.38 L969.82 141.23 L970.69 141.09 L971.56 140.96 L972.44 140.83 L973.32 140.71 L974.2 140.6 L975.08 140.5 L975.97 140.4 L976.87 140.31 L977.77 140.22 L978.67 140.15 L979.58 140.08 L980.49 140.01 L981.4 139.96 L982.32 139.91 L983.24 139.87 L984.17 139.83 L985.1 139.8 L986.04 139.78 L986.98 139.77 L987.93 139.76 L988.88 139.76 L989.84 139.77 L990.8 139.78 L991.76 139.8 L992.73 139.83 L993.71 139.87 L994.69 139.91 L995.67 139.96 L996.66 140.02 L997.66 140.08 L998.66 140.15 L999.67 140.23 L1000.68 140.31 L1001.69 140.4 L1002.71 140.5 L1003.74 140.6 L1004.77 140.72 L1005.81 140.84 L1006.86 140.96 L1007.9 141.09 L1008.96 141.23 L1010.02 141.38 L1011.08 141.53 L1012.15 141.69 L1013.23 141.86 L1014.31 142.03 L1015.4 142.21 L1016.49 142.4 L1017.59 142.59 L1018.69 142.79 L1019.8 142.99 L1020.92 143.21 L1022.04 143.42 L1023.16 143.65 L1024.29 143.88 L1025.43 144.12 L1026.57 144.36 L1027.72 144.61 L1028.88 144.87 L1030.04 145.13 L1031.2 145.4" stroke="#4ec36b" stroke-width="1.55" stroke-dasharray="1.55 2.13" fill="none"/>
<path d="M1031.2 145.4L1048.9 150" stroke="#4ec36b" stroke-width="1.6" fill="none"/>
<rect x="1047.7" y="148.8" width="2.4" height="2.4" fill="#f0603c"/>
<path d="M824.57 289.86 L824.42 291.14 L824.22 292.41 L823.95 293.67 L823.62 294.92 L823.23 296.15 L822.78 297.37 L822.27 298.56 L821.71 299.73 L821.09 300.88 L820.41 301.99 L819.69 303.07 L818.91 304.11 L818.09 305.11 L817.21 306.07 L816.3 306.98 L815.34 307.85 L814.33 308.67 L813.3 309.44 L812.22 310.15 L811.11 310.81 L809.98 311.41 L808.81 311.96 L807.62 312.44 L806.41 312.86 L805.18 313.22 L803.94 313.51 L802.68 313.74 L801.42 313.9 L800.14 314 L798.87 314.04 L797.6 314 L796.33 313.9 L795.07 313.74 L793.82 313.51 L792.59 313.22 L791.38 312.86 L790.18 312.44 L789.02 311.96 L787.88 311.41 L786.78 310.81 L785.71 310.15 L784.68 309.44 L783.69 308.67 L782.75 307.85 L781.85 306.98 L781.01 306.07 L780.22 305.11 L779.49 304.11 L778.81 303.07 L778.2 301.99 L777.65 300.88 L777.16 299.73 L776.75 298.56 L776.4 297.37 L776.12 296.15 L775.91 294.92 L775.77 293.67 L775.7 292.41 L775.71 291.14 L775.78 289.86 L775.93 288.59 L776.16 287.32 L776.45 286.05 L776.81 284.79 L777.24 283.54 L777.74 282.31 L778.31 281.1 L778.94 279.91 L779.63 278.74 L780.38 277.61 L781.19 276.51 L782.05 275.44 L782.97 274.41 L783.94 273.42 L784.95 272.48 L786 271.59 L787.09 270.74 L788.22 269.95 L789.39 269.21 L790.58 268.52 L791.79 267.9 L793.03 267.33 L794.29 266.83 L795.56 266.39 L796.84 266.02 L798.12 265.71 L799.42 265.47 L800.71 265.3 L801.99 265.2 L803.27 265.17 L804.54 265.2 L805.79 265.3 L807.02 265.47 L808.24 265.71 L809.43 266.02 L810.59 266.39 L811.72 266.83 L812.82 267.33 L813.89 267.9 L814.92 268.52 L815.9 269.21 L816.84 269.95 L817.74 270.74 L818.59 271.59 L819.39 272.48 L820.14 273.42 L820.84 274.41 L821.48 275.44 L822.07 276.51 L822.6 277.61 L823.07 278.74 L823.48 279.91 L823.84 281.1 L824.13 282.31 L824.36 283.54 L824.52 284.79 L824.63 286.05 L824.67 287.32 L824.65 288.59 L824.57 289.86 Z" stroke="#4ec36b" stroke-width="2.1" fill="none"/>
<path d="M787.1 282.5h6.4M790.3 279.3v6.4" stroke="#ff0000" stroke-width="1.7" fill="none"/>
<g font-family="Liberation Sans, sans-serif" fill="#ffffff"><text x="366.46" y="335.9" font-size="11.32" textLength="22.06" lengthAdjust="spacingAndGlyphs">DSX</text><text x="790.81" y="292.8" font-size="11.32" textLength="19.52" lengthAdjust="spacingAndGlyphs">STA</text></g>
<g font-family="Liberation Sans, sans-serif" fill="#8a8a8a"><text x="1472.39" y="330.03" font-size="11.29" textLength="25.99" lengthAdjust="spacingAndGlyphs">+180</text><circle cx="1501.15" cy="323.45" r="0.9" fill="#6a6a6a"/><text x="1374.83" y="330.03" font-size="11.29" textLength="25.99" lengthAdjust="spacingAndGlyphs">+210</text><circle cx="1403.59" cy="323.45" r="0.9" fill="#6a6a6a"/><text x="1277.27" y="330.03" font-size="11.29" textLength="25.99" lengthAdjust="spacingAndGlyphs">+240</text><circle cx="1306.03" cy="323.45" r="0.9" fill="#6a6a6a"/><text x="1179.71" y="330.03" font-size="11.29" textLength="25.99" lengthAdjust="spacingAndGlyphs">+270</text><circle cx="1208.47" cy="323.45" r="0.9" fill="#6a6a6a"/><text x="1082.15" y="330.03" font-size="11.29" textLength="25.99" lengthAdjust="spacingAndGlyphs">+300</text><circle cx="1110.91" cy="323.45" r="0.9" fill="#6a6a6a"/><text x="984.59" y="330.03" font-size="11.29" textLength="25.99" lengthAdjust="spacingAndGlyphs">+330</text><circle cx="1013.35" cy="323.45" r="0.9" fill="#6a6a6a"/><text x="893.17" y="330.03" font-size="11.29" textLength="13.68" lengthAdjust="spacingAndGlyphs">+0</text><circle cx="909.63" cy="323.45" r="0.9" fill="#6a6a6a"/><text x="792.55" y="330.03" font-size="11.29" textLength="19.83" lengthAdjust="spacingAndGlyphs">+30</text><circle cx="815.15" cy="323.45" r="0.9" fill="#6a6a6a"/><text x="694.99" y="330.03" font-size="11.29" textLength="19.83" lengthAdjust="spacingAndGlyphs">+60</text><circle cx="717.59" cy="323.45" r="0.9" fill="#6a6a6a"/><text x="597.43" y="330.03" font-size="11.29" textLength="19.83" lengthAdjust="spacingAndGlyphs">+90</text><circle cx="620.03" cy="323.45" r="0.9" fill="#6a6a6a"/><text x="496.79" y="330.03" font-size="11.29" textLength="25.99" lengthAdjust="spacingAndGlyphs">+120</text><circle cx="525.55" cy="323.45" r="0.9" fill="#6a6a6a"/><text x="399.23" y="330.03" font-size="11.29" textLength="25.99" lengthAdjust="spacingAndGlyphs">+150</text><circle cx="427.99" cy="323.45" r="0.9" fill="#6a6a6a"/><text x="301.67" y="330.03" font-size="11.29" textLength="25.99" lengthAdjust="spacingAndGlyphs">+180</text><circle cx="330.43" cy="323.45" r="0.9" fill="#6a6a6a"/><text x="890.41" y="24.58" font-size="11.29" textLength="19.83" lengthAdjust="spacingAndGlyphs">+90</text><circle cx="913.01" cy="18" r="0.9" fill="#6a6a6a"/><text x="890.41" y="123.45" font-size="11.29" textLength="19.83" lengthAdjust="spacingAndGlyphs">+60</text><circle cx="913.01" cy="116.87" r="0.9" fill="#6a6a6a"/><text x="890.41" y="221.19" font-size="11.29" textLength="19.83" lengthAdjust="spacingAndGlyphs">+30</text><circle cx="913.01" cy="214.61" r="0.9" fill="#6a6a6a"/><text x="890.41" y="428.67" font-size="11.29" textLength="19.83" lengthAdjust="spacingAndGlyphs">−30</text><circle cx="913.01" cy="422.09" r="0.9" fill="#6a6a6a"/><text x="890.41" y="526.41" font-size="11.29" textLength="19.83" lengthAdjust="spacingAndGlyphs">−60</text><circle cx="913.01" cy="519.83" r="0.9" fill="#6a6a6a"/><text x="890.41" y="623.38" font-size="11.29" textLength="19.83" lengthAdjust="spacingAndGlyphs">−90</text><circle cx="913.01" cy="616.8" r="0.9" fill="#6a6a6a"/></g>
<g font-family="Liberation Mono, monospace" font-size="15.31" fill="#f2f2f2"><text x="316" y="30" textLength="50" lengthAdjust="spacingAndGlyphs">BE0009</text><text x="315.2" y="43.3" textLength="316.69" lengthAdjust="spacingAndGlyphs">Beg: 20251008 23:19:17 (sol = 195.57°)</text><text x="315.2" y="56.6" textLength="316.69" lengthAdjust="spacingAndGlyphs">End: 20251009 03:56:16 (sol = 195.76°)</text><text x="315.2" y="68.9" textLength="316.69" lengthAdjust="spacingAndGlyphs">--------------------------------------</text><text x="315.2" y="82.2" textLength="58.34" lengthAdjust="spacingAndGlyphs">...: 10</text><text x="315.2" y="94.6" textLength="50" lengthAdjust="spacingAndGlyphs">DSX: 1</text><text x="315.2" y="107.8" textLength="50" lengthAdjust="spacingAndGlyphs">STA: 1</text></g>
<g font-family="Liberation Sans, sans-serif" fill="#555555"><text transform="translate(149.4 644) rotate(-90)" x="-53.35" y="0" font-size="30.55" textLength="54.58" lengthAdjust="spacingAndGlyphs">APR</text><text transform="translate(294.4 645) rotate(-90)" x="-56.64" y="0" font-size="30.55" textLength="57.27" lengthAdjust="spacingAndGlyphs">MAY</text><text transform="translate(436.7 643.3) rotate(-90)" x="-47.82" y="0" font-size="30.55" textLength="49.99" lengthAdjust="spacingAndGlyphs">JUN</text><text transform="translate(576.4 641.1) rotate(-90)" x="-45.07" y="0" font-size="30.55" textLength="45.94" lengthAdjust="spacingAndGlyphs">JUL</text><text transform="translate(722.8 644.2) rotate(-90)" x="-57.75" y="0" font-size="30.55" textLength="59.74" lengthAdjust="spacingAndGlyphs">AUG</text><text transform="translate(872.2 645) rotate(-90)" x="-49.82" y="0" font-size="30.55" textLength="51.13" lengthAdjust="spacingAndGlyphs">SEP</text><text transform="translate(1016.5 643.8) rotate(-90)" x="-57.47" y="0" font-size="30.55" textLength="58.05" lengthAdjust="spacingAndGlyphs">OCT</text><text transform="translate(1169.4 645) rotate(-90)" x="-59.83" y="0" font-size="30.55" textLength="60.02" lengthAdjust="spacingAndGlyphs">NOV</text><text transform="translate(1318.5 645.8) rotate(-90)" x="-55.63" y="0" font-size="30.55" textLength="56.61" lengthAdjust="spacingAndGlyphs">DEC</text><text transform="translate(1468.9 643.1) rotate(-90)" x="-46.03" y="0" font-size="30.55" textLength="48.18" lengthAdjust="spacingAndGlyphs">JAN</text><text transform="translate(1628 647) rotate(-90)" x="-49.38" y="0" font-size="30.55" textLength="50.69" lengthAdjust="spacingAndGlyphs">FEB</text><text transform="translate(1766 645.6) rotate(-90)" x="-60.24" y="0" font-size="30.55" textLength="61.55" lengthAdjust="spacingAndGlyphs">MAR</text></g>
<path d="M980 842.3 V641.5" stroke="#ff0000" stroke-width="2.6" stroke-dasharray="5.14 2.22" fill="none"/>
<g><rect x="105.95" y="832.22" width="23.32" height="4.16" fill="#bddf26"/><rect x="164.82" y="832.22" width="180.3" height="4.16" fill="#bddf26"/><rect x="365.94" y="832.22" width="258.79" height="4.16" fill="#bddf26"/><rect x="635.75" y="832.22" width="150.87" height="4.16" fill="#bddf26"/><rect x="807.44" y="832.22" width="92" height="4.16" fill="#bddf26"/><rect x="920.27" y="832.22" width="52.76" height="4.16" fill="#bddf26"/><rect x="984.04" y="832.22" width="82.19" height="4.16" fill="#bddf26"/><rect x="1082.16" y="832.22" width="121.43" height="4.16" fill="#bddf26"/><rect x="1244.04" y="832.22" width="82.19" height="4.16" fill="#bddf26"/><rect x="1337.24" y="832.22" width="18.42" height="4.16" fill="#bddf26"/><rect x="1381.39" y="832.22" width="62.57" height="4.16" fill="#bddf26"/><rect x="1459.88" y="832.22" width="52.76" height="4.16" fill="#bddf26"/><rect x="1523.66" y="832.22" width="23.32" height="4.16" fill="#bddf26"/><rect x="1724.78" y="832.22" width="23.32" height="4.16" fill="#bddf26"/><rect x="1759.12" y="832.22" width="23.32" height="4.16" fill="#bddf26"/><rect x="164.82" y="815.86" width="23.32" height="4.16" fill="#81d34d"/><rect x="223.68" y="815.86" width="62.57" height="4.16" fill="#81d34d"/><rect x="311.98" y="815.86" width="28.23" height="4.16" fill="#81d34d"/><rect x="365.94" y="815.86" width="126.34" height="4.16" fill="#81d34d"/><rect x="508.21" y="815.86" width="145.96" height="4.16" fill="#81d34d"/><rect x="704.43" y="815.86" width="33.13" height="4.16" fill="#81d34d"/><rect x="773.11" y="815.86" width="72.38" height="4.16" fill="#81d34d"/><rect x="871.22" y="815.86" width="116.53" height="4.16" fill="#81d34d"/><rect x="1003.67" y="815.86" width="13.51" height="4.16" fill="#81d34d"/><rect x="1062.53" y="815.86" width="150.87" height="4.16" fill="#81d34d"/><rect x="1244.04" y="815.86" width="23.32" height="4.16" fill="#81d34d"/><rect x="1293.09" y="815.86" width="23.32" height="4.16" fill="#81d34d"/><rect x="1342.15" y="815.86" width="23.32" height="4.16" fill="#81d34d"/><rect x="1386.3" y="815.86" width="42.94" height="4.16" fill="#81d34d"/><rect x="1459.88" y="815.86" width="23.32" height="4.16" fill="#81d34d"/><rect x="1548.18" y="815.86" width="23.32" height="4.16" fill="#81d34d"/><rect x="164.82" y="799.5" width="23.32" height="4.16" fill="#4ec36b"/><rect x="258.02" y="799.5" width="229.36" height="4.16" fill="#4ec36b"/><rect x="508.21" y="799.5" width="106.72" height="4.16" fill="#4ec36b"/><rect x="625.94" y="799.5" width="92" height="4.16" fill="#4ec36b"/><rect x="728.96" y="799.5" width="96.91" height="4.16" fill="#4ec36b"/><rect x="949.71" y="799.5" width="199.92" height="4.16" fill="#4ec36b"/><rect x="1160.64" y="799.5" width="87.09" height="4.16" fill="#4ec36b"/><rect x="1258.76" y="799.5" width="185.21" height="4.16" fill="#4ec36b"/><rect x="1459.88" y="799.5" width="23.32" height="4.16" fill="#4ec36b"/><rect x="1553.09" y="799.5" width="23.32" height="4.16" fill="#4ec36b"/><rect x="194.25" y="783.14" width="23.32" height="4.16" fill="#2ab07f"/><rect x="321.79" y="783.14" width="185.21" height="4.16" fill="#2ab07f"/><rect x="518.02" y="783.14" width="23.32" height="4.16" fill="#2ab07f"/><rect x="557.26" y="783.14" width="126.34" height="4.16" fill="#2ab07f"/><rect x="807.44" y="783.14" width="23.32" height="4.16" fill="#2ab07f"/><rect x="954.61" y="783.14" width="18.42" height="4.16" fill="#2ab07f"/><rect x="988.95" y="783.14" width="136.15" height="4.16" fill="#2ab07f"/><rect x="1155.74" y="783.14" width="62.57" height="4.16" fill="#2ab07f"/><rect x="1244.04" y="783.14" width="23.32" height="4.16" fill="#2ab07f"/><rect x="1317.62" y="783.14" width="23.32" height="4.16" fill="#2ab07f"/><rect x="1396.11" y="783.14" width="23.32" height="4.16" fill="#2ab07f"/><rect x="1464.79" y="783.14" width="185.21" height="4.16" fill="#2ab07f"/><rect x="341.42" y="766.78" width="28.23" height="4.16" fill="#1e9b8a"/><rect x="410.09" y="766.78" width="38.04" height="4.16" fill="#1e9b8a"/><rect x="468.96" y="766.78" width="23.32" height="4.16" fill="#1e9b8a"/><rect x="527.83" y="766.78" width="18.42" height="4.16" fill="#1e9b8a"/><rect x="562.17" y="766.78" width="28.23" height="4.16" fill="#1e9b8a"/><rect x="616.13" y="766.78" width="33.13" height="4.16" fill="#1e9b8a"/><rect x="959.52" y="766.78" width="28.23" height="4.16" fill="#1e9b8a"/><rect x="1062.53" y="766.78" width="23.32" height="4.16" fill="#1e9b8a"/><rect x="1101.78" y="766.78" width="23.32" height="4.16" fill="#1e9b8a"/><rect x="1160.64" y="766.78" width="33.13" height="4.16" fill="#1e9b8a"/><rect x="1248.94" y="766.78" width="23.32" height="4.16" fill="#1e9b8a"/><rect x="1425.54" y="766.78" width="87.09" height="4.16" fill="#1e9b8a"/><rect x="419.91" y="750.42" width="23.32" height="4.16" fill="#25858e"/><rect x="532.73" y="750.42" width="23.32" height="4.16" fill="#25858e"/><rect x="567.07" y="750.42" width="23.32" height="4.16" fill="#25858e"/><rect x="621.03" y="750.42" width="121.43" height="4.16" fill="#25858e"/><rect x="969.33" y="750.42" width="165.58" height="4.16" fill="#25858e"/><rect x="1185.17" y="750.42" width="160.68" height="4.16" fill="#25858e"/><rect x="1469.69" y="750.42" width="23.32" height="4.16" fill="#25858e"/><rect x="429.72" y="734.06" width="23.32" height="4.16" fill="#2d708e"/><rect x="576.88" y="734.06" width="155.77" height="4.16" fill="#2d708e"/><rect x="993.86" y="734.06" width="111.62" height="4.16" fill="#2d708e"/><rect x="1116.49" y="734.06" width="106.72" height="4.16" fill="#2d708e"/><rect x="1263.66" y="734.06" width="28.23" height="4.16" fill="#2d708e"/><rect x="1489.32" y="734.06" width="23.32" height="4.16" fill="#2d708e"/><rect x="591.6" y="717.7" width="23.32" height="4.16" fill="#375a8c"/><rect x="655.37" y="717.7" width="116.53" height="4.16" fill="#375a8c"/><rect x="1072.34" y="717.7" width="170.49" height="4.16" fill="#375a8c"/><rect x="1263.66" y="717.7" width="23.32" height="4.16" fill="#375a8c"/><rect x="596.51" y="701.34" width="136.15" height="4.16" fill="#424086"/><rect x="1091.97" y="701.34" width="28.23" height="4.16" fill="#424086"/><rect x="1199.89" y="701.34" width="23.32" height="4.16" fill="#424086"/><rect x="1273.47" y="701.34" width="52.76" height="4.16" fill="#424086"/><rect x="1111.59" y="684.98" width="23.32" height="4.16" fill="#482475"/></g>
<path d="M113.21 833.8h7.8M117.11 829.9v7.8M240.76 833.8h7.8M244.66 829.9v7.8M510.56 833.8h7.8M514.46 829.9v7.8M706.78 833.8h7.8M710.68 829.9v7.8M833.2 833.8h7.8M837.1 829.9v7.8M961.87 833.8h7.8M965.77 829.9v7.8M986.4 833.8h7.8M990.3 829.9v7.8M1116.4 833.8h7.8M1120.3 829.9v7.8M1295.45 833.8h7.8M1299.35 829.9v7.8M1342.05 833.8h7.8M1345.95 829.9v7.8M1413.18 833.8h7.8M1417.08 829.9v7.8M1481.86 833.8h7.8M1485.76 829.9v7.8M1530.92 833.8h7.8M1534.82 829.9v7.8M1732.04 833.8h7.8M1735.94 829.9v7.8M1766.38 833.8h7.8M1770.28 829.9v7.8M172.08 817.44h7.8M175.98 813.54v7.8M255.47 817.44h7.8M259.37 813.54v7.8M324.15 817.44h7.8M328.05 813.54v7.8M436.98 817.44h7.8M440.88 813.54v7.8M598.86 817.44h7.8M602.76 813.54v7.8M716.59 817.44h7.8M720.49 813.54v7.8M792.63 817.44h7.8M796.53 813.54v7.8M939.8 817.44h7.8M943.7 813.54v7.8M1006.02 817.44h7.8M1009.92 813.54v7.8M1153.19 817.44h7.8M1157.09 813.54v7.8M1251.3 817.44h7.8M1255.2 813.54v7.8M1300.36 817.44h7.8M1304.26 813.54v7.8M1349.41 817.44h7.8M1353.31 813.54v7.8M1403.37 817.44h7.8M1407.27 813.54v7.8M1467.14 817.44h7.8M1471.04 813.54v7.8M1555.44 817.44h7.8M1559.34 813.54v7.8M174.53 801.08h7.8M178.43 797.18v7.8M378.11 801.08h7.8M382.01 797.18v7.8M544.9 801.08h7.8M548.8 797.18v7.8M682.26 801.08h7.8M686.16 797.18v7.8M741.12 801.08h7.8M745.02 797.18v7.8M1074.7 801.08h7.8M1078.6 797.18v7.8M1216.96 801.08h7.8M1220.86 797.18v7.8M1305.26 801.08h7.8M1309.16 797.18v7.8M1467.14 801.08h7.8M1471.04 797.18v7.8M1560.35 801.08h7.8M1564.25 797.18v7.8M201.51 784.72h7.8M205.41 780.82v7.8M400.19 784.72h7.8M404.09 780.82v7.8M525.28 784.72h7.8M529.18 780.82v7.8M638.11 784.72h7.8M642.01 780.82v7.8M814.71 784.72h7.8M818.61 780.82v7.8M959.42 784.72h7.8M963.32 780.82v7.8M1040.36 784.72h7.8M1044.26 780.82v7.8M1187.53 784.72h7.8M1191.43 780.82v7.8M1251.3 784.72h7.8M1255.2 780.82v7.8M1324.88 784.72h7.8M1328.78 780.82v7.8M1403.37 784.72h7.8M1407.27 780.82v7.8M1545.63 784.72h7.8M1549.53 780.82v7.8M356.04 768.36h7.8M359.94 764.46v7.8M425.89 768.36h7.8M429.79 764.46v7.8M476.22 768.36h7.8M480.12 764.46v7.8M535.09 768.36h7.8M538.99 764.46v7.8M570.9 768.36h7.8M574.8 764.46v7.8M630.75 768.36h7.8M634.65 764.46v7.8M974.14 768.36h7.8M978.04 764.46v7.8M1069.79 768.36h7.8M1073.69 764.46v7.8M1109.04 768.36h7.8M1112.94 764.46v7.8M1177.72 768.36h7.8M1181.62 764.46v7.8M1256.21 768.36h7.8M1260.11 764.46v7.8M1467.14 768.36h7.8M1471.04 764.46v7.8M427.17 752h7.8M431.07 748.1v7.8M539.99 752h7.8M543.89 748.1v7.8M574.33 752h7.8M578.23 748.1v7.8M704.33 752h7.8M708.23 748.1v7.8M1094.32 752h7.8M1098.22 748.1v7.8M1270.92 752h7.8M1274.82 748.1v7.8M1476.96 752h7.8M1480.86 748.1v7.8M436.98 735.64h7.8M440.88 731.74v7.8M630.75 735.64h7.8M634.65 731.74v7.8M1038.99 735.64h7.8M1042.89 731.74v7.8M1167.91 735.64h7.8M1171.81 731.74v7.8M1275.83 735.64h7.8M1279.73 731.74v7.8M1496.58 735.64h7.8M1500.48 731.74v7.8M598.86 719.28h7.8M602.76 715.38v7.8M726.41 719.28h7.8M730.31 715.38v7.8M1187.53 719.28h7.8M1191.43 715.38v7.8M1270.92 719.28h7.8M1274.82 715.38v7.8M687.16 702.92h7.8M691.06 699.02v7.8M1101.68 702.92h7.8M1105.58 699.02v7.8M1207.15 702.92h7.8M1211.05 699.02v7.8M1300.36 702.92h7.8M1304.26 699.02v7.8M1118.85 686.56h7.8M1122.75 682.66v7.8" stroke="#ffffff" stroke-width="2.6" fill="none"/>
<g font-family="Liberation Sans, sans-serif" fill="#eeeeee"><text x="106.59" y="831.7" font-size="11.32" textLength="20.04" lengthAdjust="spacingAndGlyphs">KSE</text><text x="244.03" y="831.7" font-size="11.32" textLength="19.46" lengthAdjust="spacingAndGlyphs">ETA</text><text x="483.07" y="831.7" font-size="11.32" textLength="22.44" lengthAdjust="spacingAndGlyphs">NZC</text><text x="698.41" y="831.7" font-size="11.32" textLength="23.09" lengthAdjust="spacingAndGlyphs">NDA</text><text x="842.87" y="831.7" font-size="11.32" textLength="19.51" lengthAdjust="spacingAndGlyphs">SPE</text><text x="934.72" y="831.7" font-size="11.32" textLength="22.76" lengthAdjust="spacingAndGlyphs">ARD</text><text x="1013.5" y="831.7" font-size="11.32" textLength="21.29" lengthAdjust="spacingAndGlyphs">EGE</text><text x="1131.29" y="831.7" font-size="11.32" textLength="20.72" lengthAdjust="spacingAndGlyphs">NTA</text><text x="1271.7" y="831.7" font-size="11.32" textLength="25.31" lengthAdjust="spacingAndGlyphs">MON</text><text x="1332.15" y="831.7" font-size="11.32" textLength="21.8" lengthAdjust="spacingAndGlyphs">URS</text><text x="1400.99" y="831.7" font-size="11.32" textLength="22" lengthAdjust="spacingAndGlyphs">AHY</text><text x="1473.07" y="831.7" font-size="11.32" textLength="25.13" lengthAdjust="spacingAndGlyphs">GUM</text><text x="1522.83" y="831.7" font-size="11.32" textLength="23.13" lengthAdjust="spacingAndGlyphs">QHY</text><text x="1724.81" y="831.7" font-size="11.32" textLength="21.84" lengthAdjust="spacingAndGlyphs">XHE</text><text x="1761.6" y="831.7" font-size="11.32" textLength="16.89" lengthAdjust="spacingAndGlyphs">EVI</text><text x="165.46" y="815.34" font-size="11.32" textLength="21" lengthAdjust="spacingAndGlyphs">AVB</text><text x="245.01" y="815.34" font-size="11.32" textLength="17.73" lengthAdjust="spacingAndGlyphs">ELY</text><text x="311.13" y="815.34" font-size="11.32" textLength="23.78" lengthAdjust="spacingAndGlyphs">CAM</text><text x="420.14" y="815.34" font-size="11.32" textLength="21.52" lengthAdjust="spacingAndGlyphs">SSG</text><text x="567.09" y="815.34" font-size="11.32" textLength="20.89" lengthAdjust="spacingAndGlyphs">PCA</text><text x="708.88" y="815.34" font-size="11.32" textLength="23.14" lengthAdjust="spacingAndGlyphs">AUD</text><text x="797.42" y="815.34" font-size="11.32" textLength="22.65" lengthAdjust="spacingAndGlyphs">AUR</text><text x="919.79" y="815.34" font-size="11.32" textLength="22.06" lengthAdjust="spacingAndGlyphs">DSX</text><text x="998.05" y="815.34" font-size="11.32" textLength="23.49" lengthAdjust="spacingAndGlyphs">OCU</text><text x="1125.84" y="815.34" font-size="11.32" textLength="22.68" lengthAdjust="spacingAndGlyphs">OER</text><text x="1243.14" y="815.34" font-size="11.32" textLength="23.16" lengthAdjust="spacingAndGlyphs">DKD</text><text x="1292.5" y="815.34" font-size="11.32" textLength="22.11" lengthAdjust="spacingAndGlyphs">DSV</text><text x="1343.86" y="815.34" font-size="11.32" textLength="18.51" lengthAdjust="spacingAndGlyphs">ALY</text><text x="1398.97" y="815.34" font-size="11.32" textLength="16.28" lengthAdjust="spacingAndGlyphs">JLE</text><text x="1460.04" y="815.34" font-size="11.32" textLength="21.31" lengthAdjust="spacingAndGlyphs">SCC</text><text x="1548.7" y="815.34" font-size="11.32" textLength="19.92" lengthAdjust="spacingAndGlyphs">FEV</text><text x="166.33" y="798.98" font-size="11.32" textLength="18.36" lengthAdjust="spacingAndGlyphs">LYR</text><text x="361.83" y="798.98" font-size="11.32" textLength="20.35" lengthAdjust="spacingAndGlyphs">JMC</text><text x="550.04" y="798.98" font-size="11.32" textLength="16.81" lengthAdjust="spacingAndGlyphs">JPE</text><text x="660.84" y="798.98" font-size="11.32" textLength="20.57" lengthAdjust="spacingAndGlyphs">PAU</text><text x="764.61" y="798.98" font-size="11.32" textLength="18.23" lengthAdjust="spacingAndGlyphs">NIA</text><text x="1038.87" y="798.98" font-size="11.32" textLength="19.52" lengthAdjust="spacingAndGlyphs">STA</text><text x="1193.4" y="798.98" font-size="11.32" textLength="24.54" lengthAdjust="spacingAndGlyphs">NOO</text><text x="1340.73" y="798.98" font-size="11.32" textLength="24.91" lengthAdjust="spacingAndGlyphs">COM</text><text x="1459.27" y="798.98" font-size="11.32" textLength="22.5" lengthAdjust="spacingAndGlyphs">NCC</text><text x="1553.41" y="798.98" font-size="11.32" textLength="20.72" lengthAdjust="spacingAndGlyphs">FED</text><text x="196.05" y="782.62" font-size="11.32" textLength="18.25" lengthAdjust="spacingAndGlyphs">HVI</text><text x="402.77" y="782.62" font-size="11.32" textLength="17.72" lengthAdjust="spacingAndGlyphs">ARI</text><text x="518.24" y="782.62" font-size="11.32" textLength="21.18" lengthAdjust="spacingAndGlyphs">SZC</text><text x="606.52" y="782.62" font-size="11.32" textLength="21.33" lengthAdjust="spacingAndGlyphs">CAP</text><text x="807.03" y="782.62" font-size="11.32" textLength="22.14" lengthAdjust="spacingAndGlyphs">NUE</text><text x="949.14" y="782.62" font-size="11.32" textLength="22.59" lengthAdjust="spacingAndGlyphs">OCT</text><text x="1049.54" y="782.62" font-size="11.32" textLength="18.79" lengthAdjust="spacingAndGlyphs">ORI</text><text x="1174.1" y="782.62" font-size="11.32" textLength="24.76" lengthAdjust="spacingAndGlyphs">AMO</text><text x="1243.8" y="782.62" font-size="11.32" textLength="21.74" lengthAdjust="spacingAndGlyphs">DPC</text><text x="1320" y="782.62" font-size="11.32" textLength="17.71" lengthAdjust="spacingAndGlyphs">XVI</text><text x="1395.04" y="782.62" font-size="11.32" textLength="23.41" lengthAdjust="spacingAndGlyphs">QUA</text><text x="1548.16" y="782.62" font-size="11.32" textLength="22.67" lengthAdjust="spacingAndGlyphs">AAN</text><text x="342.03" y="766.26" font-size="11.32" textLength="21.17" lengthAdjust="spacingAndGlyphs">TAH</text><text x="421.79" y="766.26" font-size="11.32" textLength="17.84" lengthAdjust="spacingAndGlyphs">JEA</text><text x="473.21" y="766.26" font-size="11.32" textLength="13.56" lengthAdjust="spacingAndGlyphs">JIP</text><text x="528.9" y="766.26" font-size="11.32" textLength="19.24" lengthAdjust="spacingAndGlyphs">PPS</text><text x="567.34" y="766.26" font-size="11.32" textLength="21.35" lengthAdjust="spacingAndGlyphs">ZCS</text><text x="619.82" y="766.26" font-size="11.32" textLength="24.11" lengthAdjust="spacingAndGlyphs">GDR</text><text x="958.83" y="766.26" font-size="11.32" textLength="22.26" lengthAdjust="spacingAndGlyphs">DRA</text><text x="1062.37" y="766.26" font-size="11.32" textLength="22.07" lengthAdjust="spacingAndGlyphs">LUM</text><text x="1101.96" y="766.26" font-size="11.32" textLength="21.32" lengthAdjust="spacingAndGlyphs">RPU</text><text x="1165.25" y="766.26" font-size="11.32" textLength="22.1" lengthAdjust="spacingAndGlyphs">THA</text><text x="1249.45" y="766.26" font-size="11.32" textLength="20.67" lengthAdjust="spacingAndGlyphs">PSU</text><text x="1460.35" y="766.26" font-size="11.32" textLength="21.06" lengthAdjust="spacingAndGlyphs">XCB</text><text x="421.88" y="749.9" font-size="11.32" textLength="18" lengthAdjust="spacingAndGlyphs">JRC</text><text x="532.49" y="749.9" font-size="11.32" textLength="22.53" lengthAdjust="spacingAndGlyphs">CAN</text><text x="567.91" y="749.9" font-size="11.32" textLength="20.05" lengthAdjust="spacingAndGlyphs">FAN</text><text x="670.52" y="749.9" font-size="11.32" textLength="20.52" lengthAdjust="spacingAndGlyphs">PER</text><text x="1038.44" y="749.9" font-size="11.32" textLength="20.33" lengthAdjust="spacingAndGlyphs">CTA</text><text x="1253.29" y="749.9" font-size="11.32" textLength="22.48" lengthAdjust="spacingAndGlyphs">HYD</text><text x="1468.78" y="749.9" font-size="11.32" textLength="24.17" lengthAdjust="spacingAndGlyphs">XUM</text><text x="428.84" y="733.54" font-size="11.32" textLength="23.44" lengthAdjust="spacingAndGlyphs">COR</text><text x="645.27" y="733.54" font-size="11.32" textLength="21.84" lengthAdjust="spacingAndGlyphs">SDA</text><text x="1039.89" y="733.54" font-size="11.32" textLength="18.08" lengthAdjust="spacingAndGlyphs">LMI</text><text x="1156.03" y="733.54" font-size="11.32" textLength="20.78" lengthAdjust="spacingAndGlyphs">LEO</text><text x="1263.55" y="733.54" font-size="11.32" textLength="21.33" lengthAdjust="spacingAndGlyphs">EHY</text><text x="1489.16" y="733.54" font-size="11.32" textLength="21.28" lengthAdjust="spacingAndGlyphs">ECV</text><text x="593.19" y="717.18" font-size="11.32" textLength="18.44" lengthAdjust="spacingAndGlyphs">JXA</text><text x="704.35" y="717.18" font-size="11.32" textLength="21.81" lengthAdjust="spacingAndGlyphs">KCG</text><text x="1145.39" y="717.18" font-size="11.32" textLength="23.3" lengthAdjust="spacingAndGlyphs">AND</text><text x="1262.7" y="717.18" font-size="11.32" textLength="23.27" lengthAdjust="spacingAndGlyphs">DAD</text><text x="657.82" y="700.82" font-size="11.32" textLength="16.94" lengthAdjust="spacingAndGlyphs">ERI</text><text x="1097.44" y="700.82" font-size="11.32" textLength="20.59" lengthAdjust="spacingAndGlyphs">SLD</text><text x="1199.56" y="700.82" font-size="11.32" textLength="22.41" lengthAdjust="spacingAndGlyphs">ORS</text><text x="1287.21" y="700.82" font-size="11.32" textLength="24.03" lengthAdjust="spacingAndGlyphs">GEM</text><text x="1110.77" y="684.46" font-size="11.32" textLength="23.37" lengthAdjust="spacingAndGlyphs">KUM</text></g>
<g fill="none" stroke="#ffffff" stroke-opacity="0.34" stroke-width="2.08" stroke-dasharray="2.08 3.44"><path d="M74 641.5 V842.3"/><path d="M218 641.5 V842.3"/><path d="M364.7 641.5 V842.3"/><path d="M505 641.5 V842.3"/><path d="M650 641.5 V842.3"/><path d="M796.6 641.5 V842.3"/><path d="M940.2 641.5 V842.3"/><path d="M1091 641.5 V842.3"/><path d="M1239.2 641.5 V842.3"/><path d="M1394 641.5 V842.3"/><path d="M1548 641.5 V842.3"/><path d="M1687 641.5 V842.3"/></g>
<rect x="19.5" y="641.5" width="1766.0" height="200.79999999999995" fill="none" stroke="#ffffff" stroke-width="1.2"/>
<path d="M19.5 842.3V847.5M264.78 842.3V847.5M510.06 842.3V847.5M755.33 842.3V847.5M1000.61 842.3V847.5M1245.89 842.3V847.5M1491.17 842.3V847.5M1736.44 842.3V847.5" stroke="#ffffff" stroke-width="1.1" fill="none"/>
<g font-family="Liberation Sans, sans-serif" fill="#ffffff"><text x="15.41" y="862" font-size="14.71" textLength="8.13" lengthAdjust="spacingAndGlyphs">0</text><text x="256.32" y="862" font-size="14.71" textLength="16.88" lengthAdjust="spacingAndGlyphs">50</text><text x="496.83" y="862" font-size="14.71" textLength="25.88" lengthAdjust="spacingAndGlyphs">100</text><text x="742.11" y="862" font-size="14.71" textLength="25.88" lengthAdjust="spacingAndGlyphs">150</text><text x="987.53" y="862" font-size="14.71" textLength="25.98" lengthAdjust="spacingAndGlyphs">200</text><text x="1232.81" y="862" font-size="14.71" textLength="25.98" lengthAdjust="spacingAndGlyphs">250</text><text x="1478.25" y="862" font-size="14.71" textLength="25.82" lengthAdjust="spacingAndGlyphs">300</text><text x="1723.52" y="862" font-size="14.71" textLength="25.82" lengthAdjust="spacingAndGlyphs">350</text></g>
<g font-family="Liberation Sans, sans-serif" fill="#ffffff"><text x="829.24" y="882" font-size="14.71" textLength="146.42" lengthAdjust="spacingAndGlyphs">Solar longitude (deg)</text></g>
</svg></body></html>
